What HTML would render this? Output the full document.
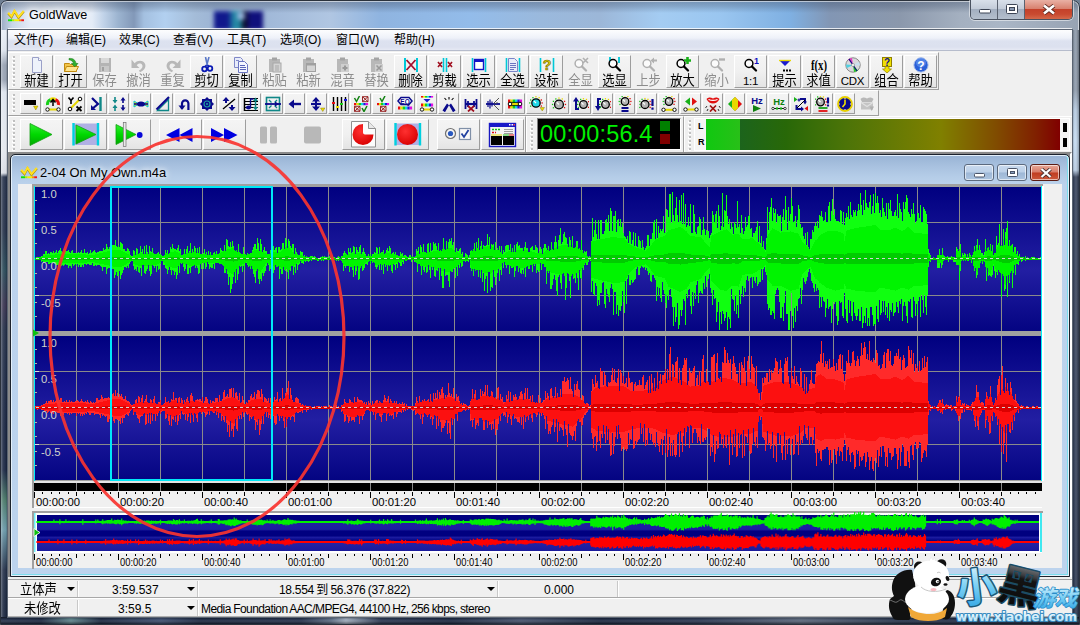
<!DOCTYPE html><html><head><meta charset="utf-8"><title>GoldWave</title><style>
*{margin:0;padding:0;box-sizing:border-box}
html,body{width:1080px;height:625px;overflow:hidden}
body{position:relative;font-family:"Liberation Sans","Noto Sans CJK SC",sans-serif;font-size:12px;color:#000;background:#6f7f92}
.abs{position:absolute}
#frame{position:absolute;left:0;top:0;width:1080px;height:625px;border-radius:7px 7px 0 0;
 background:
 linear-gradient(180deg,rgba(70,86,112,.5) 0,rgba(70,86,112,.32) 6px,rgba(70,86,112,0) 13px,rgba(255,255,255,0) 100%),
 linear-gradient(90deg,#98a8c0 0,#c8d6e8 12px,#e4ecf7 30px,#e4ecf7 92px,#c0d2e8 104px,#9cb4d0 118px,#8298b8 134px,#a4c0e0 144px,#b2d0f0 165px,#a4bcd8 195px,#9cb4d4 215px,#a0b8d8 265px,#b0c6e2 330px,#8fb4e0 380px,#93bcea 470px,#9ab9dd 540px,#9cb7d8 600px,#a4ccf2 660px,#9ac6f0 720px,#7fb0e2 790px,#8296b4 830px,#8b98ac 900px,#a4b0c0 960px,#aab6c6 1000px,#97a3b3 1080px);
 overflow:hidden}
#blob{position:absolute;left:214px;top:11px;width:49px;height:19px;filter:blur(2.200px);background:radial-gradient(ellipse 5px 5px at 27px 5px,#9cb8e0 0,#9cb8e0 60%,rgba(156,184,224,0) 100%),linear-gradient(90deg,#10188c 0,#10188c 28%,#2488a4 40%,#2488a4 52%,#0a0a20 62%,#10107c 74%,#10107c 100%)}
#tline{position:absolute;left:8px;top:28px;width:1064px;height:1px;background:rgba(255,255,255,.8)}
#frame:before{content:"";position:absolute;left:0;top:0;right:0;bottom:0;border:1px solid #2b323c;border-radius:7px 7px 0 0;box-shadow:inset 0 0 0 1px rgba(255,255,255,.55)}
#sideL{position:absolute;left:1px;top:30px;width:7px;height:594px;background:linear-gradient(90deg,rgba(255,255,255,.35) 0,rgba(255,255,255,.1) 2px,rgba(0,0,0,0) 5px,rgba(0,0,0,.45) 7px),linear-gradient(180deg,#e8eef6 0,#dde4ee 20px,#98a2b2 35px,#98a2b2 50px,#dde4ee 62px,#e4e8ee 120px,#d8dce4 143px,#28344c 147px,#26324a 200px,#2a4a58 240px,#3a3450 275px,#26324a 300px,#1c2844 400px,#1c2844 440px,#4a7868 470px,#6a98a8 500px,#26324a 540px,#1c2840 594px)}
#sideR{position:absolute;left:1072px;top:30px;width:7px;height:594px;background:linear-gradient(90deg,rgba(0,0,0,.45) 0,rgba(0,0,0,0) 2px,rgba(255,255,255,.12) 4px,rgba(0,0,0,.25) 7px),linear-gradient(180deg,#8c98a8 0,#8e9aaa 60px,#b4c8de 80px,#c4daf0 110px,#b8cce2 140px,#38445c 147px,#3a465e 300px,#344058 450px,#2c3850 594px)}
#sideB{position:absolute;left:1px;top:617px;width:1078px;height:7px;background:linear-gradient(180deg,rgba(0,0,0,.5) 0,rgba(0,0,0,0) 2px,rgba(255,255,255,.1) 4px,rgba(0,0,0,.4) 7px),linear-gradient(90deg,#26324a 0,#1c2840 40px,#5c8088 70px,#1c2840 100px,#3c4c6c 160px,#1c2840 200px,#24304a 300px,#5a6a80 330px,#9aa6b6 345px,#2a3650 380px,#1c2840 450px,#44506a 520px,#1c2840 600px,#2c3852 700px,#586478 800px,#26324a 900px,#1c2840 1078px)}
#client{position:absolute;left:8px;top:30px;width:1064px;height:587px;background:#f0f0f0;overflow:hidden;box-shadow:0 0 0 1px #5a6472}

#title{position:absolute;left:29px;top:7px;font-size:12.6px;line-height:16px;color:#000;text-shadow:0 0 6px #fff,0 0 10px #fff,0 0 14px rgba(255,255,255,.9)}
#capbtns{position:absolute;left:970px;top:0;width:103px;height:20px;border:1px solid #4a5260;border-top:none;border-radius:0 0 5px 5px;overflow:hidden;box-shadow:0 0 0 1px rgba(255,255,255,.5)}
#capbtns div{position:absolute;top:0;height:19px}
.cb{background:linear-gradient(180deg,#d9e0ea 0,#c3ccd9 45%,#a3afc0 50%,#b4bfcd 100%)}
#cbmin{left:0;width:27px;border-right:1px solid #5a6270}
#cbmax{left:27px;width:27px;border-right:1px solid #5a6270}
#cbclose{left:54px;width:48px;background:linear-gradient(180deg,#e9b0a4 0,#d8816f 45%,#c4412a 50%,#c94a30 75%,#d4694a 100%)}
#menubar{position:absolute;left:0;top:0;width:1064px;height:21px;background:linear-gradient(180deg,#fdfdfe 0,#eef1f9 40%,#dde2f0 55%,#dce1ef 85%,#e6e9f4 100%);border-bottom:1px solid #b6bccc}
#menubar span{position:absolute;top:2px;margin-left:-1px;font-size:12px;line-height:17px;white-space:nowrap}
.tb{position:absolute;background:#f0f0f0;border-top:1px solid #fff;border-left:1px solid #fff;border-right:1px solid #a0a0a0;border-bottom:1px solid #a0a0a0}
.grip{position:absolute;left:3px;width:3px;background:
 repeating-linear-gradient(180deg,#fff 0,#fff 2px,transparent 2px,transparent 4px);}
.grip:after{content:"";position:absolute;left:1px;top:-1px;width:1.500px;height:100%;background:repeating-linear-gradient(180deg,#c0c0c0 0,#c0c0c0 2px,transparent 2px,transparent 4px)}
.b{position:absolute;border:1px solid;border-color:#fff #9d9d9d #9d9d9d #fff;background:linear-gradient(180deg,#f4f4f4 0,#f0f0f0 50%,#e4e4e4 100%)}
.b.d{border-color:transparent;background:none}
.b1{top:2px;width:33px;height:33px}
.b1 i{position:absolute;left:-2px;width:35px;top:16.500px;text-align:center;font-style:normal;font-size:12.300px;line-height:16px;white-space:nowrap;transform:scaleY(1.12);transform-origin:50% 80%}
.b1 i.lt{font-size:11.500px;transform:none;top:17px;letter-spacing:-.3px}
.b1.d i{color:#8c8c8c}
.b1 svg{position:absolute;left:8px;top:1px;width:16px;height:16px}
.b2{top:2px;width:21px;height:21px}
.b2 svg{position:absolute;left:2px;top:2px;width:16px;height:16px}
.b3{top:2px;width:43px;height:31px}
.b3 svg{position:absolute;left:0;top:0;width:41px;height:29px}

#mdi{position:absolute;left:0;top:122px;width:1064px;height:427px;background:#8a8a8a;border:2px solid;border-color:#8a8a8a #fff #fff #8a8a8a}
#child{position:absolute;left:10px;top:154px;width:1060px;height:423px;border-radius:5px 5px 0 0;background:linear-gradient(180deg,#98b3d4 0,#a9c2e0 12px,#b5cde8 22px,#bbd2ec 30px,#bcd3ed 100%);border:1px solid #1c222c;box-shadow:inset 0 0 0 1px #e4f0fa,inset 0 -2px 0 0 #7cdcec,inset -2px 0 0 0 #7cdcec}
#ctitle{position:absolute;left:29px;top:10px;font-size:12.900px;line-height:16px;white-space:nowrap;text-shadow:0 0 5px #fff,0 0 8px #fff}
.cc{position:absolute;top:9px;height:17px;width:30px;border:1px solid #5c6a7e;border-radius:3px;box-shadow:inset 0 0 0 1px rgba(255,255,255,.6);background:linear-gradient(180deg,#c9daee 0,#bcd0e8 48%,#9db7d6 52%,#adc5e0 100%)}
#ccx{background:linear-gradient(180deg,#e8a898 0,#d87c68 48%,#c03c20 52%,#cc5a3c 100%);border-color:#5a1c14}
#status{position:absolute;left:0;top:547px;width:1064px;height:40px;background:#f0f0f0}
#status:before{content:"";position:absolute;left:0;top:2px;width:100%;height:1px;background:#a0a0a0}
#status:after{content:"";position:absolute;left:0;top:39px;width:100%;height:1px;background:#b0b0b0}
#status span{position:absolute;font-size:12px;line-height:16px;white-space:nowrap}
#status span.cj{font-size:12.300px;transform:scaleY(1.1);transform-origin:50% 70%}
.sp{position:absolute;width:1px;background:#c8c8c8;box-shadow:1px 0 0 #fff}
.dd{position:absolute;width:0;height:0;border-left:4px solid transparent;border-right:4px solid transparent;border-top:4px solid #000}
</style></head><body><div id="frame"><div id="sideL"></div><div id="sideR"></div><div id="sideB"></div><div id="blob"></div><div id="tline"></div><svg class="abs" style="left:7px;top:9px" width="18" height="13" viewBox="0 0 18 13"><path d="M1.200 3.800l3.300 3.600L7.500 1.800l4 6.300L16.800 1.800" stroke="#a88c00" stroke-width="2.200" fill="none" transform="translate(0 .7)"/><path d="M1.200 3.800l3.300 3.600L7.500 1.800l4 6.300L16.800 1.800" stroke="#ffe020" stroke-width="2" fill="none"/><rect x="1" y="10.300" width="4" height="1.900" fill="#10e010"/><rect x="5" y="10.300" width="2.500" height="1.900" fill="#b0f000"/><rect x="7.500" y="10.300" width="4.500" height="1.900" fill="#f8f000"/><rect x="12" y="10.300" width="2.200" height="1.900" fill="#ff9000"/><rect x="14.200" y="10.300" width="2.800" height="1.900" fill="#f01010"/></svg><span id="title">GoldWave</span><div id="capbtns"><div class="cb" id="cbmin"><svg class="abs" style="left:8px;top:9px" width="12" height="5"><rect x=".5" y=".5" width="11" height="3.500" rx="1" fill="#fff" stroke="#3c4454"/></svg></div><div class="cb" id="cbmax"><svg class="abs" style="left:8px;top:4px" width="12" height="10"><rect x=".5" y=".5" width="11" height="9" rx="1" fill="#fff" stroke="#3c4454"/><rect x="3.500" y="3.500" width="5" height="3" fill="#8a98b0" stroke="#3c4454"/></svg></div><div id="cbclose"><svg class="abs" style="left:17px;top:4px" width="14" height="11" viewBox="0 0 14 11"><path d="M2 1.500l10 8M12 1.500l-10 8" stroke="#5a2820" stroke-width="4.200"/><path d="M2 1.500l10 8M12 1.500l-10 8" stroke="#fff" stroke-width="2.600"/></svg></div></div><div id="client"><div id="menubar"><span style="left:7px">文件(F)</span><span style="left:59px">编辑(E)</span><span style="left:112px">效果(C)</span><span style="left:166px">查看(V)</span><span style="left:220px">工具(T)</span><span style="left:273px">选项(O)</span><span style="left:329px">窗口(W)</span><span style="left:387px">帮助(H)</span></div><div class="tb" style="left:0;top:22px;width:931px;height:38px"><div class="grip" style="top:4px;height:30px"></div><div class="b b1" style="left:11px"><svg viewBox="0 0 16 16"><path d="M3.5 .5h6l3 3v12h-9z" fill="#eef2fb" stroke="#9aa0c8"/><path d="M9.5 .5v3h3" fill="#fff" stroke="#9aa0c8"/></svg><i>新建</i></div><div class="b b1" style="left:45px"><svg viewBox="0 0 16 16"><path d="M1.5 6.5h5l1 1h6v7h-12z" fill="#f3c54a" stroke="#c28a10"/><path d="M1.5 14.5l2-5h12l-2.5 5z" fill="#ffe590" stroke="#c28a10"/><path d="M6 1.5c4-.5 6.5 1.5 7 5h2l-3.2 3.3L8.500 6.500h2c-.5-2-2-3.500-4.500-3.700z" fill="#2fb02f" stroke="#1a7a1a" stroke-width=".6"/></svg><i>打开</i></div><div class="b b1 d" style="left:79px"><svg viewBox="0 0 16 16"><path d="M2 1h12v14h-12z" fill="#b4b4b4"/><rect x="4" y="1" width="8" height="5" fill="#d8d8d8"/><rect x="4" y="9" width="8" height="6" fill="#c8c8c8"/><rect x="5" y="10" width="2" height="4" fill="#a0a0a0"/></svg><i>保存</i></div><div class="b b1 d" style="left:113px"><svg viewBox="0 0 16 16"><path d="M.5 2.500v8.500h8l-2.800-2.800c1.500-2 4.500-2.200 5.500-.2 1 2.200-.8 4.300-3.200 5.500l1 1.800c4-1.500 6.500-5 5-8.500-1.600-3.800-7.200-4-10.300-.6z" fill="#b8b8b8"/></svg><i>撤消</i></div><div class="b b1 d" style="left:147px"><svg viewBox="0 0 16 16"><path d="M15.500 2.500v8.500h-8l2.800-2.800c-1.500-2-4.500-2.200-5.500-.2-1 2.200.8 4.300 3.200 5.500l-1 1.800c-4-1.500-6.500-5-5-8.500 1.600-3.800 7.200-4 10.300-.6z" fill="#b8b8b8"/></svg><i>重复</i></div><div class="b b1" style="left:181px"><svg viewBox="0 0 16 16"><path d="M6.500 0l2 9M10 0l-2.500 9" stroke="#5a78c8" stroke-width="1.600" fill="none"/><circle cx="5.500" cy="12" r="2.300" fill="none" stroke="#0a1ab4" stroke-width="1.800"/><circle cx="11" cy="11.500" r="2.300" fill="none" stroke="#0a1ab4" stroke-width="1.800"/><path d="M7.200 8l-1 2.200M8.600 8l1.400 1.800" stroke="#0a1ab4" stroke-width="1.500"/></svg><i>剪切</i></div><div class="b b1" style="left:215px"><svg viewBox="0 0 16 16"><path d="M1.500 .5h6l2 2v8h-8z" fill="#e8ecfa" stroke="#8088c8"/><path d="M5.500 4.500h6l3 3v8h-9z" fill="#f4f6ff" stroke="#6a74c0"/><path d="M7 8.500h5M7 10.500h6M7 12.500h6" stroke="#5a64b8"/><path d="M3 3.500h3" stroke="#8088c8"/></svg><i>复制</i></div><div class="b b1 d" style="left:249px"><svg viewBox="0 0 16 16"><rect x="2" y="2" width="11" height="13" fill="#b8b8b8"/><rect x="5" y=".5" width="5" height="3" fill="#a4a4a4"/><rect x="6" y="6" width="8" height="9" fill="#d4d4d4" stroke="#a8a8a8"/><path d="M8 9h4M8 11h4M8 13h4" stroke="#a8a8a8"/></svg><i>粘贴</i></div><div class="b b1 d" style="left:283px"><svg viewBox="0 0 16 16"><rect x="2" y="2" width="11" height="13" fill="#b8b8b8"/><rect x="5" y=".5" width="5" height="3" fill="#a4a4a4"/><rect x="5.500" y="6.500" width="9" height="8" fill="#d4d4d4" stroke="#a0a0a0"/><rect x="5.500" y="6.500" width="9" height="2" fill="#a0a0a0"/></svg><i>粘新</i></div><div class="b b1 d" style="left:317px"><svg viewBox="0 0 16 16"><rect x="2" y="2" width="11" height="13" fill="#b8b8b8"/><rect x="5" y=".5" width="5" height="3" fill="#a4a4a4"/><rect x="6" y="7" width="8" height="8" fill="#cfcfcf"/><path d="M10 8.500v5M7.500 11h5" stroke="#999" stroke-width="2"/></svg><i>混音</i></div><div class="b b1 d" style="left:351px"><svg viewBox="0 0 16 16"><rect x="2" y="2" width="11" height="13" fill="#b8b8b8"/><rect x="5" y=".5" width="5" height="3" fill="#a4a4a4"/><rect x="6" y="7" width="8" height="8" fill="#cfcfcf"/><path d="M7.500 8.500l5 5M12.500 8.500l-5 5" stroke="#999" stroke-width="1.500"/></svg><i>替换</i></div><div class="b b1" style="left:385px"><svg viewBox="0 0 16 16"><path d="M2 1v14M14 1v14" stroke="#00c8d8" stroke-width="2"/><path d="M3.500 3l9 10M12.500 3l-9 10" stroke="#a01030" stroke-width="1.800"/></svg><i>删除</i></div><div class="b b1" style="left:419px"><svg viewBox="0 0 16 16"><path d="M6.500 1v14M9.500 1v14" stroke="#00c8d8" stroke-width="1.600"/><path d="M1 5l4 5M5 5l-4 5M11 5l4 5M15 5l-4 5" stroke="#a01020" stroke-width="1.600"/></svg><i>剪裁</i></div><div class="b b1" style="left:453px"><svg viewBox="0 0 16 16"><path d="M1.500 1v14M14.500 1v14" stroke="#00c8d8" stroke-width="1.600"/><rect x="3.500" y="2.500" width="9" height="10" fill="#fff" stroke="#1414c8" stroke-width="1.400"/><rect x="3" y="2" width="10" height="3" fill="#1414c8"/></svg><i>选示</i></div><div class="b b1" style="left:487px"><svg viewBox="0 0 16 16"><path d="M1.500 1v14M14.500 1v14" stroke="#00c8d8" stroke-width="1.600"/><path d="M3.500 1.500h6l3 3v10h-9z" fill="#e8ecfa" stroke="#7a84c8"/><path d="M5 6.500h6M5 8.500h6M5 10.500h6M5 12.500h4" stroke="#6a74c0"/></svg><i>全选</i></div><div class="b b1" style="left:521px"><svg viewBox="0 0 16 16"><path d="M1.500 1v14M14.500 1v14" stroke="#00c8d8" stroke-width="1.600"/><text x="8" y="13" font-size="14" font-weight="bold" font-family="Liberation Sans,sans-serif" text-anchor="middle" fill="#e8d800" stroke="#6a6000" stroke-width=".6">?</text></svg><i>设标</i></div><div class="b b1 d" style="left:555px"><svg viewBox="0 0 16 16"><circle cx="6" cy="6.500" r="3.900" fill="#fff" fill-opacity=".7" stroke="#b0b0b0" stroke-width="1.500"/><path d="M9 9.500l4 4" stroke="#b0b0b0" stroke-width="2.300" stroke-linecap="round"/><path d="M10 1l5 5M15 1l-5 5" stroke="#b0b0b0" stroke-width="1.600"/></svg><i>全显</i></div><div class="b b1" style="left:589px"><svg viewBox="0 0 16 16"><path d="M3 0v6M12 0v6" stroke="#00c8d8" stroke-width="1.800"/><circle cx="6" cy="6.500" r="3.900" fill="#fff" fill-opacity=".7" stroke="#000" stroke-width="1.500"/><path d="M9 9.500l4 4" stroke="#000" stroke-width="2.300" stroke-linecap="round"/></svg><i>选显</i></div><div class="b b1 d" style="left:623px"><svg viewBox="0 0 16 16"><circle cx="6" cy="6.500" r="3.900" fill="#fff" fill-opacity=".7" stroke="#b0b0b0" stroke-width="1.500"/><path d="M9 9.500l4 4" stroke="#b0b0b0" stroke-width="2.300" stroke-linecap="round"/><path d="M9.500 3.500l3.500-3v2h3v2h-3v2z" fill="#b0b0b0"/></svg><i>上步</i></div><div class="b b1" style="left:657px"><svg viewBox="0 0 16 16"><circle cx="6" cy="6.500" r="3.900" fill="#fff" fill-opacity=".7" stroke="#000" stroke-width="1.500"/><path d="M9 9.500l4 4" stroke="#000" stroke-width="2.300" stroke-linecap="round"/><path d="M12.500 0v7M9 3.500h7" stroke="#18b018" stroke-width="2.600"/></svg><i>放大</i></div><div class="b b1 d" style="left:691px"><svg viewBox="0 0 16 16"><circle cx="6" cy="6.500" r="3.900" fill="#fff" fill-opacity=".7" stroke="#b0b0b0" stroke-width="1.500"/><path d="M9 9.500l4 4" stroke="#b0b0b0" stroke-width="2.300" stroke-linecap="round"/><path d="M10 2.500h6" stroke="#b0b0b0" stroke-width="2.400"/></svg><i>缩小</i></div><div class="b b1" style="left:725px"><svg viewBox="0 0 16 16"><circle cx="6" cy="6.500" r="3.900" fill="#fff" fill-opacity=".7" stroke="#000" stroke-width="1.500"/><path d="M9 9.500l4 4" stroke="#000" stroke-width="2.300" stroke-linecap="round"/><text x="13.500" y="7" font-size="9" font-weight="bold" font-family="Liberation Sans,sans-serif" text-anchor="middle" fill="#1010c0">1</text></svg><i class="lt">1:1</i></div><div class="b b1" style="left:759px"><svg viewBox="0 0 16 16"><path d="M2 3h12l-6 6z" fill="#1a1ad0"/><path d="M2 3.500h12" stroke="#e8d800" stroke-width="1.400"/><path d="M6 13.500h2M9 13.500h2M12 13.500h2" stroke="#000" stroke-width="2"/></svg><i>提示</i></div><div class="b b1" style="left:793px"><svg viewBox="0 0 16 16"><text x="8" y="13" font-size="14" font-weight="bold" font-family="Liberation Serif,serif" text-anchor="middle" fill="#000" textLength="16" lengthAdjust="spacingAndGlyphs">f(x)</text></svg><i>求值</i></div><div class="b b1" style="left:827px"><svg viewBox="0 0 16 16"><circle cx="8" cy="8" r="7.200" fill="#d8d8dc" stroke="#888"/><path d="M8 8L3 2.500A7.200 7.200 0 0 1 7 .9z" fill="#e040c0"/><path d="M8 8l5 5.500a7.200 7.200 0 0 1-4 1.600z" fill="#28c828"/><path d="M8 8L2 11a7.200 7.200 0 0 1-1-3.500z" fill="#50d0e0"/><path d="M8 8l6-3a7.200 7.200 0 0 1 1 3.500z" fill="#c8e0f0"/><path d="M4 2l8 12" stroke="#101080" stroke-width="1.200"/><circle cx="8" cy="8" r="1.500" fill="#fff" stroke="#666" stroke-width=".5"/></svg><i class="lt">CDX</i></div><div class="b b1" style="left:861px"><svg viewBox="0 0 16 16"><rect x="3.500" y=".5" width="9" height="9" fill="#f0e000" stroke="#908000"/><text x="8" y="8.500" font-size="10" font-weight="bold" font-family="Liberation Sans,sans-serif" text-anchor="middle" fill="#101090">?</text><path d="M6 9.500h4v2.500h2.500l-4.500 4-4.500-4h2.500z" fill="#f0e000" stroke="#908000" stroke-width=".7"/></svg><i>组合</i></div><div class="b b1" style="left:895px"><svg viewBox="0 0 16 16"><circle cx="8" cy="8" r="7.200" fill="#2a60d8" stroke="#b8c8e8" stroke-width="1"/><circle cx="8" cy="5.500" r="5" fill="#6a9af0" fill-opacity=".6"/><text x="8" y="12.500" font-size="12" font-weight="bold" font-family="Liberation Sans,sans-serif" text-anchor="middle" fill="#fff">?</text></svg><i>帮助</i></div></div><div class="tb" style="left:0;top:60px;width:871px;height:26px"><div class="grip" style="top:4px;height:18px"></div><div class="b b2" style="left:11px"><svg viewBox="0 0 16 16"><rect x="1" y="4" width="12" height="5" fill="#000"/><path d="M10.500 10h4.500l-2.250 4z" fill="#e8d800" stroke="#807000" stroke-width=".4"/></svg></div><div class="b b2" style="left:33px"><svg viewBox="0 0 16 16"><path d="M2.500 9a5.500 5.500 0 0 1 3-5.500" stroke="#18d018" stroke-width="3" fill="none"/><path d="M5.500 3.300a5.500 5.500 0 0 1 5 0" stroke="#f0e000" stroke-width="3" fill="none"/><path d="M10.500 3.500a5.500 5.500 0 0 1 3 5.500" stroke="#e81010" stroke-width="3" fill="none"/><path d="M8 10V4M5.500 6.500L8 3.500l2.500 3" stroke="#000" stroke-width="1.500" fill="none"/><path d="M2.5 13.5H13.5" stroke="#e8d800" stroke-width="2"/><circle cx="2.5" cy="13.5" r="1.700" fill="#fff" stroke="#000" stroke-width=".9"/><circle cx="13.5" cy="13.5" r="1.700" fill="#fff" stroke="#000" stroke-width=".9"/></svg></div><div class="b b2" style="left:55px"><svg viewBox="0 0 16 16"><path d="M3 13L13 3" stroke="#e8d800" stroke-width="2"/><circle cx="3" cy="13" r="1.800" fill="#fff" stroke="#000"/><circle cx="13" cy="3" r="1.800" fill="#fff" stroke="#000"/><path d="M1.500 1.500L4 4.500 6.500 1.500M4 4.500V8" stroke="#000" stroke-width="1.700" fill="none"/><path d="M9.500 10.500l5 4.500M14.500 10.500l-5 4.500" stroke="#000" stroke-width="1.800"/></svg></div><div class="b b2" style="left:77px"><svg viewBox="0 0 16 16"><path d="M11.500 1v14" stroke="#108888" stroke-width="2.400"/><path d="M3 2l6 6-6 5" stroke="#0a0a8c" stroke-width="2.200" fill="none"/><path d="M2 9v5h5z" fill="#0a0a8c"/></svg></div><div class="b b2" style="left:99px"><svg viewBox="0 0 16 16"><path d="M4 1v5M4 10v5" stroke="#108888" stroke-width="1.600"/><path d="M1.500 4L4 7.500 6.500 4zM1.500 12L4 8.500 6.500 12z" fill="#108888"/><path d="M12 3v4M12 9v4" stroke="#0a0a8c" stroke-width="1.600"/><path d="M9.500 4.500L12 1l2.500 3.500zM9.500 11.500L12 15l2.500-3.500z" fill="#0a0a8c"/></svg></div><div class="b b2" style="left:121px"><svg viewBox="0 0 16 16"><path d="M1 5v6l5-3zM15 5v6l-5-3z" fill="#e8d800" stroke="#10c8d8" stroke-width="1"/><ellipse cx="8" cy="8" rx="4" ry="2.600" fill="#0a0a8c"/><path d="M1 8h14" stroke="#0a0a8c" stroke-width="1.500"/></svg></div><div class="b b2" style="left:143px"><svg viewBox="0 0 16 16"><path d="M2.500 14.500h11v-11z" fill="none" stroke="#108888" stroke-width="1.300"/><path d="M1.500 13.500L14 1" stroke="#0a0a8c" stroke-width="2.200"/></svg></div><div class="b b2" style="left:165px"><svg viewBox="0 0 16 16"><path d="M5 13V7.500a3.200 3.200 0 0 1 6.400 0V14" stroke="#0a0a8c" stroke-width="2.200" fill="none"/><path d="M1.500 9.500h7L5 14z" fill="#0a0a8c"/></svg></div><div class="b b2" style="left:187px"><svg viewBox="0 0 16 16"><path d="M8 1l2 2h3v3l2 2-2 2v3h-3l-2 2-2-2H3v-3L1 8l2-2V3h3z" fill="#0a0a8c"/><circle cx="8" cy="8" r="3" fill="none" stroke="#20a0a0" stroke-width="1.200"/><circle cx="8" cy="8" r="1" fill="#20a0a0"/></svg></div><div class="b b2" style="left:209px"><svg viewBox="0 0 16 16"><path d="M2 13L14 3" stroke="#000" stroke-width="1.300"/><path d="M5 1L1.500 5h2.500v2h2V5h2.500zM11 15l3.500-4H12V9h-2v2H7.500z" fill="#0a0a8c"/></svg></div><div class="b b2" style="left:231px"><svg viewBox="0 0 16 16"><path d="M1 2.500h14M1 5.500h14M1 8.500h14M1 11.500h14M1 14.500h14" stroke="#000" stroke-width="1.200"/><path d="M1.500 2v13" stroke="#000" stroke-width="1.500"/><ellipse cx="5.500" cy="11.500" rx="2.600" ry="2" fill="#0a0a8c"/><path d="M7.500 11.500V3h3" stroke="#0a0a8c" stroke-width="1.400" fill="none"/><path d="M12.500 3v10" stroke="#108888" stroke-width="1.500"/><path d="M10 5l2.500-3.500L15 5zM10 11l2.500 3.500L15 11z" fill="#108888"/></svg></div><div class="b b2" style="left:253px"><svg viewBox="0 0 16 16"><rect x="1.500" y="1.500" width="13" height="13" fill="none" stroke="#108888" stroke-width="1.600"/><path d="M4 4l2.500 2.500M12 4L9.500 6.500M4 12l2.500-2.500M12 12L9.500 9.500" stroke="#108888" stroke-width="1.300"/><path d="M0 8h16" stroke="#0a0a8c" stroke-width="1.800"/><path d="M10 5.500L14 8l-4 2.500z" fill="#0a0a8c"/></svg></div><div class="b b2" style="left:275px"><svg viewBox="0 0 16 16"><path d="M4 8h10" stroke="#0a0a8c" stroke-width="2.400"/><path d="M7 3.500L1.500 8 7 12.500z" fill="#0a0a8c"/></svg></div><div class="b b2" style="left:297px"><svg viewBox="0 0 16 16"><path d="M7 2v12" stroke="#0a0a8c" stroke-width="2"/><path d="M3 5.500L7 1l4 4.500zM3 10.500L7 15l4-4.500z" fill="#0a0a8c"/><path d="M2 8h10" stroke="#0a0a8c" stroke-width="2.200"/><path d="M11.500 12h4.500l-2.250 3.500z" fill="#e8d800" stroke="#807000" stroke-width=".4"/></svg></div><div class="b b2" style="left:319px"><svg viewBox="0 0 16 16"><path d="M2.500 1v14M6.500 1v14M10.500 1v14M14.500 1v14" stroke="#000" stroke-width="1.400"/><rect x="1" y="6" width="3" height="2" fill="#e81010"/><rect x="5" y="10" width="3" height="2" fill="#f0e000"/><rect x="9" y="7" width="3" height="2" fill="#18d018"/><rect x="13" y="3" width="3" height="2" fill="#1818e0"/></svg></div><div class="b b2" style="left:341px"><svg viewBox="0 0 16 16"><path d="M1.5 2l2 3.500 3-5.500" stroke="#108010" stroke-width="1.500" fill="none"/><path d="M9.5 0.7h5.500v5h-5.500zl5.500 5m0-5l-5.500 5" stroke="#901010" stroke-width=".9" fill="none"/><rect x="1.00" y="7" width="2.43" height="2.2" fill="#e81010"/><rect x="3.33" y="7" width="2.43" height="2.2" fill="#f0e000"/><rect x="5.67" y="7" width="2.43" height="2.2" fill="#18d018"/><rect x="8.00" y="7" width="2.43" height="2.2" fill="#10d8e0"/><rect x="10.33" y="7" width="2.43" height="2.2" fill="#1818e0"/><rect x="12.67" y="7" width="2.43" height="2.2" fill="#e010e0"/><path d="M1.5 10.3h5.500v5h-5.500zl5.500 5m0-5l-5.500 5" stroke="#901010" stroke-width=".9" fill="none"/><path d="M9 12l2 3.500 3-5.500" stroke="#108010" stroke-width="1.500" fill="none"/></svg></div><div class="b b2" style="left:363px"><svg viewBox="0 0 16 16"><path d="M5 2l2 3.500 3-5.500" stroke="#108010" stroke-width="1.500" fill="none"/><rect x="2.00" y="7" width="2.10" height="2.2" fill="#e81010"/><rect x="4.00" y="7" width="2.10" height="2.2" fill="#f0e000"/><rect x="6.00" y="7" width="2.10" height="2.2" fill="#18d018"/><rect x="8.00" y="7" width="2.10" height="2.2" fill="#10d8e0"/><rect x="10.00" y="7" width="2.10" height="2.2" fill="#1818e0"/><rect x="12.00" y="7" width="2.10" height="2.2" fill="#e010e0"/><path d="M5.5 10.3h5.500v5h-5.500zl5.500 5m0-5l-5.500 5" stroke="#901010" stroke-width=".9" fill="none"/></svg></div><div class="b b2" style="left:385px"><svg viewBox="0 0 16 16"><path d="M1 5l3-3.500h8l3 3.500-3 3.500H4z" fill="#fff" stroke="#0a0a8c" stroke-width="1.500"/><text x="8" y="7.800" font-size="6.500" font-weight="bold" font-family="Liberation Sans,sans-serif" text-anchor="middle" fill="#0a0a8c">EQ</text><rect x="1.00" y="10.5" width="2.43" height="3" fill="#e81010"/><rect x="3.33" y="10.5" width="2.43" height="3" fill="#f0e000"/><rect x="5.67" y="10.5" width="2.43" height="3" fill="#18d018"/><rect x="8.00" y="10.5" width="2.43" height="3" fill="#10d8e0"/><rect x="10.33" y="10.5" width="2.43" height="3" fill="#1818e0"/><rect x="12.67" y="10.5" width="2.43" height="3" fill="#e010e0"/></svg></div><div class="b b2" style="left:407px"><svg viewBox="0 0 16 16"><rect x="2.00" y="0" width="2.10" height="1.6" fill="#e81010"/><rect x="4.00" y="0" width="2.10" height="1.6" fill="#f0e000"/><rect x="6.00" y="0" width="2.10" height="1.6" fill="#18d018"/><rect x="8.00" y="0" width="2.10" height="1.6" fill="#10d8e0"/><rect x="10.00" y="0" width="2.10" height="1.6" fill="#1818e0"/><rect x="12.00" y="0" width="2.10" height="1.6" fill="#e010e0"/><path d="M4.500 3h7L8 6.500z" fill="#1818d0"/><rect x="2.00" y="7.5" width="2.10" height="3" fill="#e81010"/><rect x="4.00" y="7.5" width="2.10" height="3" fill="#f0e000"/><rect x="6.00" y="7.5" width="2.10" height="3" fill="#18d018"/><rect x="8.00" y="7.5" width="2.10" height="3" fill="#10d8e0"/><rect x="10.00" y="7.5" width="2.10" height="3" fill="#1818e0"/><rect x="12.00" y="7.5" width="2.10" height="3" fill="#e010e0"/><path d="M3 13.5H13" stroke="#e8d800" stroke-width="2"/><circle cx="3" cy="13.5" r="1.700" fill="#fff" stroke="#000" stroke-width=".9"/><circle cx="13" cy="13.5" r="1.700" fill="#fff" stroke="#000" stroke-width=".9"/></svg></div><div class="b b2" style="left:429px"><svg viewBox="0 0 16 16"><path d="M1.500 14.500L6 7.500l2 1.700-4 7zM14.500 14.500L10 7.500 8 9.200l4 7z" fill="#0a0a8c"/><path d="M8 1v2.500M3.500 2l1.800 2M12.500 2l-1.800 2" stroke="#000" stroke-width="1.100"/></svg></div><div class="b b2" style="left:451px"><svg viewBox="0 0 16 16"><path d="M2 8h12" stroke="#0a0a8c" stroke-width="2.200"/><path d="M2.500 3v10M13.500 3v10M5 5v6M11 5v6" stroke="#0a0a8c" stroke-width="1.800"/><path d="M5 10l6 5.500M11 10l-6 5.500" stroke="#a01020" stroke-width="1.700"/></svg></div><div class="b b2" style="left:473px"><svg viewBox="0 0 16 16"><path d="M1 8h14" stroke="#0a0a8c" stroke-width="1.800"/><path d="M3 5v6M5 3.500v9M7 5.500v5" stroke="#0a0a8c" stroke-width="1.200"/><path d="M9 7l5-5M9 9l5 5M9.500 8l3-1.500" stroke="#444" stroke-width=".9"/></svg></div><div class="b b2" style="left:495px"><svg viewBox="0 0 16 16"><rect x="1.00" y="3.5" width="2.43" height="9" fill="#e81010"/><rect x="3.33" y="3.5" width="2.43" height="9" fill="#f0e000"/><rect x="5.67" y="3.5" width="2.43" height="9" fill="#18d018"/><rect x="8.00" y="3.5" width="2.43" height="9" fill="#10d8e0"/><rect x="10.33" y="3.5" width="2.43" height="9" fill="#1818e0"/><rect x="12.67" y="3.5" width="2.43" height="9" fill="#e010e0"/><path d="M3 8h10" stroke="#e8d800" stroke-width="2.400"/><path d="M3 8h10" stroke="#000" stroke-width="3.600" stroke-opacity="0"/><rect x="2.500" y="6.300" width="11" height="3.400" fill="none" stroke="#000" stroke-width=".8"/><circle cx="3" cy="8" r="1.800" fill="#fff" stroke="#000" stroke-width=".9"/><circle cx="13" cy="8" r="1.800" fill="#fff" stroke="#000" stroke-width=".9"/></svg></div><div class="b b2" style="left:517px"><svg viewBox="0 0 16 16"><rect x="1.0" y="9.5" width="1.300" height="1.300" fill="#18c018"/><rect x="0.1" y="6.3" width="1.300" height="1.300" fill="#18c018"/><rect x="1.0" y="3.3" width="1.300" height="1.300" fill="#18c018"/><rect x="3.3" y="1.0" width="1.300" height="1.300" fill="#18c018"/><rect x="6.3" y="0.1" width="1.300" height="1.300" fill="#e8d800"/><rect x="9.5" y="1.0" width="1.300" height="1.300" fill="#e8d800"/><rect x="11.7" y="3.3" width="1.300" height="1.300" fill="#e01010"/><rect x="12.5" y="6.3" width="1.300" height="1.300" fill="#e01010"/><rect x="11.7" y="9.4" width="1.300" height="1.300" fill="#e01010"/><circle cx="7" cy="7" r="4.2" fill="#20d8e8" stroke="#000" stroke-width="1.300"/><path d="M7 7l-2.200-2.200" stroke="#fff" stroke-width="1.200"/><path d="M11 11.500h4.500l-2.250 3.500z" fill="#e8d800" stroke="#807000" stroke-width=".4"/></svg></div><div class="b b2" style="left:539px"><svg viewBox="0 0 16 16"><rect x="1.8" y="11.1" width="1.300" height="1.300" fill="#18c018"/><rect x="0.9" y="7.8" width="1.300" height="1.300" fill="#18c018"/><rect x="1.8" y="4.7" width="1.300" height="1.300" fill="#18c018"/><rect x="4.2" y="2.3" width="1.300" height="1.300" fill="#18c018"/><rect x="7.3" y="1.4" width="1.300" height="1.300" fill="#e8d800"/><rect x="10.6" y="2.3" width="1.300" height="1.300" fill="#e8d800"/><rect x="12.9" y="4.7" width="1.300" height="1.300" fill="#e01010"/><rect x="13.8" y="7.8" width="1.300" height="1.300" fill="#e01010"/><rect x="12.9" y="11.0" width="1.300" height="1.300" fill="#e01010"/><circle cx="8" cy="8.5" r="4.4" fill="#b4b4b4" stroke="#000" stroke-width="1.300"/><path d="M8 8.5l-2.200-2.200" stroke="#fff" stroke-width="1.200"/></svg></div><div class="b b2" style="left:561px"><svg viewBox="0 0 16 16"><path d="M3 3v10h3" stroke="#0a0a8c" stroke-width="2" fill="none"/><path d="M0 5.500L3 1l3 4.500z" fill="#0a0a8c"/><rect x="4.8" y="10.8" width="1.300" height="1.300" fill="#18c018"/><rect x="4.0" y="7.8" width="1.300" height="1.300" fill="#18c018"/><rect x="4.8" y="5.0" width="1.300" height="1.300" fill="#18c018"/><rect x="7.0" y="2.8" width="1.300" height="1.300" fill="#18c018"/><rect x="9.8" y="2.1" width="1.300" height="1.300" fill="#e8d800"/><rect x="12.8" y="2.8" width="1.300" height="1.300" fill="#e8d800"/><rect x="14.9" y="5.0" width="1.300" height="1.300" fill="#e01010"/><rect x="15.7" y="7.8" width="1.300" height="1.300" fill="#e01010"/><rect x="14.9" y="10.7" width="1.300" height="1.300" fill="#e01010"/><circle cx="10.5" cy="8.5" r="3.8" fill="#b4b4b4" stroke="#000" stroke-width="1.300"/><path d="M10.5 8.5l-2.200-2.200" stroke="#fff" stroke-width="1.200"/></svg></div><div class="b b2" style="left:583px"><svg viewBox="0 0 16 16"><path d="M3 11V3h3" stroke="#0a0a8c" stroke-width="2" fill="none"/><path d="M0 10L3 15l3-5z" fill="#0a0a8c"/><rect x="4.8" y="10.8" width="1.300" height="1.300" fill="#18c018"/><rect x="4.0" y="7.8" width="1.300" height="1.300" fill="#18c018"/><rect x="4.8" y="5.0" width="1.300" height="1.300" fill="#18c018"/><rect x="7.0" y="2.8" width="1.300" height="1.300" fill="#18c018"/><rect x="9.8" y="2.1" width="1.300" height="1.300" fill="#e8d800"/><rect x="12.8" y="2.8" width="1.300" height="1.300" fill="#e8d800"/><rect x="14.9" y="5.0" width="1.300" height="1.300" fill="#e01010"/><rect x="15.7" y="7.8" width="1.300" height="1.300" fill="#e01010"/><rect x="14.9" y="10.7" width="1.300" height="1.300" fill="#e01010"/><circle cx="10.5" cy="8.5" r="3.8" fill="#b4b4b4" stroke="#000" stroke-width="1.300"/><path d="M10.5 8.5l-2.200-2.200" stroke="#fff" stroke-width="1.200"/></svg></div><div class="b b2" style="left:605px"><svg viewBox="0 0 16 16"><rect x="2.3" y="7.8" width="1.300" height="1.300" fill="#18c018"/><rect x="1.6" y="4.8" width="1.300" height="1.300" fill="#18c018"/><rect x="2.3" y="2.0" width="1.300" height="1.300" fill="#18c018"/><rect x="4.5" y="-0.2" width="1.300" height="1.300" fill="#18c018"/><rect x="7.3" y="-0.9" width="1.300" height="1.300" fill="#e8d800"/><rect x="10.2" y="-0.2" width="1.300" height="1.300" fill="#e8d800"/><rect x="12.4" y="2.0" width="1.300" height="1.300" fill="#e01010"/><rect x="13.2" y="4.8" width="1.300" height="1.300" fill="#e01010"/><rect x="12.4" y="7.7" width="1.300" height="1.300" fill="#e01010"/><circle cx="8" cy="5.5" r="3.8" fill="#b4b4b4" stroke="#000" stroke-width="1.300"/><path d="M8 5.5l-2.200-2.200" stroke="#fff" stroke-width="1.200"/><path d="M4.500 12h7M4.500 15h7" stroke="#0a0a8c" stroke-width="1.800"/></svg></div><div class="b b2" style="left:627px"><svg viewBox="0 0 16 16"><rect x="0.2" y="10.8" width="1.300" height="1.300" fill="#18c018"/><rect x="-0.7" y="7.8" width="1.300" height="1.300" fill="#18c018"/><rect x="0.2" y="4.8" width="1.300" height="1.300" fill="#18c018"/><rect x="2.4" y="2.7" width="1.300" height="1.300" fill="#18c018"/><rect x="5.3" y="1.9" width="1.300" height="1.300" fill="#e8d800"/><rect x="8.3" y="2.7" width="1.300" height="1.300" fill="#e8d800"/><rect x="10.5" y="4.8" width="1.300" height="1.300" fill="#e01010"/><rect x="11.3" y="7.8" width="1.300" height="1.300" fill="#e01010"/><rect x="10.5" y="10.8" width="1.300" height="1.300" fill="#e01010"/><circle cx="6" cy="8.5" r="4" fill="#b4b4b4" stroke="#000" stroke-width="1.300"/><path d="M6 8.5l-2.200-2.200" stroke="#fff" stroke-width="1.200"/><path d="M13.500 3v7" stroke="#0a0a8c" stroke-width="2.200"/><rect x="12.400" y="11.500" width="2.200" height="2.200" fill="#0a0a8c"/></svg></div><div class="b b2" style="left:649px"><svg viewBox="0 0 16 16"><rect x="2.3" y="7.8" width="1.300" height="1.300" fill="#18c018"/><rect x="1.6" y="4.8" width="1.300" height="1.300" fill="#18c018"/><rect x="2.3" y="2.0" width="1.300" height="1.300" fill="#18c018"/><rect x="4.5" y="-0.2" width="1.300" height="1.300" fill="#18c018"/><rect x="7.3" y="-0.9" width="1.300" height="1.300" fill="#e8d800"/><rect x="10.2" y="-0.2" width="1.300" height="1.300" fill="#e8d800"/><rect x="12.4" y="2.0" width="1.300" height="1.300" fill="#e01010"/><rect x="13.2" y="4.8" width="1.300" height="1.300" fill="#e01010"/><rect x="12.4" y="7.7" width="1.300" height="1.300" fill="#e01010"/><circle cx="8" cy="5.5" r="3.8" fill="#b4b4b4" stroke="#000" stroke-width="1.300"/><path d="M8 5.5l-2.200-2.200" stroke="#fff" stroke-width="1.200"/><path d="M2.5 13.8H13.5" stroke="#e8d800" stroke-width="2"/><circle cx="2.5" cy="13.8" r="1.700" fill="#fff" stroke="#000" stroke-width=".9"/><circle cx="13.5" cy="13.8" r="1.700" fill="#fff" stroke="#000" stroke-width=".9"/></svg></div><div class="b b2" style="left:671px"><svg viewBox="0 0 16 16"><path d="M7 1.500v8L2 5.500z" fill="#18b018"/><path d="M9 1.500v8l5-4z" fill="#e01010"/><path d="M2.5 13.5H13.5" stroke="#e8d800" stroke-width="2"/><circle cx="2.5" cy="13.5" r="1.700" fill="#fff" stroke="#000" stroke-width=".9"/><circle cx="13.5" cy="13.5" r="1.700" fill="#fff" stroke="#000" stroke-width=".9"/></svg></div><div class="b b2" style="left:693px"><svg viewBox="0 0 16 16"><path d="M1.500 3c2-2 4-2 6.500-.5 2.500-1.500 4.500-1.500 6.500.5-1.500 3-4 4.500-6.500 4.500S3 6 1.500 3z" fill="#e01010"/><path d="M3.500 3.500c3 1.200 6 1.200 9 0" stroke="#fff" stroke-width="1.200" fill="none"/><path d="M5 9.500l6 6M11 9.500l-6 6" stroke="#a01010" stroke-width="1.700"/><path d="M2 10l-1.500 2M14 10l1.500 2M3 13l-1 2M13 13l1 2" stroke="#000" stroke-width=".8"/></svg></div><div class="b b2" style="left:715px"><svg viewBox="0 0 16 16"><path d="M8 1L1 8l7 7z" fill="#18b018"/><path d="M8 1l7 7-7 7z" fill="#e01010"/><path d="M5 4l3-3 3 3v8l-3 3-3-3z" fill="#e8d800"/></svg></div><div class="b b2" style="left:737px"><svg viewBox="0 0 16 16"><text x="8" y="7.500" font-size="9.500" font-weight="bold" font-family="Liberation Sans,sans-serif" text-anchor="middle" fill="#0a0a8c">Hz</text><path d="M4 9v7l8-3.500z" fill="#108010"/></svg></div><div class="b b2" style="left:759px"><svg viewBox="0 0 16 16"><text x="8" y="8.500" font-size="9.500" font-weight="bold" font-family="Liberation Sans,sans-serif" text-anchor="middle" fill="#108010">Hz</text><path d="M1 12.500h14" stroke="#000" stroke-width="1"/><circle cx="2" cy="12.500" r="1.200" fill="#fff" stroke="#000" stroke-width=".7"/><circle cx="14" cy="12.500" r="1.200" fill="#fff" stroke="#000" stroke-width=".7"/><circle cx="6" cy="12.500" r="1.200" fill="#18b018"/><circle cx="10" cy="12.500" r="1.200" fill="#18b018"/></svg></div><div class="b b2" style="left:781px"><svg viewBox="0 0 16 16"><path d="M1 1v5l3.500-2.500z" fill="#18b018"/><path d="M15 10v5l-3.500-2.500z" fill="#e01010"/><path d="M7 3h5v3.500M3.500 9v4h6" stroke="#0a0a8c" stroke-width="2" fill="none"/><path d="M4 12l8-8" stroke="#000" stroke-width="1"/><path d="M6 2.500v3M4.500 4h3" stroke="#0a0a8c" stroke-width="1.200"/><path d="M10 5.500l2 3 2-3zM8 10.500l3 2.500-3 2.500z" fill="#0a0a8c"/></svg></div><div class="b b2" style="left:803px"><svg viewBox="0 0 16 16"><rect x="-0.2" y="8.2" width="1.300" height="1.300" fill="#18c018"/><rect x="-0.9" y="5.3" width="1.300" height="1.300" fill="#18c018"/><rect x="-0.2" y="2.5" width="1.300" height="1.300" fill="#18c018"/><rect x="2.0" y="0.3" width="1.300" height="1.300" fill="#18c018"/><rect x="4.8" y="-0.4" width="1.300" height="1.300" fill="#e8d800"/><rect x="7.8" y="0.3" width="1.300" height="1.300" fill="#e8d800"/><rect x="9.9" y="2.5" width="1.300" height="1.300" fill="#e01010"/><rect x="10.7" y="5.3" width="1.300" height="1.300" fill="#e01010"/><rect x="9.9" y="8.2" width="1.300" height="1.300" fill="#e01010"/><circle cx="5.5" cy="6" r="3.8" fill="#b4b4b4" stroke="#000" stroke-width="1.300"/><path d="M5.5 6l-2.200-2.200" stroke="#fff" stroke-width="1.200"/><path d="M13 1.500v6" stroke="#0a0a8c" stroke-width="2.200"/><rect x="11.900" y="8.500" width="2.200" height="2" fill="#0a0a8c"/><path d="M3.500 12h9" stroke="#18a018" stroke-width="1.800"/><path d="M3.500 15h9" stroke="#e01010" stroke-width="1.800"/></svg></div><div class="b b2" style="left:825px"><svg viewBox="0 0 16 16"><circle cx="8" cy="8" r="7" fill="#0a0a8c" stroke="#e8d000" stroke-width="1.800"/><path d="M8 3.500V8L5.500 11" stroke="#f0e000" stroke-width="1.600" fill="none"/><path d="M8 2v1M8 13v1M2 8h1M13 8h1" stroke="#fff" stroke-width="1"/></svg></div><div class="b b2 d" style="left:847px"><svg viewBox="0 0 16 16"><path d="M1.500 3c2-2 4-2 6.500-.5 2.500-1.500 4.500-1.500 6.500.5L13 6H3z" fill="#b8b8b8"/><path d="M2 6.500h12v7H2z" fill="#c4c4c4"/><path d="M2 6.500l6 4 6-4" stroke="#e0e0e0" stroke-width="1.200" fill="none"/><path d="M10.500 10.500h4.500L12.700 15z" fill="#b0b0b0"/></svg></div></div><div class="tb" style="left:0;top:86px;width:518px;height:37px"><div class="grip" style="top:4px;height:30px"></div><div class="b b3" style="left:11px"><svg viewBox="0 0 41 29"><defs><linearGradient id="gg" x1="0" y1="0" x2="0" y2="1"><stop offset="0" stop-color="#30f030"/><stop offset=".5" stop-color="#00d800"/><stop offset="1" stop-color="#00a800"/></linearGradient><radialGradient id="rg" cx=".4" cy=".35" r=".7"><stop offset="0" stop-color="#ff3030"/><stop offset="1" stop-color="#d80000"/></radialGradient></defs><path d="M9 3.500v22l22-11z" fill="url(#gg)" stroke="#10a010" stroke-width=".8"/></svg></div><div class="b b3" style="left:55px"><svg viewBox="0 0 41 29"><rect x="8" y="3.500" width="25" height="21.500" fill="#b0b0e4"/><path d="M8.500 3v22.500M33 3v22.500" stroke="#00d0e0" stroke-width="2.400"/><path d="M11 5v19l20-9.500z" fill="url(#gg)" stroke="#10a010" stroke-width=".8"/></svg></div><div class="b b3" style="left:99px"><svg viewBox="0 0 41 29"><path d="M7 4.500v20l20-10z" fill="url(#gg)" stroke="#10a010" stroke-width=".8"/><rect x="14.300" y="2.500" width="2.700" height="24" fill="#e8e8e8" stroke="#707070" stroke-width=".7"/><circle cx="30.700" cy="15" r="2.900" fill="#0808d8"/></svg></div><div class="b b3" style="left:150px"><svg viewBox="0 0 41 29"><path d="M19.500 8v14L6 15zM32.500 8v14L19.500 15z" fill="#0000e0"/></svg></div><div class="b b3" style="left:194px"><svg viewBox="0 0 41 29"><path d="M7 8v14l13-7zM20 8v14l13.500-7z" fill="#0000e0"/></svg></div><div class="b b3 d" style="left:238px"><svg viewBox="0 0 41 29"><rect x="12" y="6.500" width="7" height="17" rx="1.500" fill="#b8b8b8"/><rect x="22" y="6.500" width="7" height="17" rx="1.500" fill="#b8b8b8"/></svg></div><div class="b b3 d" style="left:282px"><svg viewBox="0 0 41 29"><rect x="12" y="6.500" width="17" height="17" rx="2" fill="#b8b8b8"/></svg></div><div class="b b3" style="left:333px"><svg viewBox="0 0 41 29"><path d="M8.500 1.500h17l7 7v18.500h-24z" fill="#fcfcfc" stroke="#909090"/><path d="M25.500 1.500v7h7" fill="#e8e8e8" stroke="#909090"/><path d="M20 4a10.500 10.500 0 1 0 10.500 10.500H22a2 2 0 0 1-2-2z" fill="url(#rg)"/></svg></div><div class="b b3" style="left:377px"><svg viewBox="0 0 41 29"><rect x="8" y="3.500" width="25" height="21.500" fill="#b0b0e4"/><path d="M8.500 3v22.500M33 3v22.500" stroke="#00d0e0" stroke-width="2.400"/><circle cx="20.500" cy="14.500" r="10.500" fill="url(#rg)"/></svg></div><div class="b b3" style="left:428px"><svg viewBox="0 0 41 29"><circle cx="12.500" cy="13.500" r="5" fill="#f4f4f4" stroke="#707070" stroke-width="1.200"/><circle cx="12.500" cy="13.500" r="2.600" fill="#2858c0"/><rect x="21.500" y="8.500" width="11" height="11" fill="#f8f8f8" stroke="#8090a8" stroke-width="1.200"/><path d="M23.500 13.500l2.500 3.500 4.500-7" stroke="#2040a0" stroke-width="1.800" fill="none"/></svg></div><div class="b b3" style="left:472px"><svg viewBox="0 0 41 29"><rect x="7.500" y="3.500" width="26" height="23" fill="#f4f4f4" stroke="#1818c0" stroke-width="1.400"/><rect x="7" y="3" width="27" height="4" fill="#1818c8"/><rect x="27" y="4" width="1.500" height="1.500" fill="#fff"/><rect x="29.500" y="4" width="1.500" height="1.500" fill="#fff"/><rect x="31.500" y="4" width="1.500" height="1.500" fill="#f44"/><rect x="9" y="16" width="11" height="9" fill="#000"/><rect x="21" y="16" width="11" height="9" fill="#000"/><path d="M10 9.500h2M13 9.500h2M16 9.500h2" stroke="#18c018" stroke-width="1.600"/><path d="M10 12.500h2M13 12.500h1" stroke="#e01010" stroke-width="1.300"/><path d="M22 9.500h9M22 11.500h9M22 13.500h9" stroke="#888" stroke-width=".8"/><path d="M9 15h11" stroke="#e8d800"/><path d="M21 15h6" stroke="#18c018"/><path d="M27 15h5" stroke="#e01010"/></svg></div></div><div class="tb" style="left:518px;top:86px;width:158px;height:37px"><div class="grip" style="top:4px;height:30px"></div><div class="abs" style="left:10px;top:1px;width:144px;height:32px;border:1px solid;border-color:#808080 #fff #fff #808080;background:#000"><span class="abs" id="clock" style="left:2px;top:1px;font-size:23.500px;line-height:28px;color:#00f000;white-space:nowrap;letter-spacing:.15px">00:00:56.4</span><div class="abs" style="left:122px;top:2px;width:10px;height:10px;background:#008000"></div><div class="abs" style="left:122px;top:15px;width:10px;height:10px;background:#800000"></div></div></div><div class="tb" style="left:676px;top:86px;width:388px;height:37px;border-right:none"><div class="grip" style="top:4px;height:30px"></div><div class="abs" style="left:9px;top:1px;width:376px;height:33px;background:#f4f4f4;border:1px solid #fff"><span class="abs" style="left:3px;top:2px;font-size:9px;font-weight:bold;line-height:10px">L</span><span class="abs" style="left:3px;top:18px;font-size:9px;font-weight:bold;line-height:10px">R</span><div class="abs" style="left:11px;top:0;width:354px;height:31px;background:linear-gradient(90deg,#0c580c 0,#1c641c 34px,#286808 80px,#4c7408 140px,#808000 235px,#804c00 290px,#802000 330px,#800000 354px)"></div><div class="abs" style="left:11px;top:0;width:34px;height:31px;background:linear-gradient(90deg,#10c810 0,#28c018 100%)"></div><div class="abs" style="left:368px;top:4px;width:4px;height:9px;background:#000"></div><div class="abs" style="left:368px;top:19px;width:4px;height:9px;background:#000"></div></div></div><div id="mdi"></div><div id="status"><div class="sp" style="left:69px;top:4px;height:16px"></div><div class="sp" style="left:189px;top:4px;height:16px"></div><div class="sp" style="left:489px;top:4px;height:16px"></div><div class="sp" style="left:609px;top:4px;height:16px"></div><div class="sp" style="left:69px;top:23px;height:16px"></div><div class="sp" style="left:189px;top:23px;height:16px"></div><div class="abs" style="left:0;top:20px;width:1064px;height:1px;background:#a8a8a8"></div><div class="abs" style="left:0;top:21px;width:1064px;height:1px;background:#fff"></div><span class="cj" style="left:12px;top:5px">立体声</span><div class="dd" style="left:59px;top:10px"></div><span style="left:104px;top:5px">3:59.537</span><div class="dd" style="left:179px;top:10px"></div><span style="left:271px;top:5px;word-spacing:-.6px;letter-spacing:-.3px">18.554 到 56.376 (37.822)</span><div class="dd" style="left:479px;top:10px"></div><span style="left:536px;top:5px">0.000</span><span class="cj" style="left:16px;top:24px">未修改</span><span style="left:110px;top:24px">3:59.5</span><div class="dd" style="left:179px;top:29px"></div><span style="left:193px;top:24px;letter-spacing:-.58px;word-spacing:-.3px">Media Foundation AAC/MPEG4, 44100 Hz, 256 kbps, stereo</span></div></div><div id="child"><svg class="abs" style="left:9px;top:11px" width="18" height="13" viewBox="0 0 18 13"><path d="M1.200 3.800l3.300 3.600L7.500 1.800l4 6.300L16.800 1.800" stroke="#a88c00" stroke-width="2.200" fill="none" transform="translate(0 .7)"/><path d="M1.200 3.800l3.300 3.600L7.500 1.800l4 6.300L16.800 1.800" stroke="#ffe020" stroke-width="2" fill="none"/><rect x="1" y="10.300" width="4" height="1.900" fill="#10e010"/><rect x="5" y="10.300" width="2.500" height="1.900" fill="#b0f000"/><rect x="7.500" y="10.300" width="4.500" height="1.900" fill="#f8f000"/><rect x="12" y="10.300" width="2.200" height="1.900" fill="#ff9000"/><rect x="14.200" y="10.300" width="2.800" height="1.900" fill="#f01010"/></svg><span id="ctitle">2-04 On My Own.m4a</span><div class="cc" style="left:953px"><svg class="abs" style="left:9px;top:8px" width="11" height="5"><rect x=".5" y=".5" width="10" height="3.500" rx="1" fill="#fff" stroke="#4a5468"/></svg></div><div class="cc" style="left:986px"><svg class="abs" style="left:9px;top:3px" width="11" height="10"><rect x=".5" y=".5" width="10" height="8" rx="1" fill="#fff" stroke="#4a5468"/><rect x="3.500" y="3.500" width="4" height="2" fill="#8aa0c0" stroke="#4a5468"/></svg></div><div class="cc" id="ccx" style="left:1019px"><svg class="abs" style="left:9px;top:3px" width="12" height="10" viewBox="0 0 12 10"><path d="M1.500 1l9 8M10.500 1l-9 8" stroke="#4a3030" stroke-width="3.800"/><path d="M1.500 1l9 8M10.500 1l-9 8" stroke="#fff" stroke-width="2.200"/></svg></div></div></div><svg id="wv" class="abs" style="left:0;top:0" width="1080" height="625" viewBox="0 0 1080 625"><defs><linearGradient id="bg" x1="0" y1="0" x2="0" y2="1"><stop offset="0" stop-color="#000080"/><stop offset=".58" stop-color="#221ea2"/><stop offset="1" stop-color="#040482"/></linearGradient><linearGradient id="ovg" x1="0" y1="0" x2="0" y2="1"><stop offset="0" stop-color="#000080"/><stop offset=".17" stop-color="#000080"/><stop offset=".2" stop-color="#2020a4"/><stop offset=".4" stop-color="#1c1ca0"/><stop offset=".45" stop-color="#000080"/><stop offset=".58" stop-color="#000080"/><stop offset=".62" stop-color="#1c1ca0"/><stop offset=".72" stop-color="#000080"/><stop offset=".78" stop-color="#2222a6"/><stop offset="1" stop-color="#1a1a9c"/></linearGradient></defs><rect x="18" y="184" width="1044" height="384" fill="#f0f0f0"/><rect x="32" y="184" width="1011" height="3" fill="#a0a0a0"/><rect x="32" y="184" width="2" height="324" fill="#a0a0a0"/><rect x="34" y="187" width="1008" height="294" fill="#a0a0a0"/><rect x="35" y="187" width="1006" height="144" fill="url(#bg)"/><rect x="35" y="336" width="1006" height="144" fill="url(#bg)"/><path d="M76.500 187V331M76.500 336V480M118.500 187V331M118.500 336V480M160.500 187V331M160.500 336V480M202.500 187V331M202.500 336V480M244.500 187V331M244.500 336V480M286.500 187V331M286.500 336V480M328.500 187V331M328.500 336V480M370.500 187V331M370.500 336V480M412.500 187V331M412.500 336V480M454.500 187V331M454.500 336V480M496.500 187V331M496.500 336V480M539.500 187V331M539.500 336V480M581.500 187V331M581.500 336V480M623.500 187V331M623.500 336V480M665.500 187V331M665.500 336V480M707.500 187V331M707.500 336V480M749.500 187V331M749.500 336V480M791.500 187V331M791.500 336V480M833.500 187V331M833.500 336V480M875.500 187V331M875.500 336V480M917.500 187V331M917.500 336V480M959.500 187V331M959.500 336V480M1001.500 187V331M1001.500 336V480M35 222.500H1041M35 258.500H1041M35 295.500H1041M35 371.500H1041M35 407.500H1041M35 444.500H1041" stroke="#8a8a8a" stroke-width="1" fill="none" shape-rendering="crispEdges"/><path d="M35 200.5h2M35 214.5h2M35 229.5h2M35 243.5h2M35 258.5h2M35 273.5h2M35 287.5h2M35 302.5h2M35 316.5h2M35 349.5h2M35 363.5h2M35 378.5h2M35 392.5h2M35 407.5h2M35 422.5h2M35 436.5h2M35 451.5h2M35 465.5h2" stroke="#b8b8a0" stroke-width="1" fill="none" shape-rendering="crispEdges"/><path d="M35 222.500h4M35 295.500h4M35 371.500h4M35 444.500h4" stroke="#e0e0e0" stroke-width="1" fill="none" shape-rendering="crispEdges"/><path d="M35.5 257.5V259.5M36.5 257.1V259.6M37.5 257V259.9M38.5 257.1V260.2M39.5 256.9V260.4M40.5 256.7V260.3M41.5 255.8V261.8M42.5 255.6V261.1M43.5 254V263.4M44.5 253.5V262.1M45.5 250.7V262.1M46.5 251.3V262.4M47.5 253.8V262.3M48.5 253.4V264.4M49.5 253.5V263.5M50.5 252V263M51.5 252.3V262.6M52.5 253.4V262.9M53.5 251.4V263.4M54.5 252.8V264.1M55.5 252.2V263.3M56.5 250.2V265M57.5 252.5V264.6M58.5 251.3V266.5M59.5 249.8V264.1M60.5 247.5V263.9M61.5 251.4V266.3M62.5 252.3V264.9M63.5 252.5V265.8M64.5 249.8V265.3M65.5 249.2V264.3M66.5 250.5V265.4M67.5 251.3V264.8M68.5 249.9V267.6M69.5 252V265.8M70.5 253.1V266M71.5 251.3V268M72.5 250.3V264.2M73.5 252.5V265.8M74.5 253.2V264.8M75.5 253V263.9M76.5 253.1V266.4M77.5 253.1V264.1M78.5 252.4V267.1M79.5 253.1V264.8M80.5 251.8V267.2M81.5 250.3V267M82.5 252.8V264.6M83.5 252.6V267.2M84.5 249.3V264M85.5 253V264.1M86.5 253V264.8M87.5 251.9V263.9M88.5 253.5V264.2M89.5 253.1V264.6M90.5 250.4V265M91.5 252.9V264.5M92.5 252.4V263M93.5 250.6V265.6M94.5 250.2V266.3M95.5 252.3V264.7M96.5 252.6V266.2M97.5 252.3V264.7M98.5 251.8V265.1M99.5 251V265.3M100.5 251.4V265.8M101.5 251V266.7M102.5 250.7V270.7M103.5 247.8V266.5M104.5 249.5V267.4M105.5 248.7V266.9M106.5 244.1V273.5M107.5 247.3V268.9M108.5 248.6V267.5M109.5 247.4V268.4M110.5 242.5V268.4M111.5 247.9V275.8M112.5 245.1V269.2M113.5 244.7V269.3M114.5 244.5V278.2M115.5 240V274.7M116.5 246.4V271.5M117.5 247V275.7M118.5 244.8V275.8M119.5 246.6V270.6M120.5 242.1V279M121.5 242.5V275M122.5 243.9V273.1M123.5 249.2V270M124.5 249.3V267.1M125.5 250.8V266.9M126.5 250.9V268.4M127.5 247.7V265.8M128.5 249.4V268M129.5 250.8V263.5M130.5 254.8V262.2M131.5 255.7V261.3M132.5 256.1V261.4M133.5 249.5V265.6M134.5 251V269.7M135.5 254.5V268.5M136.5 247.7V270.6M137.5 249.2V267.2M138.5 253.7V271.9M139.5 252.7V272.7M140.5 245.5V267.5M141.5 251.9V275.9M142.5 248.7V265.4M143.5 253.7V265.3M144.5 246.4V273.4M145.5 253.6V273.7M146.5 245.3V271M147.5 252.3V269.4M148.5 253.7V264.7M149.5 245.5V270.8M150.5 250.8V275.7M151.5 251.8V274M152.5 248V265.2M153.5 253.4V265.5M154.5 253.6V268.3M155.5 253.7V266.1M156.5 254.4V271.7M157.5 253.4V265.8M158.5 251.9V270.4M159.5 253.8V268.8M160.5 254V263.8M161.5 254.7V260.9M162.5 255.7V260.5M163.5 256V265.4M164.5 255V264.9M165.5 250.1V267.5M166.5 252.5V269M167.5 250.3V273.5M168.5 253.5V270.2M169.5 252.5V267M170.5 246.7V270.1M171.5 249.1V274.8M172.5 243.8V269.8M173.5 247.9V271.1M174.5 248.9V274.8M175.5 249.4V272.2M176.5 249.7V278.7M177.5 247.7V275.4M178.5 245.2V265.5M179.5 250.7V272.6M180.5 248.6V263.1M181.5 254.7V263.9M182.5 254.6V263.2M183.5 254.4V267.2M184.5 248.8V270.8M185.5 253.8V269.2M186.5 249.4V264.3M187.5 246.3V274.1M188.5 252.9V274.1M189.5 251.3V267.6M190.5 243.4V272.6M191.5 252.7V267.3M192.5 249.4V266.4M193.5 252.2V266.4M194.5 246.1V264.6M195.5 248.1V268M196.5 252.9V266.3M197.5 248.2V267.8M198.5 253.3V273.9M199.5 247.1V272.8M200.5 253.7V264.2M201.5 254.2V268.5M202.5 253.5V262.8M203.5 252.5V269.1M204.5 248.9V263.2M205.5 254.3V268.9M206.5 251.6V266.5M207.5 254.6V262.3M208.5 250.7V264M209.5 254.8V268.5M210.5 251.5V267M211.5 254.7V267.7M212.5 254.6V268M213.5 252.5V263.6M214.5 251.5V269.2M215.5 253.5V262.8M216.5 251.4V263.4M217.5 254V263.1M218.5 254.1V263.4M219.5 252.7V264.1M220.5 248.3V264.1M221.5 250.3V264.4M222.5 251.1V264.7M223.5 251.4V265.6M224.5 244.6V272.5M225.5 250.8V272.6M226.5 238.5V268.7M227.5 240.4V274M228.5 246V285.2M229.5 247.3V277.2M230.5 241.8V292.9M231.5 247.4V288.9M232.5 240.6V283.5M233.5 246V276.6M234.5 250.4V271.5M235.5 250.9V283M236.5 250.2V269.4M237.5 252.1V280.3M238.5 243.8V274M239.5 252.1V266.2M240.5 252.8V266.8M241.5 253.8V266.1M242.5 253.5V271.6M243.5 247.4V265.9M244.5 254.2V269.5M245.5 254.1V263.3M246.5 255.4V262.9M247.5 252.6V265.2M248.5 253.7V266.8M249.5 253.8V265.9M250.5 253.1V268.6M251.5 252.7V266.4M252.5 250.4V269M253.5 246.7V274M254.5 243.8V277.2M255.5 244.1V283.4M256.5 248.8V271.4M257.5 238.3V269.3M258.5 243.3V278.6M259.5 251.3V284.3M260.5 239.4V279.1M261.5 243.9V281.3M262.5 252V272.5M263.5 249.5V276.1M264.5 247V273M265.5 250.8V271M266.5 251V265.9M267.5 253.9V262.5M268.5 254V264.6M269.5 253.8V270.6M270.5 250V268.8M271.5 248.6V270.4M272.5 249.7V264.7M273.5 245.6V272.7M274.5 249.5V269.6M275.5 247.6V265.2M276.5 246.5V266.6M277.5 253V266.8M278.5 246.6V266.4M279.5 246.5V278.8M280.5 249.6V268.6M281.5 248.6V274.3M282.5 242.5V274M283.5 243.2V267.3M284.5 249.3V269.6M285.5 237.8V270.9M286.5 240.4V268.6M287.5 247.5V271.6M288.5 238.6V278.9M289.5 240.7V269.7M290.5 245.7V271.1M291.5 248.2V266M292.5 244.1V265.6M293.5 243.7V274.5M294.5 253.8V266.8M295.5 247.8V272.5M296.5 252.2V264M297.5 254.2V269.7M298.5 254.6V265M299.5 255.2V263.8M300.5 250.8V261.3M301.5 252.3V262.7M302.5 252.3V263.4M303.5 255.9V264.3M304.5 255.2V260.5M305.5 256.7V261.5M306.5 255.9V260.6M307.5 256.9V260.5M308.5 256.7V261.8M309.5 257.3V261.2M310.5 255.7V259.7M311.5 255.7V260.6M312.5 256.3V259.5M313.5 257.4V259.7M314.5 256.1V260M315.5 257.4V259.7M316.5 257.5V259.5M317.5 257.5V260.5M318.5 257.5V260.7M319.5 257.5V259.5M320.5 257.2V259.5M321.5 257.4V260.8M322.5 256.4V260.4M323.5 256.9V260.7M324.5 256.2V259.9M325.5 256.8V259.5M326.5 256.7V259.7M327.5 256.7V260.1M328.5 257.5V259.5M329.5 256.3V259.5M330.5 257.2V259.6M331.5 257.5V260.3M332.5 256.2V259.5M333.5 256.9V259.5M334.5 257.1V259.7M335.5 257.5V259.5M336.5 257.5V260.7M337.5 257.2V259.5M338.5 256.3V260.9M339.5 257.3V259.5M340.5 257.5V259.5M341.5 256.3V260.7M342.5 255.6V262.8M343.5 252.7V271.2M344.5 251V266.1M345.5 253.4V267.9M346.5 253.5V266.4M347.5 254.8V266.3M348.5 247.6V265.5M349.5 252V271.9M350.5 248.2V266.9M351.5 253.4V267.3M352.5 252.4V269.9M353.5 246.4V277.4M354.5 247.2V266.1M355.5 254.1V274.9M356.5 246.5V270.8M357.5 250V266.3M358.5 251.8V280.2M359.5 246.8V278.8M360.5 244.5V268.2M361.5 253.8V266.3M362.5 251.7V271.3M363.5 248.4V269.9M364.5 252.1V268.3M365.5 254.1V264.4M366.5 256.1V264.1M367.5 255.6V265.1M368.5 253.7V261.6M369.5 255.9V261.4M370.5 253.8V263.6M371.5 256V261M372.5 254.4V262.9M373.5 254.3V262.4M374.5 252V262.8M375.5 253.3V266.7M376.5 246.9V268.9M377.5 247.8V266.9M378.5 253.6V264.9M379.5 246.7V269.9M380.5 253.1V263.9M381.5 251.6V269.6M382.5 252.2V265.1M383.5 249.9V273.5M384.5 253.5V264M385.5 252.7V266.7M386.5 249.5V264.8M387.5 248.2V270.8M388.5 251.2V264.9M389.5 245.8V265.8M390.5 247.7V265.2M391.5 253.6V270.5M392.5 253.4V272.5M393.5 252.4V263.7M394.5 254.4V264.8M395.5 251.8V269.5M396.5 255.2V263.6M397.5 255.2V267.8M398.5 255.6V261.6M399.5 255.9V262.6M400.5 252.2V265.5M401.5 253.6V265.9M402.5 252.7V261.6M403.5 256.3V264.4M404.5 254.5V260.4M405.5 255.2V261M406.5 256.4V260.6M407.5 257V259.9M408.5 257V260.2M409.5 255.1V259.8M410.5 255V259.9M411.5 256.8V261.5M412.5 255.5V260.3M413.5 257.3V260.4M414.5 256.8V261.8M415.5 255.8V262.2M416.5 248.8V262.7M417.5 251.4V272.1M418.5 247.3V264.3M419.5 253.6V264.4M420.5 244.9V265.7M421.5 247.2V274.6M422.5 251.7V266.1M423.5 243.9V270.4M424.5 252.1V272.2M425.5 251.6V266.5M426.5 253.2V273.3M427.5 243.9V271.5M428.5 243.3V265.3M429.5 252V269.5M430.5 242.8V278.4M431.5 250.5V267.1M432.5 250V270.4M433.5 242.4V267M434.5 244.1V275.9M435.5 243.2V277.3M436.5 246.3V269.7M437.5 249.8V270.6M438.5 242.5V267.8M439.5 250.5V279.6M440.5 249.8V268.3M441.5 251.1V275.8M442.5 248.5V287.6M443.5 238.2V288.3M444.5 248.8V269.1M445.5 250.1V275.7M446.5 240.9V274.9M447.5 248.5V274.5M448.5 242.1V281M449.5 239V286.5M450.5 240.5V270.5M451.5 237.7V271.8M452.5 244.5V272.1M453.5 242.4V268.6M454.5 250.4V268.2M455.5 251.8V277.5M456.5 248.2V267M457.5 251.1V275.7M458.5 250.8V264.6M459.5 248.7V267.6M460.5 248V262.6M461.5 253.6V266.5M462.5 252.2V265.7M463.5 256.5V261.1M464.5 256.5V260.6M465.5 253.4V261.7M466.5 254V260.8M467.5 254.7V260.8M468.5 256.9V261.6M469.5 255.1V259.8M470.5 250.6V268.2M471.5 250V270.9M472.5 250.5V268.9M473.5 249.2V275.9M474.5 243V269.4M475.5 250.6V271.4M476.5 241.7V269.7M477.5 247.7V270.2M478.5 238.3V276.8M479.5 249.7V269.6M480.5 245.7V277.6M481.5 240.9V269.9M482.5 248.5V281.9M483.5 244.9V272.6M484.5 246.4V290.7M485.5 246.2V279.1M486.5 245.3V275.7M487.5 233.6V293.3M488.5 244.9V272M489.5 236.7V272.2M490.5 248.5V290.8M491.5 243.9V286.9M492.5 244.7V287.8M493.5 244.2V270.3M494.5 249.7V276.6M495.5 241.8V285.1M496.5 250V276.6M497.5 247.5V273.3M498.5 250.3V269.2M499.5 246.2V280.6M500.5 251.9V269.7M501.5 246V274.7M502.5 253.7V263.2M503.5 249.5V267.9M504.5 252.3V262.4M505.5 246.3V264.8M506.5 245V268.2M507.5 244.7V264.7M508.5 245V265.3M509.5 250V273.7M510.5 243.9V265.5M511.5 251.5V267.9M512.5 248.1V267.9M513.5 251.9V266.8M514.5 244.7V277.3M515.5 252V271.4M516.5 243.7V265.9M517.5 242V266.3M518.5 246V271.7M519.5 245.4V268.3M520.5 248.3V272.5M521.5 248.1V274.1M522.5 247.7V270.4M523.5 251.4V273.6M524.5 246.8V268M525.5 241.9V277.3M526.5 247.5V267.2M527.5 247.7V266.3M528.5 251.5V269.2M529.5 252V268.9M530.5 248.4V265M531.5 247.1V264.8M532.5 246.3V272M533.5 249.6V264M534.5 250.1V265.8M535.5 244.8V263.7M536.5 246.5V272.5M537.5 248.4V269.7M538.5 253.4V271.6M539.5 251.4V270.9M540.5 246.9V263.2M541.5 248.8V269.9M542.5 254.4V264M543.5 247.9V264.3M544.5 244.4V266.7M545.5 244V267M546.5 247.6V283.6M547.5 250.1V271.4M548.5 246.1V272.5M549.5 250.8V270.7M550.5 249.9V289.3M551.5 241.9V288.5M552.5 249.3V285.4M553.5 249.6V278.5M554.5 241.6V274.9M555.5 235.5V279.9M556.5 241.8V290.8M557.5 248.6V295.6M558.5 239.6V276.9M559.5 234.7V274.5M560.5 228.1V282.6M561.5 243.9V289.3M562.5 241.8V273.8M563.5 234.2V272.5M564.5 231.8V275.5M565.5 236.9V300M566.5 238.2V287.5M567.5 244.1V272.9M568.5 247.4V274.4M569.5 237.2V280.9M570.5 239.7V298.3M571.5 246.5V276.4M572.5 236V273.8M573.5 247.7V278.6M574.5 247.5V277.8M575.5 246.7V282.9M576.5 240.7V273.1M577.5 240.6V277.7M578.5 249V290.2M579.5 248.3V270.2M580.5 250.1V278.2M581.5 240.2V278.8M582.5 249.6V267.5M583.5 253.4V270.3M584.5 251V264.8M585.5 252.1V263.4M586.5 250.7V264.7M587.5 255.6V265M588.5 256.5V262M589.5 256.1V260.4M590.5 257.3V261.3M591.5 240.8V291.6M592.5 218.3V281.4M593.5 237.1V294.2M594.5 229.5V295.7M595.5 220.4V282.9M596.5 233.7V286.4M597.5 238.7V305.5M598.5 219.8V299.9M599.5 238.7V304.9M600.5 219.9V292.6M601.5 219.6V292.5M602.5 233.9V283.3M603.5 233.5V282.2M604.5 230.6V303.9M605.5 219.6V307.9M606.5 218.7V288.5M607.5 223.4V294.1M608.5 215.4V297.4M609.5 231.2V302.1M610.5 208.3V288.2M611.5 211V283.7M612.5 230.6V289.4M613.5 215.6V315.4M614.5 215.7V292.1M615.5 211.2V292M616.5 231.6V313.5M617.5 220.1V304.8M618.5 219.2V316.3M619.5 225.5V310.4M620.5 218.5V311.1M621.5 226.8V305.7M622.5 222.9V291M623.5 233.1V301.7M624.5 236.2V312.8M625.5 236.5V281.3M626.5 238.8V303.5M627.5 235.8V278.6M628.5 243V274.6M629.5 231.2V284.5M630.5 232V285M631.5 244.1V280.3M632.5 240.2V282.8M633.5 232.3V282.1M634.5 245.7V279.7M635.5 232.6V278.7M636.5 246.2V268.8M637.5 246.5V267.1M638.5 236.1V275.1M639.5 240.3V274.7M640.5 240.9V268.2M641.5 248.1V266.3M642.5 240.4V266.8M643.5 246.7V268.3M644.5 249.8V266.5M645.5 248V270.2M646.5 245.8V268M647.5 235.4V271.4M648.5 235.3V274.5M649.5 246.3V273.3M650.5 239.4V280.7M651.5 239V282M652.5 233V275.2M653.5 222.2V274.8M654.5 220.4V277.6M655.5 238.5V279.7M656.5 218.6V300.6M657.5 237.7V287.2M658.5 225.6V296.2M659.5 233.4V288.1M660.5 228.7V298.3M661.5 230.6V302.4M662.5 229.4V282.1M663.5 215.5V289.7M664.5 233V294.2M665.5 232.1V303.4M666.5 209.4V307.9M667.5 209.6V295.4M668.5 216.5V300M669.5 194.3V290M670.5 193.7V289M671.5 222.6V296.9M672.5 191.8V307.2M673.5 215.3V326.4M674.5 220.5V306.9M675.5 207.9V321.7M676.5 196.8V317.1M677.5 214.9V303M678.5 221.9V329.2M679.5 199.7V324.7M680.5 220.8V310.1M681.5 195V316.1M682.5 224V309.5M683.5 192.6V299M684.5 223.6V300.9M685.5 204.4V325.4M686.5 226.6V294.1M687.5 225.1V298.2M688.5 217.2V290.4M689.5 225.6V289.3M690.5 204.3V305.6M691.5 233.3V314.1M692.5 233.4V292.3M693.5 204.8V306.1M694.5 214.4V293M695.5 231.6V299.2M696.5 233.8V285.4M697.5 226.5V281.3M698.5 226.3V302.6M699.5 216.9V292.5M700.5 219.2V290.8M701.5 234.9V292.6M702.5 229.8V294M703.5 217.3V283.4M704.5 229V288.5M705.5 234.5V275.5M706.5 229.5V286.5M707.5 230.6V281M708.5 231.3V278.8M709.5 237.7V273.7M710.5 235.3V288M711.5 233.3V292.8M712.5 210.7V304.8M713.5 215.4V290.2M714.5 221.9V298.5M715.5 213.9V298.2M716.5 210.9V322.2M717.5 227.6V311.5M718.5 204.6V301.7M719.5 215.5V329.5M720.5 229.7V311.5M721.5 226V323.7M722.5 193.4V311M723.5 226.9V313.9M724.5 210.1V321.4M725.5 210.7V317.8M726.5 195.4V312.3M727.5 215.8V329.5M728.5 224.4V317M729.5 219.3V319M730.5 229.3V328M731.5 223.4V288.6M732.5 227.2V298.6M733.5 233.5V299.6M734.5 222V311.4M735.5 224V294.5M736.5 227.7V314M737.5 200.9V305.1M738.5 227.4V317.5M739.5 223.9V289.7M740.5 233.2V304.1M741.5 214.9V293.6M742.5 228.1V286.4M743.5 234.2V296.8M744.5 230.9V287.9M745.5 216.9V292.3M746.5 227.4V279.7M747.5 224.9V276.4M748.5 215.6V280.6M749.5 214.8V278.7M750.5 229.3V278.3M751.5 227.7V276.9M752.5 237.3V288.3M753.5 232.6V277.2M754.5 233.3V280.9M755.5 231.4V283.3M756.5 226.8V277.1M757.5 221.2V285.7M758.5 242V284M759.5 225.7V282M760.5 242.8V281.7M761.5 236.2V268.9M762.5 247.2V279.9M763.5 240.8V269.1M764.5 249.4V267M765.5 249.9V271.8M766.5 237.8V275M767.5 207.1V303.5M768.5 229.7V309.6M769.5 212.3V307.6M770.5 206.9V314.6M771.5 198.3V314.6M772.5 221.2V310.5M773.5 208.4V312.6M774.5 213.3V318.9M775.5 209.2V293.7M776.5 222.7V289.8M777.5 213.7V287.7M778.5 215.6V289.9M779.5 215.6V302.4M780.5 214.6V318M781.5 231.3V318.2M782.5 217V306.9M783.5 209V320.5M784.5 220.1V302.6M785.5 195.5V291M786.5 209.5V314M787.5 230.2V313.7M788.5 207.2V329.5M789.5 220.9V329.5M790.5 213.9V310.5M791.5 197.8V292.6M792.5 206.3V316.4M793.5 221.7V328.1M794.5 221.1V308.3M795.5 215.7V322.2M796.5 227V305.7M797.5 220.4V310.6M798.5 205.2V299.1M799.5 209.4V297.9M800.5 224.3V288.3M801.5 227.5V303.8M802.5 226.9V290M803.5 236.4V278.1M804.5 238.5V282M805.5 233.3V284.4M806.5 245V281.4M807.5 232.4V276.7M808.5 247.1V271.8M809.5 248.6V269.4M810.5 239V273M811.5 238.7V281M812.5 229.5V282.8M813.5 231.7V288M814.5 225.8V292M815.5 222.7V283.7M816.5 225.8V290.8M817.5 221V288.2M818.5 228.1V289.5M819.5 214.7V307.9M820.5 216.4V296.5M821.5 211.3V307.3M822.5 216.6V296.8M823.5 220.8V300.9M824.5 219.6V302.2M825.5 211.7V317.4M826.5 221.5V307.9M827.5 221.5V299.4M828.5 205.6V309.2M829.5 202.1V306.5M830.5 221.1V305.6M831.5 211V322.5M832.5 199.4V308.8M833.5 214.8V301.9M834.5 209V304M835.5 219.1V302.1M836.5 220.9V316M837.5 220.5V325.3M838.5 221.4V321.3M839.5 221.5V300.7M840.5 210.2V303.3M841.5 210.5V302M842.5 223.8V316.1M843.5 212.4V318.3M844.5 225V293M845.5 218V309M846.5 213.4V320.9M847.5 217.1V322.5M848.5 205.8V299.9M849.5 219.2V313.1M850.5 201.7V301.1M851.5 214.5V316.3M852.5 216.5V321.1M853.5 209.7V301.8M854.5 212V312.8M855.5 209.9V316.3M856.5 215.5V320.4M857.5 211.2V315.6M858.5 204V309.4M859.5 210.2V320.6M860.5 193V320.8M861.5 205.1V307M862.5 215.2V328.1M863.5 200.4V322.9M864.5 210.3V315.7M865.5 190.2V323.4M866.5 202.8V307.9M867.5 207.3V325.5M868.5 208.4V318.3M869.5 202V325.8M870.5 194.9V307.4M871.5 213.8V306.9M872.5 206.3V315.2M873.5 193.8V325.5M874.5 212.9V323.5M875.5 193.3V324.7M876.5 202.9V306M877.5 195.5V319.4M878.5 202.7V321.5M879.5 212.9V299.6M880.5 209.5V314.5M881.5 217V313.4M882.5 198.2V301.1M883.5 208.1V312M884.5 211.7V301.3M885.5 216.1V314.9M886.5 202.7V307.1M887.5 218.5V317.5M888.5 203.3V302.9M889.5 208.8V321.3M890.5 199.7V310M891.5 210.8V312.2M892.5 216V303.3M893.5 215.6V316.3M894.5 211.5V312.5M895.5 210V311.5M896.5 215.6V301.7M897.5 193.8V306.6M898.5 217.6V312.6M899.5 202.9V301.2M900.5 209.2V303.9M901.5 212V298.6M902.5 221V320.8M903.5 201.9V306.4M904.5 209.1V302M905.5 201.7V306M906.5 194.6V316.1M907.5 197.5V323.4M908.5 211.7V300.8M909.5 214.1V301.6M910.5 217.1V299.1M911.5 209.4V316.8M912.5 213.5V317.9M913.5 203V296.5M914.5 213.5V300.6M915.5 222.5V315.5M916.5 220.8V304.4M917.5 213.1V315.4M918.5 212.6V300.5M919.5 217.9V296.6M920.5 205V316.6M921.5 222.2V295.4M922.5 221.9V299.7M923.5 207.3V313.4M924.5 209.2V294.9M925.5 210.6V307M926.5 214.1V314.6M927.5 224.2V295M928.5 249.1V266.9M929.5 252.9V261.1M930.5 255.1V262.4M931.5 257.5V259.8M932.5 257.5V259.5M933.5 257.3V259.5M934.5 257.5V259.5M935.5 257.5V259.5M936.5 257.5V259.5M937.5 255.4V268.2M938.5 254.9V268.3M939.5 248.8V267.7M940.5 254.9V263.1M941.5 254.8V268.2M942.5 248V264.6M943.5 254.9V261.1M944.5 255.7V260.1M945.5 256.5V259.6M946.5 257.4V259.5M947.5 256.2V260.3M948.5 257.4V261.5M949.5 257.3V260M950.5 257.4V259.7M951.5 255.7V259.8M952.5 257.4V260.1M953.5 257.2V261.6M954.5 257.4V262M955.5 257.5V261.6M956.5 246.9V264.6M957.5 249.2V265.3M958.5 251.1V265M959.5 249.4V279.8M960.5 243.5V270.9M961.5 256.8V260.6M962.5 253.3V260.2M963.5 254.5V260.6M964.5 252.7V260.2M965.5 254V260.7M966.5 256.7V260.2M967.5 253.8V261.4M968.5 256.7V261M969.5 253.2V260.4M970.5 255.4V260.3M971.5 256.7V262.8M972.5 254.6V260.4M973.5 252.3V266.1M974.5 246.1V271.2M975.5 250.6V267.5M976.5 245V277.8M977.5 239.3V274.9M978.5 250.2V267.8M979.5 245.1V268.2M980.5 249.6V263M981.5 253.1V261.1M982.5 252.8V264.4M983.5 255.2V260.5M984.5 252.2V261.7M985.5 238.6V267.3M986.5 250.5V280.6M987.5 247.9V267.6M988.5 247.1V275.8M989.5 249.5V274.8M990.5 244.2V275.6M991.5 251V276.7M992.5 245.1V274.9M993.5 255.1V266.2M994.5 252.9V270.9M995.5 253V278.4M996.5 236V272.3M997.5 245.2V275.2M998.5 242.6V269.6M999.5 223.6V272.4M1000.5 246V272.5M1001.5 244.5V297.4M1002.5 245.8V274.2M1003.5 229V276.3M1004.5 244.8V291.2M1005.5 232.2V289M1006.5 227.9V276.2M1007.5 220.9V296.5M1008.5 246.2V274.9M1009.5 239.8V283.1M1010.5 245.5V273.3M1011.5 245.3V271.3M1012.5 243.8V287.8M1013.5 251.9V273.4M1014.5 247V265M1015.5 247.4V274.9M1016.5 253.8V264.4M1017.5 250.9V263.7M1018.5 255.7V265.1M1019.5 254.2V260.7M1020.5 256.9V260.2M1021.5 257V262M1022.5 256.7V260.6M1023.5 256.7V260.4M1024.5 257.5V259.6M1025.5 256.4V260.5M1026.5 257.5V259.5M1027.5 257.3V259.5M1028.5 257.5V259.5M1029.5 257.5V259.5M1030.5 257.5V259.5M1031.5 256.7V259.8M1032.5 256.9V259.5M1033.5 257.2V259.9M1034.5 257.1V259.5M1035.5 257.5V259.5M1036.5 257.5V259.5M1037.5 257.5V259.8M1038.5 257.5V259.5M1039.5 257.5V259.5M1040.5 257.3V259.5" stroke="#10ff10" stroke-width="1" fill="none" shape-rendering="crispEdges"/><path d="M35.5 257.5V259.5M36.5 257.5V259.5M37.5 257.5V259.5M38.5 257.4V259.6M39.5 257.3V259.7M40.5 257.1V259.9M41.5 256.7V260.1M42.5 256.3V260.4M43.5 255.9V260.7M44.5 255.5V260.9M45.5 255.1V261.2M46.5 255.1V261.3M47.5 255V261.3M48.5 254.9V261.4M49.5 254.9V261.5M50.5 254.8V261.5M51.5 254.7V261.6M52.5 254.7V261.7M53.5 254.6V261.7M54.5 254.5V261.8M55.5 254.4V261.9M56.5 254.3V262M57.5 254.2V262.1M58.5 254V262.3M59.5 253.9V262.4M60.5 253.8V262.6M61.5 253.8V262.6M62.5 253.9V262.6M63.5 254V262.6M64.5 254V262.6M65.5 254.1V262.6M66.5 254.2V262.6M67.5 254.2V262.6M68.5 254.3V262.6M69.5 254.4V262.6M70.5 254.4V262.6M71.5 254.4V262.6M72.5 254.4V262.6M73.5 254.4V262.6M74.5 254.4V262.6M75.5 254.4V262.6M76.5 254.4V262.6M77.5 254.4V262.6M78.5 254.4V262.6M79.5 254.4V262.6M80.5 254.4V262.6M81.5 254.4V262.6M82.5 254.4V262.6M83.5 254.4V262.6M84.5 254.4V262.6M85.5 254.4V262.6M86.5 254.5V262.5M87.5 254.6V262.4M88.5 254.7V262.3M89.5 254.8V262.2M90.5 254.9V262.1M91.5 255V262M92.5 255.1V261.9M93.5 254.9V262.1M94.5 254.6V262.4M95.5 254.4V262.6M96.5 254.1V262.9M97.5 253.9V263.1M98.5 253.6V263.4M99.5 253.4V263.6M100.5 253.1V263.9M101.5 252.8V264.1M102.5 252.6V264.2M103.5 252.3V264.4M104.5 252.1V264.6M105.5 251.8V264.7M106.5 251.6V264.9M107.5 251.3V265.1M108.5 251.1V265.2M109.5 250.9V265.5M110.5 250.7V265.8M111.5 250.5V266.1M112.5 250.3V266.4M113.5 250.1V266.7M114.5 249.9V267M115.5 249.7V267.3M116.5 249.9V267.3M117.5 250V267.3M118.5 250.1V267.3M119.5 250.3V267.3M120.5 250.4V267.3M121.5 250.8V266.7M122.5 251.3V266.1M123.5 251.8V265.6M124.5 252.2V265M125.5 252.7V264.5M126.5 253.1V263.9M127.5 253.8V263.2M128.5 254.4V262.6M129.5 255.1V261.9M130.5 255.8V261.2M131.5 256.5V260.5M132.5 257.1V259.9M133.5 254V264M134.5 253.9V264.3M135.5 254.5V264.6M136.5 253.5V264.9M137.5 253.4V265.3M138.5 253.7V265.6M139.5 253.1V265.9M140.5 252.9V266.2M141.5 252.9V266.2M142.5 252.9V265.4M143.5 253.7V265.3M144.5 252.9V266.2M145.5 253.6V266.2M146.5 252.9V266.2M147.5 252.9V266.2M148.5 253.7V264.7M149.5 252.9V266.2M150.5 252.9V266.2M151.5 253V265.9M152.5 253.2V265.2M153.5 253.4V265.4M154.5 253.6V265.1M155.5 253.7V264.8M156.5 254.4V264.6M157.5 253.9V264.3M158.5 254V264M159.5 254.6V263.2M160.5 255.1V262.4M161.5 255.7V260.9M162.5 256.3V260.5M163.5 256V262.1M164.5 255V263.4M165.5 253.7V264.8M166.5 252.9V266.2M167.5 252.7V266.4M168.5 253.5V266.7M169.5 252.5V266.9M170.5 252.2V267.2M171.5 252V267.4M172.5 251.8V267.7M173.5 251.6V267.9M174.5 251.4V268.2M175.5 251.2V268.4M176.5 251.7V267.5M177.5 252.2V266.6M178.5 252.6V265.5M179.5 253.1V264.7M180.5 253.6V263.1M181.5 254.7V262.9M182.5 254.6V263.2M183.5 254.4V263.8M184.5 253.3V264.2M185.5 253.8V264.7M186.5 252.9V264.3M187.5 252.7V265.2M188.5 252.9V265.3M189.5 252.3V265.5M190.5 252.2V265.6M191.5 252.7V265.7M192.5 251.8V265.8M193.5 252.2V266M194.5 251.4V264.6M195.5 251.2V266.2M196.5 252.9V265.8M197.5 251.9V265.4M198.5 253.3V265M199.5 252.5V264.6M200.5 253.7V264.2M201.5 254.2V263.8M202.5 253.5V262.8M203.5 253.5V263.4M204.5 253.6V263.2M205.5 254.3V263.2M206.5 253.7V263.2M207.5 254.6V262.3M208.5 253.9V263M209.5 254.8V263M210.5 254V262.9M211.5 254.7V263M212.5 254.6V263.1M213.5 253.7V263.2M214.5 253.6V263.3M215.5 253.5V262.8M216.5 253.3V263.4M217.5 254V263.1M218.5 254.1V263.4M219.5 253V263.9M220.5 252.9V264M221.5 252.3V264.4M222.5 251.8V264.7M223.5 251.4V265.6M224.5 250.7V268.4M225.5 250.8V269.5M226.5 249.5V268.7M227.5 249.3V271.2M228.5 249.1V271.9M229.5 248.8V272.5M230.5 248.6V273.1M231.5 248.3V273.7M232.5 248.1V274.4M233.5 247.9V275M234.5 250.4V271.5M235.5 250.9V272.2M236.5 250.2V269.4M237.5 252.1V269.3M238.5 251.5V267.9M239.5 252.2V266.2M240.5 252.9V265.1M241.5 253.8V264.6M242.5 253.5V264.2M243.5 253.7V263.7M244.5 254.2V263.3M245.5 254.3V262.8M246.5 255.4V262.4M247.5 253.9V263.5M248.5 253.7V264.7M249.5 253.8V265.9M250.5 253.1V267.1M251.5 252.7V266.4M252.5 250.7V269M253.5 250.5V269.8M254.5 250.4V270.1M255.5 250.2V270.3M256.5 250.1V270.6M257.5 250V269.3M258.5 249.8V271.1M259.5 251.3V271.4M260.5 249.5V271.7M261.5 250.3V270.2M262.5 252V268.8M263.5 251.8V267.3M264.5 252.5V265.8M265.5 253.3V264.4M266.5 254V262.9M267.5 253.9V262.5M268.5 254V264M269.5 253.8V264.6M270.5 252.5V265.1M271.5 252.2V265.6M272.5 251.8V264.7M273.5 251.8V266.3M274.5 251.8V266.5M275.5 251.8V265.2M276.5 251.8V266.6M277.5 253V266.8M278.5 251.8V266.4M279.5 251.8V267.2M280.5 251.8V267.3M281.5 250.8V267.9M282.5 249.9V268.6M283.5 248.9V267.3M284.5 249.3V269.6M285.5 247V270.4M286.5 246V268.6M287.5 247.5V271.6M288.5 246.4V270.6M289.5 247.7V269.5M290.5 249.1V268.4M291.5 250.4V266M292.5 251.8V265.6M293.5 252.2V265.6M294.5 253.8V265.1M295.5 253V264.6M296.5 253.5V264M297.5 254.2V263.4M298.5 254.6V262.9M299.5 255.2V262.4M300.5 255.1V261.3M301.5 255.3V261.6M302.5 255.6V261.4M303.5 255.9V261.2M304.5 256V260.5M305.5 256.7V260.8M306.5 256.4V260.6M307.5 256.9V260.4M308.5 256.8V260.1M309.5 257.3V260M310.5 257.1V259.7M311.5 257.2V259.7M312.5 257.5V259.5M313.5 257.5V259.5M314.5 257.5V259.5M315.5 257.5V259.5M316.5 257.5V259.5M317.5 257.5V259.5M318.5 257.5V259.5M319.5 257.5V259.5M320.5 257.5V259.5M321.5 257.5V259.5M322.5 257.5V259.5M323.5 257.5V259.5M324.5 257.5V259.5M325.5 257.5V259.5M326.5 257.5V259.5M327.5 257.5V259.5M328.5 257.5V259.5M329.5 257.5V259.5M330.5 257.5V259.5M331.5 257.5V259.5M332.5 257.5V259.5M333.5 257.5V259.5M334.5 257.5V259.5M335.5 257.5V259.5M336.5 257.5V259.5M337.5 257.5V259.5M338.5 257.5V259.5M339.5 257.5V259.5M340.5 257.5V259.5M341.5 256.5V260.7M342.5 255.6V262.8M343.5 254.5V264.5M344.5 254.4V264.9M345.5 254.2V265.4M346.5 254.1V265.8M347.5 254.8V266.2M348.5 253.8V265.5M349.5 253.6V267.1M350.5 253.5V266.9M351.5 253.4V267.3M352.5 253.3V267.7M353.5 253.2V267.8M354.5 253.1V266.1M355.5 254.1V268M356.5 252.9V268.1M357.5 252.8V266.3M358.5 252.7V268.3M359.5 252.6V268.4M360.5 252.5V268.2M361.5 253.8V266.3M362.5 253.5V266.2M363.5 254V265M364.5 254.5V263.8M365.5 255V262.7M366.5 256.1V261.5M367.5 255.6V261.5M368.5 255.5V261.5M369.5 255.9V261.4M370.5 255.5V261.5M371.5 256V261M372.5 255.5V261.5M373.5 254.8V262.4M374.5 254.2V262.8M375.5 253.5V265M376.5 253.5V265M377.5 253.4V265.1M378.5 253.6V264.9M379.5 253.4V265.1M380.5 253.3V263.9M381.5 253.3V265.2M382.5 253.3V265.1M383.5 253.2V265.3M384.5 253.5V264M385.5 253.2V265.3M386.5 253.1V264.8M387.5 253.1V265.4M388.5 253.1V264.9M389.5 253V265.5M390.5 253V265.2M391.5 253.6V265.1M392.5 253.6V264.6M393.5 253.9V263.7M394.5 254.4V263.8M395.5 254.4V263.4M396.5 255.2V262.9M397.5 255.2V262.5M398.5 255.6V261.6M399.5 255.9V262M400.5 255.5V261.8M401.5 255.7V261.6M402.5 255.9V261.4M403.5 256.3V261.1M404.5 256.3V260.4M405.5 256.5V260.7M406.5 256.6V260.5M407.5 257V259.9M408.5 257V260M409.5 257V259.8M410.5 257V259.9M411.5 257V260M412.5 257V260M413.5 257.3V260M414.5 257V260M415.5 255.8V261.8M416.5 254V262.7M417.5 252.5V265.5M418.5 252.4V264.3M419.5 253.6V264.4M420.5 252.3V265.7M421.5 252.2V266M422.5 252.2V266.1M423.5 252.1V266.2M424.5 252.1V266.4M425.5 252V266.5M426.5 253.2V266.6M427.5 251.9V266.8M428.5 251.8V265.3M429.5 252V267.1M430.5 251.6V267.2M431.5 251.6V267.1M432.5 251.5V267.5M433.5 251.2V267M434.5 251V268.2M435.5 250.8V268.6M436.5 250.5V269M437.5 250.2V269.4M438.5 250V267.8M439.5 250.5V270.1M440.5 249.8V268.3M441.5 251.1V270.7M442.5 249.1V270.9M443.5 248.9V271.1M444.5 248.8V269.1M445.5 250.1V271.5M446.5 248.3V271.7M447.5 248.5V271.9M448.5 247.9V272.1M449.5 247.7V272.3M450.5 247.5V270.5M451.5 248.2V271.5M452.5 248.8V270.5M453.5 249.5V268.6M454.5 250.4V268.2M455.5 251.8V267.5M456.5 251.5V266.5M457.5 252.1V265.7M458.5 252.8V264.6M459.5 253.4V264.1M460.5 254.1V262.6M461.5 254.7V262.6M462.5 255.4V261.8M463.5 256.5V261M464.5 256.5V260.6M465.5 256.3V260.7M466.5 256.5V260.5M467.5 256.7V260.3M468.5 256.9V260.2M469.5 257V259.8M470.5 253.2V264.8M471.5 250V269.5M472.5 250.5V268.9M473.5 249.2V270.1M474.5 248.8V269.4M475.5 250.6V270.6M476.5 248.4V269.7M477.5 248.2V270.2M478.5 247.9V271.4M479.5 249.7V269.6M480.5 247.5V272M481.5 247.3V269.9M482.5 248.5V272.3M483.5 247.1V272.4M484.5 246.9V272.6M485.5 246.8V272.8M486.5 246.6V272.9M487.5 246.4V273.1M488.5 246.3V272M489.5 246.2V272.2M490.5 248.5V273.5M491.5 246.4V272.9M492.5 246.8V272.4M493.5 247.2V270.3M494.5 249.7V271.3M495.5 247.9V270.7M496.5 250V270.2M497.5 248.7V269.6M498.5 250.3V269.1M499.5 249.5V268.5M500.5 251.9V267M501.5 252V265.5M502.5 253.7V263.2M503.5 254.5V262.5M504.5 253.8V262.4M505.5 253V264M506.5 252.2V264.8M507.5 251.5V264.7M508.5 251.4V265.3M509.5 251.2V266M510.5 251.1V265.5M511.5 251.5V266.5M512.5 250.9V266.8M513.5 251.9V266.8M514.5 250.6V267.2M515.5 252V267.5M516.5 250.4V265.9M517.5 250.3V266.3M518.5 250.2V267.8M519.5 250.1V267.9M520.5 250V268M521.5 249.9V268.1M522.5 249.8V268.2M523.5 251.4V268.3M524.5 249.6V268M525.5 249.5V268.5M526.5 249.8V267.2M527.5 250.1V266.3M528.5 251.5V267.3M529.5 252V266.9M530.5 251V265M531.5 251.3V264.8M532.5 251.6V265.7M533.5 251.9V264M534.5 252.2V264.9M535.5 252.5V263.7M536.5 252.6V264.4M537.5 252.8V264.2M538.5 253.4V264.1M539.5 253.1V263.9M540.5 253.2V263.2M541.5 253.4V263.6M542.5 254.4V263.5M543.5 252.7V264.3M544.5 251.9V266.7M545.5 251.1V267M546.5 250.3V269.9M547.5 250.1V271.4M548.5 249.2V271.8M549.5 250.8V270.7M550.5 249.9V272.2M551.5 248.5V272.5M552.5 249.3V272.8M553.5 249.6V273M554.5 247.8V273.2M555.5 247.5V273.5M556.5 247.1V273.8M557.5 248.6V274.1M558.5 246.4V274.4M559.5 246.1V274.5M560.5 245.7V274.9M561.5 245.4V275.2M562.5 245V273.8M563.5 244.9V272.5M564.5 244.9V275.5M565.5 244.8V276.1M566.5 244.8V276.3M567.5 244.8V272.9M568.5 247.4V274.4M569.5 244.7V276.9M570.5 244.6V277.1M571.5 246.5V276.4M572.5 244.5V273.8M573.5 247.7V276.7M574.5 247.5V275.9M575.5 246.7V275.1M576.5 246.5V273.1M577.5 247V273.4M578.5 249V272.6M579.5 248.3V270.2M580.5 250.1V271M581.5 249.7V269.3M582.5 250.9V267.5M583.5 253.4V265.9M584.5 253.3V264.2M585.5 254.5V262.5M586.5 255V262M587.5 255.6V261.5M588.5 256.5V261M589.5 256.5V260.4M590.5 257.3V260M591.5 241.6V277.9M592.5 241.3V278.2M593.5 241V278.4M594.5 240.8V278.7M595.5 240.5V278.9M596.5 240.3V279.1M597.5 240V279.4M598.5 239.8V279.6M599.5 239.5V279.9M600.5 239.3V280.1M601.5 239.1V280.3M602.5 238.9V280.6M603.5 238.7V280.8M604.5 238.5V281M605.5 238.3V281.2M606.5 238.2V281.4M607.5 238V281.7M608.5 237.8V281.9M609.5 237.6V282.1M610.5 237.4V282.4M611.5 237.2V282.6M612.5 237V282.8M613.5 237.1V282.8M614.5 237.2V282.7M615.5 237.3V282.7M616.5 237.4V282.6M617.5 237.5V282.6M618.5 237.6V282.5M619.5 237.7V282.5M620.5 237.8V282.4M621.5 237.9V282.4M622.5 238V282.4M623.5 238.1V282.3M624.5 238.2V282.3M625.5 239.6V280.1M626.5 241V277.9M627.5 242.4V275.8M628.5 243.8V273.6M629.5 244.3V272.7M630.5 244.8V271.8M631.5 245.3V270.8M632.5 245.7V269.9M633.5 246.2V269M634.5 246.7V268.1M635.5 247.2V267.1M636.5 247.5V266.9M637.5 247.9V266.6M638.5 248.2V266.3M639.5 248.6V266.1M640.5 248.9V265.8M641.5 249.2V265.5M642.5 249.6V265.2M643.5 249.9V265M644.5 250.3V264.7M645.5 250.6V264.4M646.5 249.7V265.4M647.5 248.8V266.4M648.5 247.9V267.4M649.5 247V268.3M650.5 246.1V269.3M651.5 244.7V270.6M652.5 243.4V271.9M653.5 242V273.2M654.5 240.6V274.5M655.5 239.3V275.8M656.5 238.9V276M657.5 238.5V276.3M658.5 238.2V276.5M659.5 237.8V276.7M660.5 237.4V277M661.5 237V277.2M662.5 236.7V277.5M663.5 236.3V277.7M664.5 235.9V277.9M665.5 234.5V280.1M666.5 233.1V282.3M667.5 231.7V284.4M668.5 230.2V286.6M669.5 230V287M670.5 229.7V287.5M671.5 229.4V287.9M672.5 229.1V288.4M673.5 228.8V288.8M674.5 228.6V289.3M675.5 228.3V289.7M676.5 228V290.2M677.5 227.7V290.6M678.5 227.4V291.1M679.5 227.1V291.5M680.5 226.9V292M681.5 227.6V291.4M682.5 228.4V290.9M683.5 229.1V290.4M684.5 229.9V289.8M685.5 230.6V289.3M686.5 231.4V288.7M687.5 232.5V287.1M688.5 233.6V285.5M689.5 234.8V283.9M690.5 235.9V282.3M691.5 236V281.9M692.5 236.1V281.6M693.5 236.2V281.3M694.5 236.4V281M695.5 236.5V280.6M696.5 236.6V280.3M697.5 236.7V280M698.5 236.8V279.7M699.5 236.9V279.3M700.5 237V279M701.5 238.2V277.6M702.5 239.3V276.2M703.5 240.4V274.8M704.5 241.6V273.4M705.5 242.7V272M706.5 243.8V271.1M707.5 244.9V270.1M708.5 246.1V269.2M709.5 247.2V268.2M710.5 241.6V274.7M711.5 235.9V281.2M712.5 235.4V282.1M713.5 234.9V283.1M714.5 234.4V284.1M715.5 233.9V285M716.5 233.4V286M717.5 232.9V286.9M718.5 232.4V287.9M719.5 231.9V288.9M720.5 231.4V289.8M721.5 231V290M722.5 230.6V290.2M723.5 230.2V290.4M724.5 229.9V290.5M725.5 229.5V290.7M726.5 229.1V290.9M727.5 230.1V290M728.5 231V289.1M729.5 231.9V288.2M730.5 232.9V287.3M731.5 233.8V286.4M732.5 234.8V285.5M733.5 234.6V285.7M734.5 234.4V285.9M735.5 234.2V286M736.5 234V286.2M737.5 233.8V286.4M738.5 233.6V286.6M739.5 235.1V283.6M740.5 236.5V280.6M741.5 237.9V277.7M742.5 239.3V274.7M743.5 239.2V274.6M744.5 239.1V274.5M745.5 239V274.4M746.5 238.8V274.3M747.5 238.7V274.2M748.5 238.6V274.1M749.5 238.5V273.9M750.5 238.4V273.8M751.5 238.3V273.7M752.5 238.2V273.6M753.5 239V273.1M754.5 239.9V272.5M755.5 240.7V272M756.5 241.6V271.5M757.5 242.4V270.9M758.5 243.2V270.4M759.5 244.1V269.8M760.5 244.9V269.3M761.5 246.3V268.4M762.5 247.7V267.6M763.5 249V266.7M764.5 250.4V265.8M765.5 251.7V265M766.5 243.8V272.5M767.5 235.9V280.1M768.5 234.3V281.2M769.5 232.7V282.3M770.5 231.2V283.3M771.5 229.6V284.4M772.5 228V285.5M773.5 228.6V285.5M774.5 229.1V285.5M775.5 229.7V285.5M776.5 230.2V285.5M777.5 230.8V285.5M778.5 231.4V285.5M779.5 231.9V285.5M780.5 232.5V285.5M781.5 232.4V286M782.5 232.3V286.6M783.5 232.2V287.1M784.5 232.1V287.7M785.5 231.9V288.2M786.5 231.8V288.7M787.5 231.7V289.3M788.5 231.6V289.8M789.5 231.5V290.4M790.5 231.4V290.9M791.5 231.7V290.6M792.5 231.9V290.4M793.5 232.2V290.1M794.5 232.5V289.8M795.5 232.8V289.6M796.5 233.1V289.3M797.5 233.4V289M798.5 233.6V288.7M799.5 235.6V285M800.5 237.6V281.2M801.5 239.6V277.4M802.5 241.6V273.6M803.5 242.6V272.7M804.5 243.7V271.9M805.5 244.7V271M806.5 245.8V270.1M807.5 246.8V269.2M808.5 247.9V268.4M809.5 249V267.5M810.5 250V266.6M811.5 247.9V269.3M812.5 245.8V272M813.5 243.7V274.7M814.5 241.6V277.4M815.5 239.7V278.8M816.5 240.3V278.6M817.5 238.7V279.9M818.5 237.1V281.2M819.5 235.5V282.5M820.5 234.9V283.2M821.5 234.4V283.9M822.5 233.8V284.6M823.5 233.2V285.4M824.5 232.6V286.1M825.5 232.1V286.8M826.5 231.5V287.5M827.5 231.4V287.8M828.5 231.3V288.2M829.5 231.2V288.5M830.5 231.1V288.8M831.5 230.9V289.2M832.5 230.8V289.5M833.5 230.7V289.8M834.5 230.6V290.2M835.5 230.5V290.5M836.5 230.9V290.2M837.5 231.2V290M838.5 231.6V289.8M839.5 232V289.5M840.5 232.4V289.2M841.5 232.8V289M842.5 233.1V288.8M843.5 233.5V288.5M844.5 240.5V283.5M845.5 235.5V286M846.5 230.5V288.5M847.5 230.2V288.7M848.5 229.9V288.9M849.5 229.7V289.2M850.5 229.4V289.4M851.5 229.1V289.6M852.5 228.8V289.8M853.5 228.6V290.1M854.5 228.3V290.3M855.5 228V290.5M856.5 227.8V290.6M857.5 227.7V290.7M858.5 227.6V290.8M859.5 227.4V290.9M860.5 227.2V291M861.5 227.1V291.1M862.5 226.9V291.2M863.5 226.8V291.3M864.5 226.7V291.4M865.5 226.5V291.5M866.5 226.3V291.5M867.5 226.2V291.5M868.5 226.1V291.5M869.5 225.9V291.5M870.5 225.8V291.5M871.5 225.6V291.5M872.5 225.4V291.5M873.5 225.3V291.5M874.5 225.2V291.5M875.5 225V291.5M876.5 225.9V290.7M877.5 226.8V289.9M878.5 227.7V289.1M879.5 228.6V288.3M880.5 229.5V287.5M881.5 229.5V287.7M882.5 229.5V287.9M883.5 229.5V288.1M884.5 229.5V288.3M885.5 229.5V288.5M886.5 229.5V288.7M887.5 229.5V288.9M888.5 229.5V289.1M889.5 229.5V289.3M890.5 229.5V289.5M891.5 229.1V289.7M892.5 228.7V289.9M893.5 228.3V290.1M894.5 227.9V290.3M895.5 227.5V290.5M896.5 228V290.1M897.5 228.5V289.6M898.5 229V289.2M899.5 229.5V288.8M900.5 230V288.4M901.5 230.5V287.9M902.5 231V287.5M903.5 230.2V287.8M904.5 229.5V288.2M905.5 228.8V288.5M906.5 228V288.8M907.5 227.2V289.2M908.5 226.5V289.5M909.5 227.5V288.8M910.5 228.5V288.2M911.5 229.5V287.5M912.5 230.5V286.8M913.5 231.5V286.2M914.5 232.5V285.5M915.5 232.6V285.5M916.5 232.8V285.5M917.5 232.9V285.5M918.5 233V285.5M919.5 233.1V285.5M920.5 233.2V285.5M921.5 233.4V285.5M922.5 233.5V285.5M923.5 233.5V285.3M924.5 233.5V285.1M925.5 233.5V284.9M926.5 233.5V284.7M927.5 233.5V284.5M928.5 253.5V262.5M929.5 254.7V261.1M930.5 255.8V260.8M931.5 257.5V259.8M932.5 257.5V259.5M933.5 257.4V259.5M934.5 257.5V259.5M935.5 257.5V259.5M936.5 257.5V259.5M937.5 255.4V263M938.5 254.9V263M939.5 253.6V263M940.5 254.9V263M941.5 254.8V263M942.5 253V263M943.5 255V261.1M944.5 257V260M945.5 257V259.6M946.5 257.4V259.5M947.5 257V260M948.5 257.4V260M949.5 257.3V260M950.5 257.4V259.7M951.5 257V259.8M952.5 257.4V260M953.5 257.2V260M954.5 257.4V260M955.5 257.5V260M956.5 250.5V264.6M957.5 249.8V265.3M958.5 251.1V265M959.5 249.4V267.5M960.5 252.2V264.2M961.5 256.8V260.6M962.5 256V260.2M963.5 256V260.6M964.5 256V260.2M965.5 256V260.7M966.5 256.7V260.2M967.5 256V261M968.5 256.7V261M969.5 256V260.4M970.5 256V260.3M971.5 256.7V261M972.5 256V260.4M973.5 252.3V266.1M974.5 249.1V270M975.5 250.6V267.5M976.5 248.3V271M977.5 247.9V271.5M978.5 250.2V267.8M979.5 250.2V268.2M980.5 252.8V263M981.5 255.5V261.1M982.5 255.5V261.5M983.5 255.5V260.5M984.5 255.5V261.5M985.5 248.5V267.3M986.5 250.5V270.3M987.5 247.9V267.6M988.5 247.1V271.9M989.5 249.5V272.7M990.5 244.5V273.5M991.5 251V270.2M992.5 251.2V266.8M993.5 255.1V263.5M994.5 252.9V266M995.5 253V268.5M996.5 248.5V271M997.5 246.8V272.9M998.5 245V269.6M999.5 243.2V272.4M1000.5 246V272.5M1001.5 244.5V279.8M1002.5 245.8V274.2M1003.5 239.1V276.3M1004.5 244.8V283.7M1005.5 237.5V285M1006.5 238.5V276.2M1007.5 239.5V282.8M1008.5 246.2V274.9M1009.5 241.5V280.6M1010.5 245.5V273.3M1011.5 245.3V271.3M1012.5 247V273.5M1013.5 251.9V270.5M1014.5 251.5V265M1015.5 252.5V266M1016.5 253.8V264.4M1017.5 254.5V263M1018.5 255.7V261.5M1019.5 256V260.7M1020.5 256.9V260.2M1021.5 257V260M1022.5 257.5V259.5M1023.5 257.5V259.5M1024.5 257.5V259.5M1025.5 257.5V259.5M1026.5 257.5V259.5M1027.5 257.5V259.5M1028.5 257.5V259.5M1029.5 257.5V259.5M1030.5 257.5V259.5M1031.5 257.5V259.5M1032.5 257.5V259.5M1033.5 257.5V259.5M1034.5 257.5V259.5M1035.5 257.5V259.5M1036.5 257.5V259.5M1037.5 257.5V259.5M1038.5 257.5V259.5M1039.5 257.5V259.5M1040.5 257.5V259.5" stroke="#00f400" stroke-width="1" fill="none" shape-rendering="crispEdges"/><path d="M35.5 257.5V259.5M36.5 257.5V259.5M37.5 257.5V259.5M38.5 257.5V259.5M39.5 257.5V259.5M40.5 257.5V259.5M41.5 257.5V259.5M42.5 257.5V259.5M43.5 257.5V259.5M44.5 257.5V259.5M45.5 257.5V259.5M46.5 257.5V259.5M47.5 257.5V259.5M48.5 257.5V259.5M49.5 257.5V259.5M50.5 257.5V259.5M51.5 257.5V259.5M52.5 257.5V259.5M53.5 257.5V259.5M54.5 257.5V259.5M55.5 257.5V259.5M56.5 257.5V259.5M57.5 257.5V259.5M58.5 257.5V259.5M59.5 257.5V259.5M60.5 257.5V259.5M61.5 257.5V259.5M62.5 257.5V259.5M63.5 257.5V259.5M64.5 257.5V259.5M65.5 257.5V259.5M66.5 257.5V259.5M67.5 257.5V259.5M68.5 257.5V259.5M69.5 257.5V259.5M70.5 257.5V259.5M71.5 257.5V259.5M72.5 257.5V259.5M73.5 257.5V259.5M74.5 257.5V259.5M75.5 257.5V259.5M76.5 257.5V259.5M77.5 257.5V259.5M78.5 257.5V259.5M79.5 257.5V259.5M80.5 257.5V259.5M81.5 257.5V259.5M82.5 257.5V259.5M83.5 257.5V259.5M84.5 257.5V259.5M85.5 257.5V259.5M86.5 257.5V259.5M87.5 257.5V259.5M88.5 257.5V259.5M89.5 257.5V259.5M90.5 257.5V259.5M91.5 257.5V259.5M92.5 257.5V259.5M93.5 257.5V259.5M94.5 257.5V259.5M95.5 257.5V259.5M96.5 257.5V259.5M97.5 257.5V259.5M98.5 257.5V259.5M99.5 257.5V259.5M100.5 257.5V259.5M101.5 257.5V259.5M102.5 257.4V259.5M103.5 257.4V259.6M104.5 257.3V259.6M105.5 257.3V259.6M106.5 257.3V259.7M107.5 257.2V259.7M108.5 257.2V259.7M109.5 257.1V259.8M110.5 257.1V259.8M111.5 257.1V259.9M112.5 257V259.9M113.5 257V260M114.5 257V260M115.5 256.9V260.1M116.5 256.9V260.1M117.5 257V260.1M118.5 257V260.1M119.5 257V260.1M120.5 257V260.1M121.5 257.1V260M122.5 257.2V259.9M123.5 257.3V259.8M124.5 257.4V259.7M125.5 257.4V259.6M126.5 257.5V259.5M127.5 257.5V259.5M128.5 257.5V259.5M129.5 257.5V259.5M130.5 257.5V259.5M131.5 257.5V259.5M132.5 257.5V259.5M133.5 257.5V259.5M134.5 257.5V259.5M135.5 257.5V259.6M136.5 257.5V259.7M137.5 257.5V259.7M138.5 257.5V259.8M139.5 257.5V259.8M140.5 257.5V259.9M141.5 257.5V259.9M142.5 257.5V259.9M143.5 257.5V259.9M144.5 257.5V259.9M145.5 257.5V259.9M146.5 257.5V259.9M147.5 257.5V259.9M148.5 257.5V259.9M149.5 257.5V259.9M150.5 257.5V259.9M151.5 257.5V259.8M152.5 257.5V259.8M153.5 257.5V259.7M154.5 257.5V259.7M155.5 257.5V259.6M156.5 257.5V259.6M157.5 257.5V259.5M158.5 257.5V259.5M159.5 257.5V259.5M160.5 257.5V259.5M161.5 257.5V259.5M162.5 257.5V259.5M163.5 257.5V259.5M164.5 257.5V259.5M165.5 257.5V259.6M166.5 257.5V259.9M167.5 257.5V259.9M168.5 257.4V260M169.5 257.4V260M170.5 257.4V260.1M171.5 257.3V260.1M172.5 257.3V260.1M173.5 257.3V260.2M174.5 257.2V260.2M175.5 257.2V260.3M176.5 257.3V260.1M177.5 257.4V260M178.5 257.4V259.8M179.5 257.5V259.6M180.5 257.5V259.5M181.5 257.5V259.5M182.5 257.5V259.5M183.5 257.5V259.5M184.5 257.5V259.5M185.5 257.5V259.6M186.5 257.5V259.7M187.5 257.5V259.7M188.5 257.4V259.7M189.5 257.4V259.8M190.5 257.4V259.8M191.5 257.3V259.8M192.5 257.3V259.8M193.5 257.3V259.8M194.5 257.2V259.9M195.5 257.2V259.9M196.5 257.2V259.8M197.5 257.3V259.7M198.5 257.4V259.7M199.5 257.4V259.6M200.5 257.5V259.5M201.5 257.5V259.5M202.5 257.5V259.5M203.5 257.5V259.5M204.5 257.5V259.5M205.5 257.5V259.5M206.5 257.5V259.5M207.5 257.5V259.5M208.5 257.5V259.5M209.5 257.5V259.5M210.5 257.5V259.5M211.5 257.5V259.5M212.5 257.5V259.5M213.5 257.5V259.5M214.5 257.5V259.5M215.5 257.5V259.5M216.5 257.5V259.5M217.5 257.5V259.5M218.5 257.5V259.5M219.5 257.5V259.5M220.5 257.5V259.5M221.5 257.4V259.7M222.5 257.3V259.9M223.5 257.2V260.1M224.5 257.1V260.3M225.5 257V260.5M226.5 256.9V260.7M227.5 256.8V260.8M228.5 256.8V260.9M229.5 256.8V261M230.5 256.7V261.1M231.5 256.7V261.2M232.5 256.6V261.4M233.5 256.6V261.5M234.5 256.7V261.2M235.5 256.8V261M236.5 257V260.7M237.5 257.1V260.5M238.5 257.2V260.2M239.5 257.4V259.9M240.5 257.5V259.7M241.5 257.5V259.6M242.5 257.5V259.5M243.5 257.5V259.5M244.5 257.5V259.5M245.5 257.5V259.5M246.5 257.5V259.5M247.5 257.5V259.5M248.5 257.5V259.6M249.5 257.4V259.8M250.5 257.3V260.1M251.5 257.2V260.3M252.5 257.1V260.5M253.5 257.1V260.5M254.5 257V260.6M255.5 257V260.6M256.5 257V260.7M257.5 257V260.7M258.5 256.9V260.8M259.5 256.9V260.8M260.5 256.9V260.9M261.5 257V260.6M262.5 257.2V260.3M263.5 257.3V260.1M264.5 257.4V259.8M265.5 257.5V259.6M266.5 257.5V259.5M267.5 257.5V259.5M268.5 257.5V259.5M269.5 257.5V259.6M270.5 257.4V259.7M271.5 257.4V259.8M272.5 257.3V259.9M273.5 257.3V259.9M274.5 257.3V259.9M275.5 257.3V260M276.5 257.3V260M277.5 257.3V260M278.5 257.3V260M279.5 257.3V260.1M280.5 257.3V260.1M281.5 257.1V260.2M282.5 256.9V260.3M283.5 256.8V260.4M284.5 256.6V260.5M285.5 256.4V260.6M286.5 256.3V260.8M287.5 256.1V260.9M288.5 256.3V260.7M289.5 256.6V260.5M290.5 256.8V260.3M291.5 257V260.1M292.5 257.3V259.9M293.5 257.4V259.8M294.5 257.4V259.7M295.5 257.5V259.6M296.5 257.5V259.5M297.5 257.5V259.5M298.5 257.5V259.5M299.5 257.5V259.5M300.5 257.5V259.5M301.5 257.5V259.5M302.5 257.5V259.5M303.5 257.5V259.5M304.5 257.5V259.5M305.5 257.5V259.5M306.5 257.5V259.5M307.5 257.5V259.5M308.5 257.5V259.5M309.5 257.5V259.5M310.5 257.5V259.5M311.5 257.5V259.5M312.5 257.5V259.5M313.5 257.5V259.5M314.5 257.5V259.5M315.5 257.5V259.5M316.5 257.5V259.5M317.5 257.5V259.5M318.5 257.5V259.5M319.5 257.5V259.5M320.5 257.5V259.5M321.5 257.5V259.5M322.5 257.5V259.5M323.5 257.5V259.5M324.5 257.5V259.5M325.5 257.5V259.5M326.5 257.5V259.5M327.5 257.5V259.5M328.5 257.5V259.5M329.5 257.5V259.5M330.5 257.5V259.5M331.5 257.5V259.5M332.5 257.5V259.5M333.5 257.5V259.5M334.5 257.5V259.5M335.5 257.5V259.5M336.5 257.5V259.5M337.5 257.5V259.5M338.5 257.5V259.5M339.5 257.5V259.5M340.5 257.5V259.5M341.5 257.5V259.5M342.5 257.5V259.5M343.5 257.5V259.6M344.5 257.5V259.7M345.5 257.5V259.7M346.5 257.5V259.8M347.5 257.5V259.9M348.5 257.5V260M349.5 257.5V260M350.5 257.5V260.1M351.5 257.5V260.1M352.5 257.5V260.2M353.5 257.5V260.2M354.5 257.5V260.2M355.5 257.5V260.2M356.5 257.5V260.2M357.5 257.5V260.2M358.5 257.5V260.3M359.5 257.4V260.3M360.5 257.4V260.3M361.5 257.5V260.1M362.5 257.5V259.9M363.5 257.5V259.7M364.5 257.5V259.5M365.5 257.5V259.5M366.5 257.5V259.5M367.5 257.5V259.5M368.5 257.5V259.5M369.5 257.5V259.5M370.5 257.5V259.5M371.5 257.5V259.5M372.5 257.5V259.5M373.5 257.5V259.5M374.5 257.5V259.5M375.5 257.5V259.7M376.5 257.5V259.7M377.5 257.5V259.7M378.5 257.5V259.7M379.5 257.5V259.7M380.5 257.5V259.7M381.5 257.5V259.7M382.5 257.5V259.7M383.5 257.5V259.7M384.5 257.5V259.7M385.5 257.5V259.7M386.5 257.5V259.7M387.5 257.5V259.7M388.5 257.5V259.7M389.5 257.5V259.8M390.5 257.5V259.8M391.5 257.5V259.7M392.5 257.5V259.6M393.5 257.5V259.5M394.5 257.5V259.5M395.5 257.5V259.5M396.5 257.5V259.5M397.5 257.5V259.5M398.5 257.5V259.5M399.5 257.5V259.5M400.5 257.5V259.5M401.5 257.5V259.5M402.5 257.5V259.5M403.5 257.5V259.5M404.5 257.5V259.5M405.5 257.5V259.5M406.5 257.5V259.5M407.5 257.5V259.5M408.5 257.5V259.5M409.5 257.5V259.5M410.5 257.5V259.5M411.5 257.5V259.5M412.5 257.5V259.5M413.5 257.5V259.5M414.5 257.5V259.5M415.5 257.5V259.5M416.5 257.5V259.5M417.5 257.4V259.8M418.5 257.4V259.8M419.5 257.4V259.8M420.5 257.4V259.8M421.5 257.4V259.9M422.5 257.4V259.9M423.5 257.4V259.9M424.5 257.3V259.9M425.5 257.3V259.9M426.5 257.3V260M427.5 257.3V260M428.5 257.3V260M429.5 257.3V260M430.5 257.3V260.1M431.5 257.3V260.1M432.5 257.2V260.1M433.5 257.2V260.2M434.5 257.1V260.3M435.5 257.1V260.3M436.5 257.1V260.4M437.5 257V260.5M438.5 257V260.5M439.5 256.9V260.6M440.5 256.9V260.7M441.5 256.8V260.7M442.5 256.8V260.7M443.5 256.8V260.8M444.5 256.7V260.8M445.5 256.7V260.8M446.5 256.7V260.9M447.5 256.6V260.9M448.5 256.6V260.9M449.5 256.6V261M450.5 256.5V261M451.5 256.6V260.8M452.5 256.8V260.7M453.5 256.9V260.5M454.5 257V260.3M455.5 257.1V260.1M456.5 257.2V259.9M457.5 257.4V259.8M458.5 257.5V259.7M459.5 257.5V259.5M460.5 257.5V259.5M461.5 257.5V259.5M462.5 257.5V259.5M463.5 257.5V259.5M464.5 257.5V259.5M465.5 257.5V259.5M466.5 257.5V259.5M467.5 257.5V259.5M468.5 257.5V259.5M469.5 257.5V259.5M470.5 257.5V259.6M471.5 256.9V260.5M472.5 256.8V260.5M473.5 256.8V260.6M474.5 256.8V260.6M475.5 256.7V260.7M476.5 256.7V260.7M477.5 256.6V260.8M478.5 256.6V260.8M479.5 256.6V260.9M480.5 256.5V260.9M481.5 256.5V261M482.5 256.5V261M483.5 256.4V261M484.5 256.4V261M485.5 256.4V261.1M486.5 256.4V261.1M487.5 256.3V261.1M488.5 256.3V261.1M489.5 256.3V261.2M490.5 256.2V261.2M491.5 256.3V261.1M492.5 256.4V261M493.5 256.5V260.9M494.5 256.5V260.8M495.5 256.6V260.7M496.5 256.7V260.6M497.5 256.7V260.5M498.5 256.8V260.4M499.5 256.9V260.3M500.5 257.1V260M501.5 257.3V259.8M502.5 257.5V259.5M503.5 257.5V259.5M504.5 257.5V259.5M505.5 257.5V259.5M506.5 257.4V259.6M507.5 257.2V259.8M508.5 257.2V259.8M509.5 257.2V259.9M510.5 257.2V259.9M511.5 257.1V259.9M512.5 257.1V260M513.5 257.1V260M514.5 257.1V260.1M515.5 257.1V260.1M516.5 257V260.1M517.5 257V260.2M518.5 257V260.2M519.5 257V260.2M520.5 257V260.2M521.5 257V260.2M522.5 256.9V260.2M523.5 256.9V260.3M524.5 256.9V260.3M525.5 256.9V260.3M526.5 256.9V260.2M527.5 257V260.2M528.5 257V260.1M529.5 257.1V260M530.5 257.1V259.9M531.5 257.2V259.9M532.5 257.3V259.8M533.5 257.3V259.7M534.5 257.4V259.7M535.5 257.4V259.6M536.5 257.4V259.6M537.5 257.5V259.5M538.5 257.5V259.5M539.5 257.5V259.5M540.5 257.5V259.5M541.5 257.5V259.5M542.5 257.5V259.5M543.5 257.5V259.7M544.5 257.3V260M545.5 257.2V260.3M546.5 257V260.6M547.5 256.9V260.8M548.5 256.8V260.9M549.5 256.8V260.9M550.5 256.7V261M551.5 256.7V261M552.5 256.7V261.1M553.5 256.6V261.1M554.5 256.6V261.2M555.5 256.5V261.2M556.5 256.5V261.3M557.5 256.4V261.3M558.5 256.3V261.4M559.5 256.3V261.4M560.5 256.2V261.5M561.5 256.1V261.5M562.5 256.1V261.6M563.5 256.1V261.6M564.5 256.1V261.6M565.5 256V261.7M566.5 256V261.7M567.5 256V261.7M568.5 256V261.8M569.5 256V261.8M570.5 256V261.8M571.5 256V261.9M572.5 256V261.9M573.5 256.1V261.8M574.5 256.2V261.6M575.5 256.2V261.5M576.5 256.3V261.3M577.5 256.4V261.2M578.5 256.5V261M579.5 256.6V260.9M580.5 256.7V260.8M581.5 256.9V260.4M582.5 257.1V260.1M583.5 257.3V259.8M584.5 257.5V259.5M585.5 257.5V259.5M586.5 257.5V259.5M587.5 257.5V259.5M588.5 257.5V259.5M589.5 257.5V259.5M590.5 257.5V259.5M591.5 255.4V262M592.5 255.4V262M593.5 255.4V262.1M594.5 255.3V262.1M595.5 255.3V262.2M596.5 255.2V262.2M597.5 255.2V262.3M598.5 255.1V262.3M599.5 255.1V262.3M600.5 255V262.4M601.5 255V262.4M602.5 255V262.5M603.5 254.9V262.5M604.5 254.9V262.6M605.5 254.9V262.6M606.5 254.8V262.6M607.5 254.8V262.7M608.5 254.8V262.7M609.5 254.7V262.8M610.5 254.7V262.8M611.5 254.7V262.8M612.5 254.6V262.9M613.5 254.7V262.9M614.5 254.7V262.9M615.5 254.7V262.8M616.5 254.7V262.8M617.5 254.7V262.8M618.5 254.7V262.8M619.5 254.8V262.8M620.5 254.8V262.8M621.5 254.8V262.8M622.5 254.8V262.8M623.5 254.8V262.8M624.5 254.8V262.8M625.5 255.1V262.4M626.5 255.3V262M627.5 255.6V261.6M628.5 255.9V261.2M629.5 255.9V261.1M630.5 256V260.9M631.5 256.1V260.7M632.5 256.2V260.6M633.5 256.3V260.4M634.5 256.4V260.2M635.5 256.5V260.1M636.5 256.5V260M637.5 256.6V260M638.5 256.6V259.9M639.5 256.7V259.9M640.5 256.8V259.8M641.5 256.8V259.8M642.5 256.9V259.7M643.5 257V259.7M644.5 257V259.6M645.5 257.1V259.6M646.5 256.9V259.7M647.5 256.8V259.9M648.5 256.6V260.1M649.5 256.4V260.3M650.5 256.3V260.4M651.5 256V260.7M652.5 255.8V260.9M653.5 255.5V261.1M654.5 255.3V261.4M655.5 255V261.6M656.5 255V261.7M657.5 254.9V261.7M658.5 254.8V261.7M659.5 254.8V261.8M660.5 254.7V261.8M661.5 254.6V261.9M662.5 254.6V261.9M663.5 254.5V262M664.5 254.4V262M665.5 254.2V262.4M666.5 253.9V262.8M667.5 253.7V263.2M668.5 253.4V263.6M669.5 253.4V263.6M670.5 253.3V263.7M671.5 253.3V263.8M672.5 253.2V263.9M673.5 253.2V264M674.5 253.1V264M675.5 253.1V264.1M676.5 253V264.2M677.5 253V264.3M678.5 252.9V264.4M679.5 252.9V264.4M680.5 252.8V264.5M681.5 252.9V264.4M682.5 253.1V264.3M683.5 253.2V264.2M684.5 253.3V264.1M685.5 253.5V264M686.5 253.6V263.9M687.5 253.8V263.7M688.5 254V263.4M689.5 254.2V263.1M690.5 254.4V262.8M691.5 254.5V262.7M692.5 254.5V262.7M693.5 254.5V262.6M694.5 254.5V262.5M695.5 254.5V262.5M696.5 254.6V262.4M697.5 254.6V262.4M698.5 254.6V262.3M699.5 254.6V262.3M700.5 254.6V262.2M701.5 254.8V261.9M702.5 255V261.7M703.5 255.2V261.4M704.5 255.4V261.2M705.5 255.7V260.9M706.5 255.9V260.8M707.5 256.1V260.6M708.5 256.3V260.4M709.5 256.5V260.2M710.5 255.4V261.4M711.5 254.4V262.6M712.5 254.3V262.8M713.5 254.3V262.9M714.5 254.2V263.1M715.5 254.1V263.3M716.5 254V263.4M717.5 253.9V263.6M718.5 253.8V263.8M719.5 253.7V264M720.5 253.6V264.1M721.5 253.6V264.2M722.5 253.5V264.2M723.5 253.4V264.2M724.5 253.3V264.3M725.5 253.3V264.3M726.5 253.2V264.3M727.5 253.4V264.2M728.5 253.6V264M729.5 253.7V263.8M730.5 253.9V263.7M731.5 254.1V263.5M732.5 254.2V263.4M733.5 254.2V263.4M734.5 254.2V263.4M735.5 254.1V263.5M736.5 254.1V263.5M737.5 254.1V263.5M738.5 254V263.6M739.5 254.3V263M740.5 254.5V262.5M741.5 254.8V262M742.5 255V261.4M743.5 255V261.4M744.5 255V261.4M745.5 255V261.4M746.5 255V261.3M747.5 254.9V261.3M748.5 254.9V261.3M749.5 254.9V261.3M750.5 254.9V261.3M751.5 254.9V261.2M752.5 254.8V261.2M753.5 255V261.1M754.5 255.1V261M755.5 255.3V260.9M756.5 255.4V260.8M757.5 255.6V260.7M758.5 255.8V260.6M759.5 255.9V260.5M760.5 256.1V260.4M761.5 256.3V260.3M762.5 256.5V260.1M763.5 256.8V260M764.5 257V259.8M765.5 257.3V259.7M766.5 255.9V261M767.5 254.4V262.4M768.5 254.1V262.6M769.5 253.9V262.8M770.5 253.6V263M771.5 253.3V263.2M772.5 253V263.4M773.5 253.1V263.4M774.5 253.2V263.4M775.5 253.3V263.4M776.5 253.4V263.4M777.5 253.5V263.4M778.5 253.6V263.4M779.5 253.7V263.4M780.5 253.8V263.4M781.5 253.8V263.5M782.5 253.8V263.6M783.5 253.8V263.7M784.5 253.7V263.7M785.5 253.7V263.8M786.5 253.7V263.9M787.5 253.7V264M788.5 253.7V264.1M789.5 253.6V264.2M790.5 253.6V264.3M791.5 253.7V264.3M792.5 253.7V264.2M793.5 253.8V264.2M794.5 253.8V264.1M795.5 253.9V264.1M796.5 253.9V264M797.5 254V264M798.5 254V263.9M799.5 254.4V263.3M800.5 254.7V262.6M801.5 255.1V261.9M802.5 255.4V261.2M803.5 255.6V261.1M804.5 255.8V260.9M805.5 256V260.7M806.5 256.2V260.6M807.5 256.4V260.4M808.5 256.6V260.3M809.5 256.8V260.1M810.5 257V260M811.5 256.6V260.4M812.5 256.2V260.9M813.5 255.8V261.4M814.5 255.4V261.9M815.5 255.1V262.2M816.5 255.2V262.1M817.5 254.9V262.4M818.5 254.6V262.6M819.5 254.4V262.8M820.5 254.3V262.9M821.5 254.2V263.1M822.5 254.1V263.2M823.5 253.9V263.3M824.5 253.8V263.5M825.5 253.7V263.6M826.5 253.6V263.7M827.5 253.6V263.8M828.5 253.6V263.8M829.5 253.6V263.9M830.5 253.6V264M831.5 253.5V264M832.5 253.5V264.1M833.5 253.5V264.1M834.5 253.5V264.2M835.5 253.5V264.3M836.5 253.5V264.2M837.5 253.6V264.2M838.5 253.7V264.1M839.5 253.7V264.1M840.5 253.8V264M841.5 253.9V264M842.5 253.9V263.9M843.5 254V263.9M844.5 255.3V263M845.5 254.4V263.4M846.5 253.5V263.9M847.5 253.4V263.9M848.5 253.4V264M849.5 253.3V264M850.5 253.3V264.1M851.5 253.2V264.1M852.5 253.2V264.1M853.5 253.1V264.2M854.5 253.1V264.2M855.5 253V264.3M856.5 253V264.3M857.5 253V264.3M858.5 252.9V264.3M859.5 252.9V264.3M860.5 252.9V264.4M861.5 252.8V264.4M862.5 252.8V264.4M863.5 252.8V264.4M864.5 252.8V264.4M865.5 252.7V264.4M866.5 252.7V264.4M867.5 252.7V264.4M868.5 252.7V264.4M869.5 252.6V264.4M870.5 252.6V264.4M871.5 252.6V264.4M872.5 252.6V264.4M873.5 252.5V264.4M874.5 252.5V264.4M875.5 252.5V264.4M876.5 252.6V264.3M877.5 252.8V264.2M878.5 253V264M879.5 253.1V263.9M880.5 253.3V263.7M881.5 253.3V263.8M882.5 253.3V263.8M883.5 253.3V263.8M884.5 253.3V263.9M885.5 253.3V263.9M886.5 253.3V263.9M887.5 253.3V264M888.5 253.3V264M889.5 253.3V264M890.5 253.3V264.1M891.5 253.2V264.1M892.5 253.1V264.2M893.5 253.1V264.2M894.5 253V264.2M895.5 252.9V264.3M896.5 253V264.2M897.5 253.1V264.1M898.5 253.2V264M899.5 253.3V264M900.5 253.4V263.9M901.5 253.5V263.8M902.5 253.6V263.7M903.5 253.4V263.8M904.5 253.3V263.8M905.5 253.1V263.9M906.5 253V264M907.5 252.9V264M908.5 252.7V264.1M909.5 252.9V264M910.5 253.1V263.8M911.5 253.3V263.7M912.5 253.5V263.6M913.5 253.6V263.5M914.5 253.8V263.4M915.5 253.8V263.4M916.5 253.9V263.4M917.5 253.9V263.4M918.5 253.9V263.4M919.5 253.9V263.4M920.5 254V263.4M921.5 254V263.4M922.5 254V263.4M923.5 254V263.3M924.5 254V263.3M925.5 254V263.3M926.5 254V263.2M927.5 254V263.2M928.5 257.5V259.5M929.5 257.5V259.5M930.5 257.5V259.5M931.5 257.5V259.5M932.5 257.5V259.5M933.5 257.5V259.5M934.5 257.5V259.5M935.5 257.5V259.5M936.5 257.5V259.5M937.5 257.5V259.5M938.5 257.5V259.5M939.5 257.5V259.5M940.5 257.5V259.5M941.5 257.5V259.5M942.5 257.5V259.5M943.5 257.5V259.5M944.5 257.5V259.5M945.5 257.5V259.5M946.5 257.5V259.5M947.5 257.5V259.5M948.5 257.5V259.5M949.5 257.5V259.5M950.5 257.5V259.5M951.5 257.5V259.5M952.5 257.5V259.5M953.5 257.5V259.5M954.5 257.5V259.5M955.5 257.5V259.5M956.5 257.1V259.9M957.5 256.9V260M958.5 256.8V260.1M959.5 256.7V260.1M960.5 257.4V259.5M961.5 257.5V259.5M962.5 257.5V259.5M963.5 257.5V259.5M964.5 257.5V259.5M965.5 257.5V259.5M966.5 257.5V259.5M967.5 257.5V259.5M968.5 257.5V259.5M969.5 257.5V259.5M970.5 257.5V259.5M971.5 257.5V259.5M972.5 257.5V259.5M973.5 256.9V260.5M974.5 256.8V260.6M975.5 256.7V260.7M976.5 256.7V260.8M977.5 256.6V260.8M978.5 256.5V260.9M979.5 257V260.3M980.5 257.5V259.7M981.5 257.5V259.5M982.5 257.5V259.5M983.5 257.5V259.5M984.5 257.5V259.5M985.5 256.7V260.5M986.5 256.6V260.6M987.5 256.4V260.8M988.5 256.3V260.9M989.5 256.1V261.1M990.5 256V261.2M991.5 256.6V260.6M992.5 257.2V260M993.5 257.5V259.5M994.5 257.4V259.9M995.5 257.1V260.3M996.5 256.7V260.8M997.5 256.4V261.1M998.5 256.1V261.4M999.5 255.8V261.8M1000.5 255.4V262.1M1001.5 255.3V262.3M1002.5 255.2V262.6M1003.5 255V262.8M1004.5 254.9V263M1005.5 254.7V263.3M1006.5 254.9V263.1M1007.5 255.1V262.9M1008.5 255.3V262.7M1009.5 255.4V262.5M1010.5 255.6V262.3M1011.5 256V261.7M1012.5 256.4V261.2M1013.5 256.8V260.7M1014.5 257.2V260.1M1015.5 257.4V259.9M1016.5 257.5V259.6M1017.5 257.5V259.5M1018.5 257.5V259.5M1019.5 257.5V259.5M1020.5 257.5V259.5M1021.5 257.5V259.5M1022.5 257.5V259.5M1023.5 257.5V259.5M1024.5 257.5V259.5M1025.5 257.5V259.5M1026.5 257.5V259.5M1027.5 257.5V259.5M1028.5 257.5V259.5M1029.5 257.5V259.5M1030.5 257.5V259.5M1031.5 257.5V259.5M1032.5 257.5V259.5M1033.5 257.5V259.5M1034.5 257.5V259.5M1035.5 257.5V259.5M1036.5 257.5V259.5M1037.5 257.5V259.5M1038.5 257.5V259.5M1039.5 257.5V259.5M1040.5 257.5V259.5" stroke="#00cc00" stroke-width="1" fill="none" shape-rendering="crispEdges"/><path d="M35.5 406.3V408.7M36.5 406.2V408.7M37.5 406.1V409.6M38.5 406V408.9M39.5 405.8V409.1M40.5 405.6V409.3M41.5 405.2V409.7M42.5 404.5V410.4M43.5 404.1V410.2M44.5 403.6V411.2M45.5 402.6V412.3M46.5 400.8V411.4M47.5 403V412.5M48.5 400.8V411.5M49.5 401.2V411.4M50.5 399.6V413.3M51.5 400.2V414.1M52.5 402.3V412.4M53.5 400.3V413.5M54.5 401.7V411.6M55.5 400.6V411.7M56.5 400V411.8M57.5 401V412.8M58.5 401.7V413M59.5 400.4V412.9M60.5 397.6V415.5M61.5 397.8V412.7M62.5 401.6V413.1M63.5 401.6V414.5M64.5 401.4V412.6M65.5 401.5V413.2M66.5 399.5V413.4M67.5 401.6V414.3M68.5 402.1V412.7M69.5 400.2V414.8M70.5 402.3V412.5M71.5 401.2V414.2M72.5 402.3V413.3M73.5 402V412.5M74.5 402.2V412.8M75.5 401.4V412.5M76.5 400.7V415.5M77.5 400.3V412.5M78.5 400.5V414.1M79.5 402.3V413.1M80.5 400.5V416M81.5 398.8V413.8M82.5 400.8V416.1M83.5 402.1V413.6M84.5 402.3V414.9M85.5 400.5V412.7M86.5 402.3V413.5M87.5 400.3V412.3M88.5 402.2V413.1M89.5 402.5V414.8M90.5 401V415M91.5 401.6V413.4M92.5 402.9V412.5M93.5 402.1V412.8M94.5 402.5V415M95.5 402.1V413.5M96.5 398V414.1M97.5 398V413.5M98.5 400.1V414.3M99.5 400.3V414.6M100.5 399.4V417.9M101.5 394.9V414.4M102.5 397.2V416.2M103.5 398.5V414.8M104.5 398.4V415.6M105.5 398V417.4M106.5 397.6V416M107.5 397.7V421.7M108.5 396.7V422M109.5 397.5V419.3M110.5 394.9V420.2M111.5 394.9V422.6M112.5 394V417.2M113.5 392.6V420.7M114.5 395.9V422.5M115.5 389.9V419M116.5 396.2V419.1M117.5 393.4V420.1M118.5 396.7V420.2M119.5 394.3V421.3M120.5 396V423.7M121.5 394V418.2M122.5 397.3V423.3M123.5 398.5V417.7M124.5 398.8V417.8M125.5 396.2V414.9M126.5 400.4V414.2M127.5 401.4V414.6M128.5 401.3V416M129.5 402.4V412.6M130.5 404V411M131.5 404.7V410.1M132.5 404.9V409.4M133.5 403.7V414.6M134.5 403.5V412.4M135.5 400.4V412.2M136.5 398.7V414.9M137.5 403.4V417.9M138.5 395.7V419.2M139.5 396.9V422.9M140.5 402.1V416.8M141.5 397.8V415.8M142.5 394.9V416.1M143.5 403.1V413.5M144.5 400.9V413.2M145.5 399.2V424.6M146.5 395.4V424.4M147.5 402.2V414M148.5 403V423.4M149.5 403.1V413.4M150.5 398.6V423.7M151.5 400.2V413.2M152.5 403.3V420.6M153.5 399.1V414.2M154.5 396V413.7M155.5 403.3V421.1M156.5 403.7V413.8M157.5 403.5V416M158.5 401.8V412.5M159.5 401.6V411.2M160.5 399.8V414.2M161.5 405V411.7M162.5 405.3V410.5M163.5 404.4V410.6M164.5 402.5V411.3M165.5 396.5V418.6M166.5 402.3V418.3M167.5 402.4V414.1M168.5 400.9V420.7M169.5 402.6V425.1M170.5 401.5V414.7M171.5 399.2V425.5M172.5 399.7V419.4M173.5 391.6V419.5M174.5 400V415.7M175.5 397.9V421.9M176.5 397.6V415.1M177.5 402.6V424.8M178.5 397.9V420.9M179.5 396.9V414.5M180.5 403.1V418.9M181.5 398.2V410.9M182.5 400.4V413.5M183.5 403.7V414.6M184.5 399.5V414.1M185.5 402.4V419.6M186.5 398.6V413.7M187.5 397V421.1M188.5 400.8V416.8M189.5 402.5V413.1M190.5 395V422.6M191.5 393.4V413.4M192.5 396.4V415.4M193.5 401.2V422.3M194.5 401.7V413.3M195.5 399.7V413.8M196.5 399.6V418.1M197.5 398.8V421.7M198.5 399.5V412.8M199.5 399.3V412.1M200.5 398.6V412.2M201.5 400.7V413.6M202.5 396.6V411.5M203.5 402.6V412.4M204.5 401V412.6M205.5 396.5V417.3M206.5 397.1V414.6M207.5 398.8V413.6M208.5 403.4V411.3M209.5 403.5V415.2M210.5 400.4V410.8M211.5 402.9V411M212.5 401.3V412.2M213.5 401.4V412.5M214.5 401.9V413.1M215.5 398.3V411.3M216.5 398.4V414.5M217.5 397.8V411.7M218.5 402.2V418.2M219.5 395.3V412.5M220.5 401.3V413M221.5 401.1V421.4M222.5 398.8V416.1M223.5 392.2V420.4M224.5 390.4V422.3M225.5 397.4V416M226.5 396V422.9M227.5 393.8V431.5M228.5 397.2V425.1M229.5 389V437.1M230.5 388.5V420.9M231.5 388V430.9M232.5 396.9V428.5M233.5 387.8V437.2M234.5 398.2V425.9M235.5 393V418.9M236.5 392.4V429.1M237.5 396.4V430.6M238.5 400.3V416.3M239.5 393.2V419M240.5 403.2V415M241.5 402.1V418.8M242.5 396.1V412.1M243.5 399.8V417.4M244.5 403.8V413M245.5 404.2V411.9M246.5 401.9V413.7M247.5 403.1V415.1M248.5 400.3V414M249.5 399.9V420.8M250.5 395.5V417.1M251.5 394.2V418.7M252.5 397.7V417.2M253.5 397.2V416.1M254.5 391.6V419.6M255.5 398.6V430M256.5 393.9V421.6M257.5 390.4V424.8M258.5 390.2V419.1M259.5 391.4V434.8M260.5 397.3V430M261.5 388.9V423.8M262.5 394.3V415.6M263.5 402V423.7M264.5 396.8V413.5M265.5 397.8V412.3M266.5 398.6V416.6M267.5 401V412.2M268.5 398.2V418.1M269.5 402.7V414.7M270.5 398.2V418.8M271.5 402.6V420.3M272.5 397.4V421.6M273.5 401.9V416.2M274.5 397.4V423.4M275.5 399.7V424.5M276.5 398.5V424.3M277.5 392.2V414M278.5 401.5V415.8M279.5 398.5V421.4M280.5 397.8V416.4M281.5 400.8V418.2M282.5 387.6V416.1M283.5 399.1V421.4M284.5 398.3V427.6M285.5 393.1V416.7M286.5 392V427.4M287.5 388.3V419.1M288.5 381.1V417M289.5 399.1V417.4M290.5 388.2V420.1M291.5 394.8V416.7M292.5 400.3V416.3M293.5 401.9V417.4M294.5 401.5V421.5M295.5 397.6V412.6M296.5 396.6V411.9M297.5 397.6V413.2M298.5 399.4V413.1M299.5 403.1V411.5M300.5 402.8V411.7M301.5 404.9V411.2M302.5 403.8V412.9M303.5 405.1V409.8M304.5 405.5V410.2M305.5 404.8V409.8M306.5 405.8V411.7M307.5 406V410.4M308.5 406V409.5M309.5 405.8V409.4M310.5 406.4V408.7M311.5 406.5V409.5M312.5 406.5V409M313.5 406.5V408.5M314.5 405.6V409.2M315.5 406.5V408.5M316.5 405.7V408.5M317.5 405.8V408.8M318.5 406.1V408.5M319.5 406.2V409.4M320.5 406.5V408.7M321.5 406.2V408.5M322.5 406.5V408.5M323.5 405.9V409.1M324.5 406V408.6M325.5 405.6V409.3M326.5 405.9V408.5M327.5 406.5V409.3M328.5 406.5V408.9M329.5 405.4V408.5M330.5 406.3V408.6M331.5 406.1V408.5M332.5 406.5V409.6M333.5 406.4V409.6M334.5 406.3V408.5M335.5 406.5V408.6M336.5 405.2V408.6M337.5 406.5V408.5M338.5 406.3V408.9M339.5 406.5V408.5M340.5 406.5V408.5M341.5 404.9V412.2M342.5 405V411M343.5 404.2V414M344.5 398.8V421.7M345.5 402.2V421.3M346.5 403V415.1M347.5 403.3V417.2M348.5 403.2V422.9M349.5 398.7V421.2M350.5 399.8V416.5M351.5 402.2V420.9M352.5 401.8V420.2M353.5 402.8V420.3M354.5 396.8V421.5M355.5 402V416.6M356.5 401.8V417.1M357.5 396.6V415M358.5 399V416M359.5 399.5V423.5M360.5 400.4V416.1M361.5 399.5V416.2M362.5 400.5V420.1M363.5 402.9V415.9M364.5 401.8V414.2M365.5 404V411.1M366.5 401.6V410M367.5 405V409.7M368.5 401V410.2M369.5 402.5V410.5M370.5 402.9V411.6M371.5 404.5V410.7M372.5 401.2V412.1M373.5 404.4V415.3M374.5 402.5V411.5M375.5 400.7V419.6M376.5 400.2V413.6M377.5 400.4V412.6M378.5 403.4V412.5M379.5 400.5V416.1M380.5 401.6V417.1M381.5 402.8V422.4M382.5 402.9V414.9M383.5 399.5V412.8M384.5 395.3V412.7M385.5 398.4V412.7M386.5 400.7V421.2M387.5 399.4V413.5M388.5 395.8V413.3M389.5 402.7V416.2M390.5 399V414.9M391.5 400.5V416M392.5 403V414.5M393.5 403.3V419M394.5 400.7V411.8M395.5 402.6V412M396.5 401.3V417.4M397.5 404.1V413.6M398.5 404.2V411.8M399.5 403.4V411.8M400.5 403.6V411.8M401.5 403.7V413.2M402.5 402.1V410M403.5 404.3V412.3M404.5 402.7V410.1M405.5 405.6V411M406.5 403.5V409.1M407.5 405.8V410.2M408.5 406.2V408.9M409.5 405.9V408.9M410.5 405.5V409.2M411.5 406.2V409.9M412.5 405.5V410.1M413.5 406.3V410.6M414.5 405.7V409.9M415.5 403.4V414.6M416.5 397.4V414.1M417.5 400.7V412.7M418.5 402.6V413.5M419.5 396.3V414.5M420.5 402.3V418.9M421.5 402.4V413.6M422.5 400.2V423.6M423.5 400.9V417.4M424.5 398.8V413.4M425.5 401.1V414M426.5 401.3V415.3M427.5 399.9V417.1M428.5 399.3V414.5M429.5 401.7V413.9M430.5 394.1V418.7M431.5 401.2V417.4M432.5 402.1V424.8M433.5 393.1V418.5M434.5 399.2V415M435.5 392.5V415.8M436.5 397.8V428.5M437.5 390.2V415.8M438.5 399V425.9M439.5 392.3V419.2M440.5 394.7V421.5M441.5 388.6V431.8M442.5 387.4V427.5M443.5 392.5V427.7M444.5 399.1V426.3M445.5 394.8V422.5M446.5 397.4V420.3M447.5 395.2V433.8M448.5 382.9V423.3M449.5 392.8V432.5M450.5 396.2V438.7M451.5 393.7V417.8M452.5 397.3V424.8M453.5 387.5V418.6M454.5 398.1V419.2M455.5 401.1V414.2M456.5 394.3V413.7M457.5 396.5V420.9M458.5 396.2V412.3M459.5 400.9V411.7M460.5 403.8V412M461.5 402.8V411.8M462.5 404.9V411.3M463.5 403.4V410M464.5 403.7V409.8M465.5 403.5V410.9M466.5 405V409.5M467.5 405.7V409.1M468.5 406.2V409.6M469.5 404.9V409.2M470.5 400.8V420.6M471.5 398.6V419.8M472.5 388.7V426.8M473.5 399.4V420.1M474.5 394V418.4M475.5 389.5V429.4M476.5 399.6V424.7M477.5 399.5V423.1M478.5 399.3V426.4M479.5 398.8V417.5M480.5 389.2V417.8M481.5 395.6V417.8M482.5 391.4V419.8M483.5 394.3V429.9M484.5 391.6V430.4M485.5 385.1V419.5M486.5 395.9V419.6M487.5 385.1V428M488.5 396.4V420.5M489.5 397.4V425M490.5 395.7V424M491.5 391.3V430.4M492.5 391.8V424M493.5 396.5V428.9M494.5 398V418.7M495.5 396.8V434.7M496.5 398.7V428.9M497.5 387.5V430.4M498.5 386.9V424.4M499.5 399.9V416.1M500.5 393.6V421.3M501.5 398.8V414.1M502.5 396.9V413.1M503.5 402V415.6M504.5 401.8V414.7M505.5 401.5V416.9M506.5 394.9V412.2M507.5 399.2V422.7M508.5 391V416.7M509.5 401.5V413.6M510.5 391.7V419M511.5 401.2V424.6M512.5 401.4V415.7M513.5 394.5V413.8M514.5 396.6V418.7M515.5 393.9V417.5M516.5 396.7V418.5M517.5 400.1V422.1M518.5 398.6V421.7M519.5 395.6V423.4M520.5 392.1V416.5M521.5 390.9V424.5M522.5 394.1V416.8M523.5 400.4V428.8M524.5 393V415.3M525.5 388.2V422M526.5 399.4V416.8M527.5 388.1V415.9M528.5 399.4V420M529.5 398.6V414.5M530.5 395.9V413.9M531.5 401.9V417.9M532.5 395.4V421.7M533.5 402.2V412.9M534.5 401.8V412.6M535.5 402.7V413.7M536.5 401.8V417.1M537.5 402.7V415.1M538.5 394.6V411.9M539.5 403V414.2M540.5 397.6V412.7M541.5 402.7V416.2M542.5 402.2V412.9M543.5 399.8V414.8M544.5 399.8V418.5M545.5 391.2V429.1M546.5 398.3V416.2M547.5 393.4V423.5M548.5 396V434.3M549.5 399.7V431.2M550.5 389.3V433.8M551.5 388.4V426.7M552.5 395.9V425M553.5 398V418.6M554.5 396.1V432.3M555.5 387V426.6M556.5 397.7V419M557.5 393.1V442M558.5 397.2V421.5M559.5 397.4V431.3M560.5 389.3V427.3M561.5 397.2V427.5M562.5 380.7V429.8M563.5 380.8V435.7M564.5 377V420.5M565.5 382V429.2M566.5 381V434.8M567.5 377.6V447.4M568.5 380.1V423.5M569.5 389.4V432.5M570.5 376.5V434.6M571.5 388.9V435.7M572.5 391.2V439.9M573.5 397V435.9M574.5 383.9V431.2M575.5 390.2V441.4M576.5 383.5V425.7M577.5 380.7V420.9M578.5 389.1V419.3M579.5 389.7V422.3M580.5 398.2V421.7M581.5 400.4V426M582.5 395.2V425.2M583.5 395.8V417.7M584.5 403.1V415M585.5 403.7V415M586.5 402.8V413M587.5 402.8V412.3M588.5 403.8V409.8M589.5 405.7V409.4M590.5 405.2V409.4M591.5 391V432.5M592.5 379.2V439.4M593.5 384.2V448.1M594.5 386.7V436.8M595.5 374.9V435.8M596.5 382.9V451.4M597.5 381V442.2M598.5 387.8V425.6M599.5 388.7V441.1M600.5 367.5V448.3M601.5 370.5V434.4M602.5 370.9V437.7M603.5 384.5V425.2M604.5 371.5V434.3M605.5 374.6V442.5M606.5 385.9V425.8M607.5 387V440.1M608.5 382.2V429M609.5 382.5V443.6M610.5 381.5V455.5M611.5 374.5V455M612.5 367.7V432.5M613.5 380V453.8M614.5 369.3V446.2M615.5 382.4V436.8M616.5 383.3V426.3M617.5 378V438.5M618.5 369.3V425.3M619.5 391.1V433.6M620.5 370.4V438M621.5 373V451.2M622.5 382.5V449.1M623.5 376.3V447.2M624.5 384V449.5M625.5 383.3V448.9M626.5 377.9V450.5M627.5 386.5V449.4M628.5 372.2V432.8M629.5 377.7V445M630.5 382.7V438.6M631.5 381.7V439.5M632.5 381.9V425.9M633.5 391.1V448.8M634.5 383.6V447.5M635.5 382.1V441.3M636.5 385.6V444.8M637.5 384.6V441.6M638.5 384.7V440.1M639.5 380V438.7M640.5 384.9V423.1M641.5 385.3V433.7M642.5 376.7V428.1M643.5 375.2V441.8M644.5 388.7V423.8M645.5 385.3V445.7M646.5 381.8V439.6M647.5 380.1V445.2M648.5 393.4V427.5M649.5 375.8V432.8M650.5 392.7V439.5M651.5 374V433.6M652.5 383.4V441.7M653.5 391.4V445.2M654.5 377.7V443.4M655.5 390.9V446.8M656.5 388.4V432.2M657.5 371.5V443.1M658.5 388.7V446.3M659.5 380.6V452.3M660.5 373.6V444.7M661.5 384.3V439M662.5 374.9V455.1M663.5 375.1V439.5M664.5 372.7V436.2M665.5 369.3V453.3M666.5 382.8V429.1M667.5 369.3V457.1M668.5 380.4V450.1M669.5 353.8V436.7M670.5 346.6V455.5M671.5 381V443.2M672.5 363.8V455.9M673.5 364.9V440.4M674.5 377.1V454.7M675.5 362.2V456.5M676.5 360.6V454.7M677.5 357.3V433.9M678.5 382.8V431.7M679.5 368.4V457.1M680.5 380.4V431.2M681.5 385.1V441.9M682.5 368.2V451.5M683.5 365.1V435.7M684.5 357.8V428.1M685.5 360.2V445.5M686.5 358.4V431.9M687.5 385.4V425.9M688.5 381.2V427.2M689.5 368.1V448.1M690.5 371.9V424.8M691.5 372.8V426M692.5 370.8V443.3M693.5 368.3V433.3M694.5 366.1V428.5M695.5 385.8V429.2M696.5 377.6V433.4M697.5 375.4V442.8M698.5 385.1V436.5M699.5 371V440.7M700.5 386V444.4M701.5 370.5V423.8M702.5 358.6V442.1M703.5 354.5V442.3M704.5 381.9V438.4M705.5 382.9V439.5M706.5 369.2V436.9M707.5 381.1V428.4M708.5 381.8V428.8M709.5 385.2V428.6M710.5 384.8V455.5M711.5 356.6V446.9M712.5 357.3V452.1M713.5 355.3V435M714.5 353.8V461.7M715.5 382V454.3M716.5 363V441.1M717.5 352.7V448.6M718.5 377.7V448M719.5 378.8V432.1M720.5 377.2V433.7M721.5 381.9V443.5M722.5 362.2V438.7M723.5 362.7V447.7M724.5 347.4V435M725.5 349.5V446.1M726.5 363.3V447.9M727.5 353.2V435M728.5 359.5V444.2M729.5 363V464.6M730.5 359.4V430M731.5 378.9V443.3M732.5 363.6V455.3M733.5 356.1V434M734.5 363.1V447.4M735.5 367.4V429.2M736.5 373.9V457M737.5 374.3V455.7M738.5 383.2V432.9M739.5 363.3V448M740.5 384.7V435.2M741.5 361.8V433.7M742.5 365V457.7M743.5 367.6V430M744.5 357V456.4M745.5 371.9V435.7M746.5 385.9V436.6M747.5 360.7V442.5M748.5 355.6V429.4M749.5 369.3V450.9M750.5 378.9V453.9M751.5 356.2V453.4M752.5 364.1V444.4M753.5 366.8V427.9M754.5 367.7V441.5M755.5 385.5V445.7M756.5 365.5V437.4M757.5 389V447.8M758.5 392.9V421.9M759.5 393.3V416.3M760.5 399.9V420.4M761.5 391.7V417.2M762.5 378.2V436.7M763.5 382.7V438M764.5 377.1V439.8M765.5 378.4V450.7M766.5 372.8V445M767.5 372.5V430.9M768.5 381.9V444.7M769.5 369V442.5M770.5 379.9V448.7M771.5 370.4V445.5M772.5 373.1V431.9M773.5 371.7V457.7M774.5 367.8V444.4M775.5 358.1V445.6M776.5 361.4V461.9M777.5 362.2V433M778.5 373.6V432.8M779.5 368.5V444M780.5 359.5V435.4M781.5 368V453.2M782.5 383.2V459.5M783.5 384V446.2M784.5 363.6V432.4M785.5 357.9V460.3M786.5 361.1V440M787.5 357.1V453.9M788.5 376.3V438.5M789.5 383.9V437.8M790.5 387.9V455.3M791.5 368.2V443.9M792.5 375.8V438.8M793.5 378.7V455.4M794.5 365.8V453.7M795.5 383.7V435.2M796.5 375.7V445.2M797.5 381.7V441.8M798.5 383.5V455.4M799.5 386V426.1M800.5 367.5V444.9M801.5 371.4V440.2M802.5 388.3V442.7M803.5 390.5V436.1M804.5 373.8V424.5M805.5 394.4V434.1M806.5 376.5V438.4M807.5 393V439.7M808.5 390.8V426M809.5 383.6V444.5M810.5 379.5V436.8M811.5 370.2V436.6M812.5 382.8V444.5M813.5 383.9V440.1M814.5 384.1V426.8M815.5 374.4V453.3M816.5 364.4V465.7M817.5 362.5V448.9M818.5 361V452.6M819.5 362.3V451.4M820.5 353.7V459.4M821.5 340.9V461M822.5 363.3V450.4M823.5 352.9V449.8M824.5 366.9V448.6M825.5 360.5V449.3M826.5 364.1V447M827.5 360.5V447.2M828.5 368.6V449.5M829.5 358.7V464.9M830.5 368.2V450.4M831.5 367V463.2M832.5 367.4V460M833.5 358.6V449.6M834.5 365.5V449.1M835.5 370.5V454.6M836.5 363.3V463.8M837.5 369.5V450.6M838.5 359.1V447M839.5 355.4V456M840.5 353.6V451.1M841.5 369V452.1M842.5 355V460.6M843.5 373.6V446.5M844.5 381V440M845.5 373.7V443.6M846.5 360.9V460.6M847.5 362.5V449.8M848.5 349.5V447.4M849.5 363.1V454.6M850.5 366V462M851.5 363V452.8M852.5 351.6V452.1M853.5 351.4V455M854.5 359.7V469.4M855.5 365.9V467M856.5 360.5V449.9M857.5 355.7V453.7M858.5 359.1V450.6M859.5 366.4V465.8M860.5 356V456.8M861.5 343V460.8M862.5 354.8V459.5M863.5 348.2V455.5M864.5 341.7V452.7M865.5 346.9V467.3M866.5 359V461.5M867.5 353.6V451.5M868.5 360V457.2M869.5 340.9V470.1M870.5 361.2V461.2M871.5 359.6V456.6M872.5 362.3V468.8M873.5 357.6V471.3M874.5 359.6V461M875.5 362.6V458.3M876.5 350.2V462.7M877.5 352.7V449.6M878.5 365.9V467.2M879.5 364.5V455.5M880.5 368.7V447.3M881.5 367.9V457.2M882.5 363.6V446.3M883.5 354.5V445.7M884.5 351.5V451.5M885.5 368.4V465.5M886.5 353V457.3M887.5 348.9V467M888.5 349.1V448.4M889.5 361V453.1M890.5 350.7V452.5M891.5 365.3V460.2M892.5 365.7V456.9M893.5 364.2V455.6M894.5 356.2V447.9M895.5 356.1V448M896.5 352.8V454.2M897.5 355.8V469.4M898.5 349.1V459.8M899.5 358.8V448.3M900.5 357.2V465.6M901.5 369.5V452.1M902.5 360.2V444.3M903.5 354.7V446.8M904.5 357.8V465.7M905.5 368.1V466.1M906.5 367.3V466.2M907.5 366.2V450.9M908.5 345.5V462.4M909.5 349.7V468M910.5 358.1V446M911.5 350V444.7M912.5 363.9V455.2M913.5 352.7V460.3M914.5 372.1V444.1M915.5 363.7V442.3M916.5 368V448.9M917.5 365.9V447.8M918.5 372.4V448.3M919.5 360.7V441.8M920.5 371.4V443M921.5 370.1V461.7M922.5 358.2V457.9M923.5 368.4V453.1M924.5 356.4V449.5M925.5 366.5V451M926.5 362V456.6M927.5 357.3V444.6M928.5 400.8V415.2M929.5 404.3V409.6M930.5 404.9V411.3M931.5 406.5V409M932.5 406.1V408.5M933.5 406.5V408.7M934.5 406.1V409.2M935.5 406.5V408.5M936.5 406.5V408.5M937.5 404.5V411.3M938.5 403V410.9M939.5 399.7V410.4M940.5 400.3V412.6M941.5 403.1V412.2M942.5 398.6V414.1M943.5 404.1V409.7M944.5 406.4V408.6M945.5 404.7V409.7M946.5 404.1V409.4M947.5 405.3V408.8M948.5 404.6V408.8M949.5 405.7V408.8M950.5 404.6V408.7M951.5 404.6V410.5M952.5 406.5V409.5M953.5 406.4V408.7M954.5 405.9V408.6M955.5 406.4V410.6M956.5 395.7V412.9M957.5 401.7V415.2M958.5 397.2V420.6M959.5 396V415.5M960.5 400.4V418.9M961.5 405.3V412.5M962.5 402.7V412.9M963.5 404.1V409.2M964.5 402.6V412.4M965.5 405.8V409.1M966.5 403.5V410.1M967.5 405.2V410.4M968.5 405.3V409.5M969.5 405.9V410.1M970.5 405.8V409.6M971.5 404.2V410.8M972.5 402V409.3M973.5 401.5V414.5M974.5 400.9V421.1M975.5 398.4V426.6M976.5 384.7V415.5M977.5 391.9V426.2M978.5 391.9V429.5M979.5 400.1V417.3M980.5 403.3V414.7M981.5 401.9V413.2M982.5 402.4V409.5M983.5 403.2V409.6M984.5 405.5V410M985.5 399V427.8M986.5 392.4V419.8M987.5 395.9V416.2M988.5 398.8V421.7M989.5 396.5V434.3M990.5 386.3V432.6M991.5 397.3V416.2M992.5 402V421.2M993.5 404.8V412M994.5 403.2V413.4M995.5 398.3V417.3M996.5 399.7V415.7M997.5 385.4V424.6M998.5 378.5V419.2M999.5 376.2V444.1M1000.5 395V423.7M1001.5 375.3V451.7M1002.5 366.4V426.8M1003.5 390.5V453.8M1004.5 392.8V443.4M1005.5 378V424.7M1006.5 391.4V461.7M1007.5 382.9V423.5M1008.5 391.4V424.2M1009.5 395V432.4M1010.5 382.1V433M1011.5 388.4V421.9M1012.5 396.1V430.3M1013.5 399.1V415.2M1014.5 400V421.3M1015.5 394.4V412.5M1016.5 401.3V411.6M1017.5 402.7V410.4M1018.5 403.8V413.3M1019.5 405.7V409.1M1020.5 406V410.2M1021.5 404.9V409.1M1022.5 406.2V409M1023.5 406.2V408.5M1024.5 406.5V408.5M1025.5 406.5V408.5M1026.5 406.1V408.5M1027.5 406.3V409.1M1028.5 406.5V408.5M1029.5 406.5V409.1M1030.5 406.5V408.5M1031.5 406.5V408.5M1032.5 405.9V408.5M1033.5 406.4V408.8M1034.5 406.5V408.5M1035.5 406.5V408.5M1036.5 406.4V408.5M1037.5 406.4V408.5M1038.5 406.5V408.5M1039.5 406.5V408.5M1040.5 406.5V408.6" stroke="#ff2a2a" stroke-width="1" fill="none" shape-rendering="crispEdges"/><path d="M35.5 406.5V408.5M36.5 406.5V408.5M37.5 406.5V408.5M38.5 406.4V408.6M39.5 406.3V408.7M40.5 406.1V408.9M41.5 405.7V409.1M42.5 405.3V409.4M43.5 404.9V409.7M44.5 404.5V409.9M45.5 404.1V410.2M46.5 404.1V410.3M47.5 404V410.3M48.5 403.9V410.4M49.5 403.9V410.5M50.5 403.8V410.5M51.5 403.7V410.6M52.5 403.7V410.7M53.5 403.6V410.7M54.5 403.5V410.8M55.5 403.4V410.9M56.5 403.3V411M57.5 403.2V411.1M58.5 403V411.3M59.5 402.9V411.4M60.5 402.8V411.6M61.5 402.8V411.6M62.5 402.9V411.6M63.5 403V411.6M64.5 403V411.6M65.5 403.1V411.6M66.5 403.2V411.6M67.5 403.2V411.6M68.5 403.3V411.6M69.5 403.4V411.6M70.5 403.4V411.6M71.5 403.4V411.6M72.5 403.4V411.6M73.5 403.4V411.6M74.5 403.4V411.6M75.5 403.4V411.6M76.5 403.4V411.6M77.5 403.4V411.6M78.5 403.4V411.6M79.5 403.4V411.6M80.5 403.4V411.6M81.5 403.4V411.6M82.5 403.4V411.6M83.5 403.4V411.6M84.5 403.4V411.6M85.5 403.4V411.6M86.5 403.5V411.5M87.5 403.6V411.4M88.5 403.7V411.3M89.5 403.8V411.2M90.5 403.9V411.1M91.5 404V411M92.5 404.1V410.9M93.5 403.9V411.1M94.5 403.6V411.4M95.5 403.4V411.6M96.5 403.1V411.9M97.5 402.9V412.1M98.5 402.6V412.4M99.5 402.4V412.6M100.5 402.1V412.9M101.5 401.8V413.1M102.5 401.6V413.2M103.5 401.3V413.4M104.5 401.1V413.6M105.5 400.8V413.7M106.5 400.6V413.9M107.5 400.3V414.1M108.5 400.1V414.2M109.5 399.9V414.5M110.5 399.7V414.8M111.5 399.5V415.1M112.5 399.3V415.4M113.5 399.1V415.7M114.5 398.9V416M115.5 398.7V416.3M116.5 398.9V416.3M117.5 399V416.3M118.5 399.1V416.3M119.5 399.3V416.3M120.5 399.4V416.3M121.5 399.9V415.7M122.5 400.3V415.1M123.5 400.8V414.6M124.5 401.2V414M125.5 401.6V413.5M126.5 402.1V412.9M127.5 402.8V412.2M128.5 403.4V411.6M129.5 404.1V410.9M130.5 404.8V410.2M131.5 405.5V409.5M132.5 406.1V408.9M133.5 403.7V413M134.5 403.5V412.4M135.5 402.7V412.2M136.5 402.5V413.9M137.5 403.4V414.3M138.5 402.2V414.6M139.5 402.1V414.9M140.5 402.1V415.2M141.5 401.9V415.2M142.5 401.9V415.2M143.5 403.1V413.5M144.5 401.9V413.2M145.5 401.9V415.2M146.5 401.9V415.2M147.5 402.2V414M148.5 403V415.2M149.5 403.1V413.4M150.5 401.9V415.2M151.5 402V413.2M152.5 403.3V414.6M153.5 402.3V414.2M154.5 402.5V413.7M155.5 403.3V413.8M156.5 403.7V413.6M157.5 403.5V413.3M158.5 403V412.5M159.5 403.6V411.2M160.5 404.1V411.4M161.5 405V410.5M162.5 405.3V409.7M163.5 404.4V410.6M164.5 403.6V411.3M165.5 402.7V413.8M166.5 402.3V415.2M167.5 402.4V414.1M168.5 401.5V415.7M169.5 402.6V415.9M170.5 401.5V414.7M171.5 401V416.4M172.5 400.8V416.7M173.5 400.6V416.9M174.5 400.4V415.7M175.5 400.2V417.4M176.5 400.7V415.1M177.5 402.6V415.6M178.5 401.6V414.6M179.5 402.1V413.7M180.5 403.1V412.8M181.5 403V410.9M182.5 402.8V412.3M183.5 403.7V412.8M184.5 402.3V413.2M185.5 402.4V413.7M186.5 401.9V413.7M187.5 401.7V414.2M188.5 401.5V414.3M189.5 402.5V413.1M190.5 401.2V414.6M191.5 401V413.4M192.5 400.8V414.8M193.5 401.2V415M194.5 401.7V413.3M195.5 400.2V413.8M196.5 400.5V414.8M197.5 400.9V414.4M198.5 401.2V412.8M199.5 401.5V412.1M200.5 401.8V412.2M201.5 402.1V412.8M202.5 402.5V411.5M203.5 402.6V412.4M204.5 402.6V412.3M205.5 402.7V412.2M206.5 402.7V412.2M207.5 402.8V412.1M208.5 403.4V411.3M209.5 403.5V412M210.5 403V410.8M211.5 402.9V411M212.5 402.8V412.1M213.5 402.7V412.2M214.5 402.6V412.3M215.5 402.5V411.3M216.5 402.3V412.6M217.5 402.2V411.7M218.5 402.2V412.8M219.5 402V412.5M220.5 401.9V413M221.5 401.3V414.1M222.5 400.8V415.2M223.5 400.2V416.3M224.5 399.7V417.4M225.5 399.1V416M226.5 398.5V419.6M227.5 398.3V420.2M228.5 398.1V420.9M229.5 397.8V421.5M230.5 397.6V420.9M231.5 397.3V422.7M232.5 397.1V423.4M233.5 396.9V424M234.5 398.2V422.6M235.5 398.3V418.9M236.5 399V419.8M237.5 399.7V418.3M238.5 400.5V416.3M239.5 401.2V415.5M240.5 403.2V414.1M241.5 402.2V413.6M242.5 402.5V412.1M243.5 402.7V412.7M244.5 403.8V412.3M245.5 404.2V411.8M246.5 403.6V411.4M247.5 403.1V412.5M248.5 402.3V413.7M249.5 401.6V414.9M250.5 401V416.1M251.5 400.3V417.3M252.5 399.7V417.2M253.5 399.5V416.1M254.5 399.4V419.1M255.5 399.2V419.3M256.5 399.1V419.6M257.5 399V419.9M258.5 398.8V419.1M259.5 398.7V420.4M260.5 398.5V420.7M261.5 399.3V419.2M262.5 400V415.6M263.5 402V416.3M264.5 401.5V413.5M265.5 402.3V412.3M266.5 403V411.9M267.5 402.6V412.2M268.5 402.3V413M269.5 402.7V413.6M270.5 401.5V414.1M271.5 402.6V414.6M272.5 400.8V415.2M273.5 401.9V415.3M274.5 400.8V415.5M275.5 400.8V415.6M276.5 400.8V415.8M277.5 400.8V414M278.5 401.5V415.8M279.5 400.8V416.2M280.5 400.8V416.3M281.5 400.8V416.9M282.5 398.9V416.1M283.5 399.1V418.2M284.5 398.3V418.8M285.5 396V416.7M286.5 395V420.1M287.5 394.1V419.1M288.5 395.4V417M289.5 399.1V417.4M290.5 398.1V417.4M291.5 399.4V416.3M292.5 400.8V415.2M293.5 401.9V414.6M294.5 401.6V414.1M295.5 402V412.6M296.5 402.5V411.9M297.5 402.9V412.4M298.5 403.3V411.9M299.5 403.7V411.4M300.5 404.1V410.8M301.5 404.9V410.6M302.5 404.6V410.4M303.5 405.1V409.8M304.5 405.5V410M305.5 405.2V409.8M306.5 405.8V409.6M307.5 406V409.4M308.5 406V409.1M309.5 406V409M310.5 406.4V408.7M311.5 406.5V408.7M312.5 406.5V408.5M313.5 406.5V408.5M314.5 406.5V408.5M315.5 406.5V408.5M316.5 406.5V408.5M317.5 406.5V408.5M318.5 406.5V408.5M319.5 406.5V408.5M320.5 406.5V408.5M321.5 406.5V408.5M322.5 406.5V408.5M323.5 406.5V408.5M324.5 406.5V408.5M325.5 406.5V408.5M326.5 406.5V408.5M327.5 406.5V408.5M328.5 406.5V408.5M329.5 406.5V408.5M330.5 406.5V408.5M331.5 406.5V408.5M332.5 406.5V408.5M333.5 406.5V408.5M334.5 406.5V408.5M335.5 406.5V408.5M336.5 406.5V408.5M337.5 406.5V408.5M338.5 406.5V408.5M339.5 406.5V408.5M340.5 406.5V408.5M341.5 405.5V410.2M342.5 405V411M343.5 404.2V413.5M344.5 403.4V413.9M345.5 403.2V414.4M346.5 403.1V414.8M347.5 403.3V415.2M348.5 403.2V415.6M349.5 402.6V416.1M350.5 402.5V416.5M351.5 402.4V416.6M352.5 402.3V416.7M353.5 402.8V416.8M354.5 402.1V416.9M355.5 402V416.6M356.5 401.9V417.1M357.5 401.8V415M358.5 401.7V416M359.5 401.6V417.4M360.5 401.5V416.1M361.5 402V416.2M362.5 402.5V415.2M363.5 403V414M364.5 403.5V412.8M365.5 404V411.1M366.5 404.5V410M367.5 405V409.7M368.5 404.5V410.2M369.5 404.5V410.5M370.5 404.5V410.5M371.5 404.5V410.5M372.5 404.5V410.5M373.5 404.4V411.7M374.5 403.2V411.5M375.5 402.5V414M376.5 402.5V413.6M377.5 402.4V412.6M378.5 403.4V412.5M379.5 402.4V414.1M380.5 402.3V414.2M381.5 402.8V414.2M382.5 402.9V414.2M383.5 402.2V412.8M384.5 402.2V412.7M385.5 402.2V412.7M386.5 402.1V414.4M387.5 402.1V413.5M388.5 402.1V413.3M389.5 402.7V414.5M390.5 402V414.5M391.5 402.3V414.1M392.5 403V413.6M393.5 403.3V413.2M394.5 403.1V411.8M395.5 403.4V412M396.5 403.7V411.9M397.5 404.1V411.5M398.5 404.2V411.3M399.5 404.4V411M400.5 404.5V410.8M401.5 404.7V410.6M402.5 404.9V410M403.5 405.1V410.1M404.5 405.3V409.9M405.5 405.6V409.7M406.5 405.6V409.1M407.5 405.8V409.2M408.5 406.2V408.9M409.5 406V408.9M410.5 406V409M411.5 406.2V409M412.5 406V409M413.5 406.3V409M414.5 406V409M415.5 404.5V410.8M416.5 403V412.7M417.5 401.5V412.7M418.5 402.6V413.5M419.5 401.4V414.5M420.5 402.3V414.9M421.5 402.4V413.6M422.5 401.2V415.1M423.5 401.1V415.2M424.5 401.1V413.4M425.5 401.1V414M426.5 401.3V415.3M427.5 400.9V415.8M428.5 400.8V414.5M429.5 401.7V413.9M430.5 400.6V416.2M431.5 401.2V416.4M432.5 402.1V416.5M433.5 400.2V416.9M434.5 400V415M435.5 399.8V415.8M436.5 399.5V418M437.5 399.2V415.8M438.5 399V418.8M439.5 398.8V419.1M440.5 398.5V419.5M441.5 398.3V419.7M442.5 398.1V419.9M443.5 397.9V420.1M444.5 399.1V420.3M445.5 397.5V420.5M446.5 397.4V420.3M447.5 397.1V420.9M448.5 396.9V421.1M449.5 396.7V421.3M450.5 396.5V421.5M451.5 397.2V417.8M452.5 397.8V419.5M453.5 398.5V418.5M454.5 399.2V417.5M455.5 401.1V414.2M456.5 400.5V413.7M457.5 401.1V414.7M458.5 401.8V412.3M459.5 402.4V411.7M460.5 403.8V412M461.5 403.7V411.6M462.5 404.9V410.8M463.5 405V410M464.5 405.2V409.8M465.5 405.3V409.7M466.5 405.5V409.5M467.5 405.7V409.1M468.5 406.2V409.2M469.5 406V409M470.5 402.2V413.8M471.5 398.6V418.5M472.5 398.3V418.8M473.5 399.4V419.1M474.5 397.8V418.4M475.5 397.6V419.6M476.5 399.6V419.9M477.5 399.5V420.2M478.5 399.3V420.4M479.5 398.8V417.5M480.5 396.5V417.8M481.5 396.4V417.8M482.5 396.2V419.8M483.5 396.1V421.4M484.5 395.9V421.6M485.5 395.8V419.5M486.5 395.9V419.6M487.5 395.4V422.1M488.5 396.4V420.5M489.5 397.4V422.4M490.5 395.7V422.5M491.5 395.4V421.9M492.5 395.8V421.4M493.5 396.5V420.8M494.5 398V418.7M495.5 396.9V419.7M496.5 398.7V419.2M497.5 397.7V418.6M498.5 398.1V418.1M499.5 399.9V416.1M500.5 399.8V416M501.5 401V414.1M502.5 402.2V413M503.5 403.5V411.5M504.5 402.8V412.2M505.5 402V413M506.5 401.2V412.2M507.5 400.5V414.5M508.5 400.4V414.8M509.5 401.5V413.6M510.5 400.1V415.2M511.5 401.2V415.5M512.5 401.4V415.7M513.5 399.8V413.8M514.5 399.6V416.2M515.5 399.5V416.5M516.5 399.4V416.6M517.5 400.1V416.7M518.5 399.2V416.8M519.5 399.1V416.9M520.5 399V416.5M521.5 398.9V417.1M522.5 398.8V416.8M523.5 400.4V417.3M524.5 398.6V415.3M525.5 398.5V417.5M526.5 399.4V416.8M527.5 399.1V415.9M528.5 399.4V416.3M529.5 399.7V414.5M530.5 400V413.9M531.5 401.9V415.1M532.5 400.6V414.7M533.5 402.2V412.9M534.5 401.8V412.6M535.5 402.7V413.5M536.5 401.8V413.4M537.5 402.7V413.2M538.5 401.9V411.9M539.5 403V412.9M540.5 402.2V412.7M541.5 402.7V412.6M542.5 402.5V412.5M543.5 401.7V414.1M544.5 400.9V415.7M545.5 400.1V417.3M546.5 399.3V416.2M547.5 398.5V420.5M548.5 398.2V420.8M549.5 399.7V421M550.5 397.8V421.2M551.5 397.5V421.5M552.5 397.2V421.8M553.5 398V418.6M554.5 396.8V422.2M555.5 396.5V422.5M556.5 397.7V419M557.5 395.8V423.1M558.5 397.2V421.5M559.5 397.4V423.6M560.5 394.7V423.9M561.5 397.2V424.2M562.5 394V424.5M563.5 393.9V424.7M564.5 393.9V420.5M565.5 393.9V425.1M566.5 393.8V425.3M567.5 393.8V425.5M568.5 393.7V423.5M569.5 393.6V425.9M570.5 393.6V426.1M571.5 393.6V426.3M572.5 393.5V426.5M573.5 397V425.7M574.5 394.5V424.9M575.5 395V424.1M576.5 395.5V423.2M577.5 396V420.9M578.5 396.5V419.3M579.5 397V420.8M580.5 398.2V420M581.5 400.4V418.3M582.5 399.9V416.6M583.5 401.1V414.9M584.5 403.1V413.2M585.5 403.7V411.5M586.5 404V411M587.5 404.5V410.5M588.5 405V409.8M589.5 405.7V409.4M590.5 406V409M591.5 391.5V427.5M592.5 390.7V428.1M593.5 389.9V428.7M594.5 389.1V429.3M595.5 388.3V429.9M596.5 387.5V430.5M597.5 387.4V430.6M598.5 387.8V425.6M599.5 388.7V430.9M600.5 386.9V431.1M601.5 386.8V431.2M602.5 386.6V431.4M603.5 386.5V425.2M604.5 386.4V431.6M605.5 386.2V431.8M606.5 386.1V425.8M607.5 387V432.1M608.5 385.8V429M609.5 385.6V432.4M610.5 385.5V432.5M611.5 385.6V432.4M612.5 385.6V432.4M613.5 385.7V432.3M614.5 385.8V432.2M615.5 385.9V432.1M616.5 385.9V426.3M617.5 386V432M618.5 386.1V425.3M619.5 391.1V431.9M620.5 386.2V431.8M621.5 386.3V431.7M622.5 386.4V431.6M623.5 386.4V431.6M624.5 386.5V431.5M625.5 387.2V431.2M626.5 387.8V430.8M627.5 388.5V430.5M628.5 389.2V430.2M629.5 389.8V429.8M630.5 390.5V429.5M631.5 390.6V429.3M632.5 390.6V425.9M633.5 391.1V428.9M634.5 390.7V428.7M635.5 390.8V428.5M636.5 390.8V428.3M637.5 390.9V428.1M638.5 390.9V427.9M639.5 390.9V427.7M640.5 391V423.1M641.5 390.9V427.5M642.5 390.7V427.5M643.5 390.6V427.5M644.5 390.4V423.8M645.5 390.2V427.5M646.5 390.1V427.5M647.5 389.9V427.5M648.5 393.4V427.5M649.5 389.6V427.5M650.5 392.7V427.5M651.5 388.8V427.8M652.5 388.2V428.2M653.5 391.4V428.5M654.5 386.8V428.8M655.5 390.9V429.2M656.5 388.4V429.5M657.5 384.7V430M658.5 388.7V430.5M659.5 383V431M660.5 382.2V431.5M661.5 384.3V432M662.5 380.5V432.5M663.5 380.1V432.8M664.5 379.7V433M665.5 379.3V433.2M666.5 382.8V429.1M667.5 378.5V433.8M668.5 380.4V434M669.5 377.7V434.2M670.5 377.3V434.5M671.5 381V434.8M672.5 376.5V435M673.5 376.9V434.8M674.5 377.3V434.6M675.5 377.8V434.4M676.5 378.2V434.2M677.5 378.6V433.9M678.5 382.8V431.7M679.5 379.4V433.5M680.5 380.4V431.2M681.5 385.1V433.1M682.5 380.7V432.9M683.5 381.1V432.7M684.5 381.5V428.1M685.5 382.3V431.7M686.5 383.2V430.8M687.5 385.4V425.9M688.5 384.8V427.2M689.5 385.7V428.3M690.5 386.5V424.8M691.5 386.4V426M692.5 386.2V427.5M693.5 386.1V427.5M694.5 386V427.5M695.5 385.9V427.5M696.5 385.8V427.5M697.5 385.6V427.5M698.5 385.5V427.5M699.5 384.7V427.8M700.5 386V428.2M701.5 383V423.8M702.5 382.2V428.8M703.5 381.3V429.2M704.5 381.9V429.5M705.5 382.9V430.2M706.5 380.8V431M707.5 381.1V428.4M708.5 381.8V428.8M709.5 385.2V428.6M710.5 384.8V434M711.5 381.4V434.8M712.5 381.5V435.5M713.5 381.1V435M714.5 380.7V435.9M715.5 382V436.1M716.5 379.9V436.3M717.5 379.5V436.5M718.5 379.1V436.7M719.5 378.8V432.1M720.5 378.3V433.7M721.5 381.9V437.3M722.5 377.5V437.5M723.5 377.7V437.4M724.5 377.9V435M725.5 378.1V437.2M726.5 378.3V437.1M727.5 378.5V435M728.5 378.7V436.9M729.5 378.9V436.8M730.5 379.1V430M731.5 379.3V436.6M732.5 379.5V436.5M733.5 380V434M734.5 380.5V436M735.5 381V429.2M736.5 381.5V435.5M737.5 382V435.2M738.5 383.2V432.9M739.5 383V434.8M740.5 384.7V434.5M741.5 383.3V433.7M742.5 383.1V434.3M743.5 382.9V430M744.5 382.7V434.1M745.5 382.5V434M746.5 385.9V433.9M747.5 382.1V433.8M748.5 381.9V429.4M749.5 381.7V433.6M750.5 381.5V433.5M751.5 382.2V433.1M752.5 382.9V432.6M753.5 383.6V427.9M754.5 384.4V431.8M755.5 385.5V431.4M756.5 385.8V430.9M757.5 389V430.5M758.5 393V421.9M759.5 399.5V415.5M760.5 399.9V415.5M761.5 399.5V415.5M762.5 392.5V423.5M763.5 385.5V431.5M764.5 385.2V431.8M765.5 384.8V432.2M766.5 384.5V432.5M767.5 384.2V430.9M768.5 383.8V433.2M769.5 383.5V433.5M770.5 383.2V433.8M771.5 382.8V434.2M772.5 382.5V431.9M773.5 382.2V434.8M774.5 381.8V435.2M775.5 381.5V435.5M776.5 381.6V435.6M777.5 381.6V433M778.5 381.7V432.8M779.5 381.8V435.8M780.5 381.8V435.4M781.5 381.9V435.9M782.5 383.2V436M783.5 384V436M784.5 382.1V432.4M785.5 382.2V436.2M786.5 382.2V436.2M787.5 382.3V436.3M788.5 382.4V436.4M789.5 383.9V436.4M790.5 387.9V436.5M791.5 382.9V436.1M792.5 383.3V435.7M793.5 383.7V435.3M794.5 384.1V434.9M795.5 384.5V434.5M796.5 384.9V434.1M797.5 385.3V433.7M798.5 385.7V433.3M799.5 386.1V426.1M800.5 386.5V432.5M801.5 387.2V431.7M802.5 388.3V430.8M803.5 390.5V430M804.5 389.2V424.5M805.5 394.4V428.3M806.5 390.5V427.5M807.5 393V427.6M808.5 390.8V426M809.5 389.4V427.9M810.5 389V428M811.5 388.6V428.1M812.5 388.2V428.2M813.5 387.9V428.4M814.5 387.5V426.8M815.5 382V433.5M816.5 376.5V438.5M817.5 375.9V439.1M818.5 375.2V439.8M819.5 374.6V440.4M820.5 374V441M821.5 374.8V440.6M822.5 375.5V440.2M823.5 376.2V439.8M824.5 377V439.3M825.5 377.8V438.9M826.5 378.5V438.5M827.5 378.6V438.6M828.5 378.7V438.7M829.5 378.8V438.8M830.5 378.9V438.9M831.5 379.1V439.1M832.5 379.2V439.2M833.5 379.3V439.3M834.5 379.4V439.4M835.5 379.5V439.5M836.5 379.9V439.2M837.5 380.2V439M838.5 380.6V438.8M839.5 381V438.5M840.5 381.4V438.2M841.5 381.8V438M842.5 382.1V437.8M843.5 382.5V437.5M844.5 389.5V432.5M845.5 384.5V435M846.5 379.5V437.5M847.5 379.2V437.7M848.5 378.9V437.9M849.5 378.7V438.2M850.5 378.4V438.4M851.5 378.1V438.6M852.5 377.8V438.8M853.5 377.6V439.1M854.5 377.3V439.3M855.5 377V439.5M856.5 376.9V439.6M857.5 376.7V439.7M858.5 376.6V439.8M859.5 376.4V439.9M860.5 376.2V440M861.5 376.1V440.1M862.5 375.9V440.2M863.5 375.8V440.3M864.5 375.6V440.4M865.5 375.5V440.5M866.5 375.4V440.5M867.5 375.2V440.5M868.5 375.1V440.5M869.5 374.9V440.5M870.5 374.8V440.5M871.5 374.6V440.5M872.5 374.4V440.5M873.5 374.3V440.5M874.5 374.1V440.5M875.5 374V440.5M876.5 374.9V439.7M877.5 375.8V438.9M878.5 376.7V438.1M879.5 377.6V437.3M880.5 378.5V436.5M881.5 378.5V436.7M882.5 378.5V436.9M883.5 378.5V437.1M884.5 378.5V437.3M885.5 378.5V437.5M886.5 378.5V437.7M887.5 378.5V437.9M888.5 378.5V438.1M889.5 378.5V438.3M890.5 378.5V438.5M891.5 378.1V438.7M892.5 377.7V438.9M893.5 377.3V439.1M894.5 376.9V439.3M895.5 376.5V439.5M896.5 377V439.1M897.5 377.5V438.6M898.5 378V438.2M899.5 378.5V437.8M900.5 379V437.4M901.5 379.5V436.9M902.5 380V436.5M903.5 379.2V436.8M904.5 378.5V437.2M905.5 377.8V437.5M906.5 377V437.8M907.5 376.2V438.2M908.5 375.5V438.5M909.5 376.5V437.8M910.5 377.5V437.2M911.5 378.5V436.5M912.5 379.5V435.8M913.5 380.5V435.2M914.5 381.5V434.5M915.5 381.6V434.5M916.5 381.8V434.5M917.5 381.9V434.5M918.5 382V434.5M919.5 382.1V434.5M920.5 382.2V434.5M921.5 382.4V434.5M922.5 382.5V434.5M923.5 382.5V434.3M924.5 382.5V434.1M925.5 382.5V433.9M926.5 382.5V433.7M927.5 382.5V433.5M928.5 402.5V411.5M929.5 404.3V409.6M930.5 404.9V409.8M931.5 406.5V409M932.5 406.2V408.5M933.5 406.5V408.6M934.5 406.5V408.5M935.5 406.5V408.5M936.5 406.5V408.5M937.5 404.5V411.3M938.5 403V410.9M939.5 402.6V410.4M940.5 402.4V412M941.5 403.1V412M942.5 402V412M943.5 404.1V409.7M944.5 406.4V408.6M945.5 406V409M946.5 406V409M947.5 406V408.8M948.5 406V408.8M949.5 406V408.8M950.5 406V408.7M951.5 406V409M952.5 406.5V409M953.5 406.4V408.7M954.5 406V408.6M955.5 406.4V409M956.5 399.5V412.9M957.5 401.7V415.2M958.5 398.2V416.2M959.5 397.5V415.5M960.5 401.2V413.2M961.5 405.3V410M962.5 405V410M963.5 405V409.2M964.5 405V410M965.5 405.8V409.1M966.5 405V410M967.5 405.2V410M968.5 405.3V409.5M969.5 405.9V410M970.5 405.8V409.6M971.5 405V410M972.5 405V409.3M973.5 401.5V414.5M974.5 400.9V419M975.5 398.4V419.5M976.5 397.3V415.5M977.5 396.9V420.5M978.5 396.5V421M979.5 400.1V417.3M980.5 403.3V414M981.5 404.5V410.5M982.5 404.5V409.5M983.5 404.5V409.6M984.5 405.5V410M985.5 399V418.5M986.5 396.7V419.3M987.5 395.9V416.2M988.5 398.8V420.9M989.5 396.5V421.7M990.5 393.5V422.5M991.5 397.3V416.2M992.5 402V415.8M993.5 404.8V412M994.5 403.2V413.4M995.5 399.5V417.3M996.5 399.7V415.7M997.5 395.8V421.9M998.5 394V419.2M999.5 392.2V425.6M1000.5 395V423.7M1001.5 389.7V428.8M1002.5 388.9V426.8M1003.5 390.5V431.4M1004.5 392.8V432.7M1005.5 386.5V424.7M1006.5 391.4V432.9M1007.5 388.5V423.5M1008.5 391.4V424.2M1009.5 395V429.6M1010.5 391.5V428.5M1011.5 393.8V421.9M1012.5 396.1V422.5M1013.5 399.1V415.2M1014.5 400.5V416.5M1015.5 401.5V412.5M1016.5 402.5V411.6M1017.5 403.5V410.4M1018.5 404.5V410.5M1019.5 405.7V409.1M1020.5 406V409.5M1021.5 406V409M1022.5 406.5V408.5M1023.5 406.5V408.5M1024.5 406.5V408.5M1025.5 406.5V408.5M1026.5 406.5V408.5M1027.5 406.5V408.5M1028.5 406.5V408.5M1029.5 406.5V408.5M1030.5 406.5V408.5M1031.5 406.5V408.5M1032.5 406.5V408.5M1033.5 406.5V408.5M1034.5 406.5V408.5M1035.5 406.5V408.5M1036.5 406.5V408.5M1037.5 406.5V408.5M1038.5 406.5V408.5M1039.5 406.5V408.5M1040.5 406.5V408.5" stroke="#fc1010" stroke-width="1" fill="none" shape-rendering="crispEdges"/><path d="M35.5 406.5V408.5M36.5 406.5V408.5M37.5 406.5V408.5M38.5 406.5V408.5M39.5 406.5V408.5M40.5 406.5V408.5M41.5 406.5V408.5M42.5 406.5V408.5M43.5 406.5V408.5M44.5 406.5V408.5M45.5 406.5V408.5M46.5 406.5V408.5M47.5 406.5V408.5M48.5 406.5V408.5M49.5 406.5V408.5M50.5 406.5V408.5M51.5 406.5V408.5M52.5 406.5V408.5M53.5 406.5V408.5M54.5 406.5V408.5M55.5 406.5V408.5M56.5 406.5V408.5M57.5 406.5V408.5M58.5 406.5V408.5M59.5 406.5V408.5M60.5 406.5V408.5M61.5 406.5V408.5M62.5 406.5V408.5M63.5 406.5V408.5M64.5 406.5V408.5M65.5 406.5V408.5M66.5 406.5V408.5M67.5 406.5V408.5M68.5 406.5V408.5M69.5 406.5V408.5M70.5 406.5V408.5M71.5 406.5V408.5M72.5 406.5V408.5M73.5 406.5V408.5M74.5 406.5V408.5M75.5 406.5V408.5M76.5 406.5V408.5M77.5 406.5V408.5M78.5 406.5V408.5M79.5 406.5V408.5M80.5 406.5V408.5M81.5 406.5V408.5M82.5 406.5V408.5M83.5 406.5V408.5M84.5 406.5V408.5M85.5 406.5V408.5M86.5 406.5V408.5M87.5 406.5V408.5M88.5 406.5V408.5M89.5 406.5V408.5M90.5 406.5V408.5M91.5 406.5V408.5M92.5 406.5V408.5M93.5 406.5V408.5M94.5 406.5V408.5M95.5 406.5V408.5M96.5 406.5V408.5M97.5 406.5V408.5M98.5 406.5V408.5M99.5 406.5V408.5M100.5 406.5V408.5M101.5 406.5V408.5M102.5 406.4V408.5M103.5 406.4V408.6M104.5 406.3V408.6M105.5 406.3V408.6M106.5 406.3V408.7M107.5 406.2V408.7M108.5 406.2V408.7M109.5 406.1V408.8M110.5 406.1V408.8M111.5 406.1V408.9M112.5 406V408.9M113.5 406V409M114.5 406V409M115.5 405.9V409.1M116.5 405.9V409.1M117.5 406V409.1M118.5 406V409.1M119.5 406V409.1M120.5 406V409.1M121.5 406.1V409M122.5 406.2V408.9M123.5 406.3V408.8M124.5 406.4V408.7M125.5 406.4V408.6M126.5 406.5V408.5M127.5 406.5V408.5M128.5 406.5V408.5M129.5 406.5V408.5M130.5 406.5V408.5M131.5 406.5V408.5M132.5 406.5V408.5M133.5 406.5V408.5M134.5 406.5V408.5M135.5 406.5V408.6M136.5 406.5V408.7M137.5 406.5V408.7M138.5 406.5V408.8M139.5 406.5V408.8M140.5 406.5V408.9M141.5 406.5V408.9M142.5 406.5V408.9M143.5 406.5V408.9M144.5 406.5V408.9M145.5 406.5V408.9M146.5 406.5V408.9M147.5 406.5V408.9M148.5 406.5V408.9M149.5 406.5V408.9M150.5 406.5V408.9M151.5 406.5V408.8M152.5 406.5V408.8M153.5 406.5V408.7M154.5 406.5V408.7M155.5 406.5V408.6M156.5 406.5V408.6M157.5 406.5V408.5M158.5 406.5V408.5M159.5 406.5V408.5M160.5 406.5V408.5M161.5 406.5V408.5M162.5 406.5V408.5M163.5 406.5V408.5M164.5 406.5V408.5M165.5 406.5V408.6M166.5 406.5V408.9M167.5 406.5V408.9M168.5 406.4V409M169.5 406.4V409M170.5 406.4V409.1M171.5 406.3V409.1M172.5 406.3V409.1M173.5 406.3V409.2M174.5 406.2V409.2M175.5 406.2V409.3M176.5 406.3V409.1M177.5 406.4V409M178.5 406.4V408.8M179.5 406.5V408.6M180.5 406.5V408.5M181.5 406.5V408.5M182.5 406.5V408.5M183.5 406.5V408.5M184.5 406.5V408.5M185.5 406.5V408.6M186.5 406.5V408.7M187.5 406.5V408.7M188.5 406.4V408.7M189.5 406.4V408.8M190.5 406.4V408.8M191.5 406.3V408.8M192.5 406.3V408.8M193.5 406.3V408.8M194.5 406.2V408.9M195.5 406.2V408.9M196.5 406.2V408.8M197.5 406.3V408.7M198.5 406.4V408.7M199.5 406.4V408.6M200.5 406.5V408.5M201.5 406.5V408.5M202.5 406.5V408.5M203.5 406.5V408.5M204.5 406.5V408.5M205.5 406.5V408.5M206.5 406.5V408.5M207.5 406.5V408.5M208.5 406.5V408.5M209.5 406.5V408.5M210.5 406.5V408.5M211.5 406.5V408.5M212.5 406.5V408.5M213.5 406.5V408.5M214.5 406.5V408.5M215.5 406.5V408.5M216.5 406.5V408.5M217.5 406.5V408.5M218.5 406.5V408.5M219.5 406.5V408.5M220.5 406.5V408.5M221.5 406.4V408.7M222.5 406.3V408.9M223.5 406.2V409.1M224.5 406.1V409.3M225.5 406V409.5M226.5 405.9V409.7M227.5 405.8V409.8M228.5 405.8V409.9M229.5 405.8V410M230.5 405.7V410.1M231.5 405.7V410.2M232.5 405.6V410.4M233.5 405.6V410.5M234.5 405.7V410.2M235.5 405.8V410M236.5 406V409.7M237.5 406.1V409.5M238.5 406.2V409.2M239.5 406.4V408.9M240.5 406.5V408.7M241.5 406.5V408.6M242.5 406.5V408.5M243.5 406.5V408.5M244.5 406.5V408.5M245.5 406.5V408.5M246.5 406.5V408.5M247.5 406.5V408.5M248.5 406.5V408.6M249.5 406.4V408.8M250.5 406.3V409.1M251.5 406.2V409.3M252.5 406.1V409.5M253.5 406.1V409.5M254.5 406V409.6M255.5 406V409.6M256.5 406V409.7M257.5 406V409.7M258.5 405.9V409.8M259.5 405.9V409.8M260.5 405.9V409.9M261.5 406V409.6M262.5 406.2V409.3M263.5 406.3V409.1M264.5 406.4V408.8M265.5 406.5V408.6M266.5 406.5V408.5M267.5 406.5V408.5M268.5 406.5V408.5M269.5 406.5V408.6M270.5 406.4V408.7M271.5 406.4V408.8M272.5 406.3V408.9M273.5 406.3V408.9M274.5 406.3V408.9M275.5 406.3V409M276.5 406.3V409M277.5 406.3V409M278.5 406.3V409M279.5 406.3V409.1M280.5 406.3V409.1M281.5 406.1V409.2M282.5 405.9V409.3M283.5 405.8V409.4M284.5 405.6V409.5M285.5 405.4V409.6M286.5 405.3V409.8M287.5 405.1V409.9M288.5 405.3V409.7M289.5 405.6V409.5M290.5 405.8V409.3M291.5 406V409.1M292.5 406.3V408.9M293.5 406.4V408.8M294.5 406.4V408.7M295.5 406.5V408.6M296.5 406.5V408.5M297.5 406.5V408.5M298.5 406.5V408.5M299.5 406.5V408.5M300.5 406.5V408.5M301.5 406.5V408.5M302.5 406.5V408.5M303.5 406.5V408.5M304.5 406.5V408.5M305.5 406.5V408.5M306.5 406.5V408.5M307.5 406.5V408.5M308.5 406.5V408.5M309.5 406.5V408.5M310.5 406.5V408.5M311.5 406.5V408.5M312.5 406.5V408.5M313.5 406.5V408.5M314.5 406.5V408.5M315.5 406.5V408.5M316.5 406.5V408.5M317.5 406.5V408.5M318.5 406.5V408.5M319.5 406.5V408.5M320.5 406.5V408.5M321.5 406.5V408.5M322.5 406.5V408.5M323.5 406.5V408.5M324.5 406.5V408.5M325.5 406.5V408.5M326.5 406.5V408.5M327.5 406.5V408.5M328.5 406.5V408.5M329.5 406.5V408.5M330.5 406.5V408.5M331.5 406.5V408.5M332.5 406.5V408.5M333.5 406.5V408.5M334.5 406.5V408.5M335.5 406.5V408.5M336.5 406.5V408.5M337.5 406.5V408.5M338.5 406.5V408.5M339.5 406.5V408.5M340.5 406.5V408.5M341.5 406.5V408.5M342.5 406.5V408.5M343.5 406.5V408.6M344.5 406.5V408.7M345.5 406.5V408.7M346.5 406.5V408.8M347.5 406.5V408.9M348.5 406.5V409M349.5 406.5V409M350.5 406.5V409.1M351.5 406.5V409.1M352.5 406.5V409.2M353.5 406.5V409.2M354.5 406.5V409.2M355.5 406.5V409.2M356.5 406.5V409.2M357.5 406.5V409.2M358.5 406.5V409.3M359.5 406.4V409.3M360.5 406.4V409.3M361.5 406.5V409.1M362.5 406.5V408.9M363.5 406.5V408.7M364.5 406.5V408.5M365.5 406.5V408.5M366.5 406.5V408.5M367.5 406.5V408.5M368.5 406.5V408.5M369.5 406.5V408.5M370.5 406.5V408.5M371.5 406.5V408.5M372.5 406.5V408.5M373.5 406.5V408.5M374.5 406.5V408.5M375.5 406.5V408.7M376.5 406.5V408.7M377.5 406.5V408.7M378.5 406.5V408.7M379.5 406.5V408.7M380.5 406.5V408.7M381.5 406.5V408.7M382.5 406.5V408.7M383.5 406.5V408.7M384.5 406.5V408.7M385.5 406.5V408.7M386.5 406.5V408.7M387.5 406.5V408.7M388.5 406.5V408.7M389.5 406.5V408.8M390.5 406.5V408.8M391.5 406.5V408.7M392.5 406.5V408.6M393.5 406.5V408.5M394.5 406.5V408.5M395.5 406.5V408.5M396.5 406.5V408.5M397.5 406.5V408.5M398.5 406.5V408.5M399.5 406.5V408.5M400.5 406.5V408.5M401.5 406.5V408.5M402.5 406.5V408.5M403.5 406.5V408.5M404.5 406.5V408.5M405.5 406.5V408.5M406.5 406.5V408.5M407.5 406.5V408.5M408.5 406.5V408.5M409.5 406.5V408.5M410.5 406.5V408.5M411.5 406.5V408.5M412.5 406.5V408.5M413.5 406.5V408.5M414.5 406.5V408.5M415.5 406.5V408.5M416.5 406.5V408.5M417.5 406.4V408.8M418.5 406.4V408.8M419.5 406.4V408.8M420.5 406.4V408.8M421.5 406.4V408.9M422.5 406.4V408.9M423.5 406.4V408.9M424.5 406.3V408.9M425.5 406.3V408.9M426.5 406.3V409M427.5 406.3V409M428.5 406.3V409M429.5 406.3V409M430.5 406.3V409.1M431.5 406.3V409.1M432.5 406.2V409.1M433.5 406.2V409.2M434.5 406.1V409.3M435.5 406.1V409.3M436.5 406.1V409.4M437.5 406V409.5M438.5 406V409.5M439.5 405.9V409.6M440.5 405.9V409.7M441.5 405.8V409.7M442.5 405.8V409.7M443.5 405.8V409.8M444.5 405.7V409.8M445.5 405.7V409.8M446.5 405.7V409.9M447.5 405.6V409.9M448.5 405.6V409.9M449.5 405.6V410M450.5 405.5V410M451.5 405.6V409.8M452.5 405.8V409.7M453.5 405.9V409.5M454.5 406V409.3M455.5 406.1V409.1M456.5 406.2V408.9M457.5 406.4V408.8M458.5 406.5V408.7M459.5 406.5V408.5M460.5 406.5V408.5M461.5 406.5V408.5M462.5 406.5V408.5M463.5 406.5V408.5M464.5 406.5V408.5M465.5 406.5V408.5M466.5 406.5V408.5M467.5 406.5V408.5M468.5 406.5V408.5M469.5 406.5V408.5M470.5 406.5V408.6M471.5 405.9V409.5M472.5 405.8V409.5M473.5 405.8V409.6M474.5 405.8V409.6M475.5 405.7V409.7M476.5 405.7V409.7M477.5 405.6V409.8M478.5 405.6V409.8M479.5 405.6V409.9M480.5 405.5V409.9M481.5 405.5V410M482.5 405.5V410M483.5 405.4V410M484.5 405.4V410M485.5 405.4V410.1M486.5 405.4V410.1M487.5 405.3V410.1M488.5 405.3V410.1M489.5 405.3V410.2M490.5 405.2V410.2M491.5 405.3V410.1M492.5 405.4V410M493.5 405.5V409.9M494.5 405.5V409.8M495.5 405.6V409.7M496.5 405.7V409.6M497.5 405.7V409.5M498.5 405.8V409.4M499.5 405.9V409.3M500.5 406.1V409M501.5 406.3V408.8M502.5 406.5V408.5M503.5 406.5V408.5M504.5 406.5V408.5M505.5 406.5V408.5M506.5 406.4V408.6M507.5 406.2V408.8M508.5 406.2V408.8M509.5 406.2V408.9M510.5 406.2V408.9M511.5 406.1V408.9M512.5 406.1V409M513.5 406.1V409M514.5 406.1V409.1M515.5 406.1V409.1M516.5 406V409.1M517.5 406V409.2M518.5 406V409.2M519.5 406V409.2M520.5 406V409.2M521.5 406V409.2M522.5 405.9V409.2M523.5 405.9V409.3M524.5 405.9V409.3M525.5 405.9V409.3M526.5 405.9V409.2M527.5 406V409.2M528.5 406V409.1M529.5 406.1V409M530.5 406.1V408.9M531.5 406.2V408.9M532.5 406.3V408.8M533.5 406.3V408.7M534.5 406.4V408.7M535.5 406.4V408.6M536.5 406.4V408.6M537.5 406.5V408.5M538.5 406.5V408.5M539.5 406.5V408.5M540.5 406.5V408.5M541.5 406.5V408.5M542.5 406.5V408.5M543.5 406.5V408.7M544.5 406.3V409M545.5 406.2V409.3M546.5 406V409.6M547.5 405.9V409.8M548.5 405.8V409.9M549.5 405.8V409.9M550.5 405.7V410M551.5 405.7V410M552.5 405.7V410.1M553.5 405.6V410.1M554.5 405.6V410.2M555.5 405.5V410.2M556.5 405.5V410.3M557.5 405.4V410.3M558.5 405.3V410.4M559.5 405.3V410.4M560.5 405.2V410.5M561.5 405.1V410.5M562.5 405.1V410.6M563.5 405.1V410.6M564.5 405.1V410.6M565.5 405V410.7M566.5 405V410.7M567.5 405V410.7M568.5 405V410.8M569.5 405V410.8M570.5 405V410.8M571.5 405V410.9M572.5 405V410.9M573.5 405.1V410.8M574.5 405.2V410.6M575.5 405.2V410.5M576.5 405.3V410.3M577.5 405.4V410.2M578.5 405.5V410M579.5 405.6V409.9M580.5 405.7V409.8M581.5 405.9V409.4M582.5 406.1V409.1M583.5 406.3V408.8M584.5 406.5V408.5M585.5 406.5V408.5M586.5 406.5V408.5M587.5 406.5V408.5M588.5 406.5V408.5M589.5 406.5V408.5M590.5 406.5V408.5M591.5 404.6V411.1M592.5 404.5V411.2M593.5 404.3V411.3M594.5 404.2V411.4M595.5 404V411.5M596.5 403.9V411.6M597.5 403.9V411.7M598.5 403.8V411.7M599.5 403.8V411.7M600.5 403.8V411.7M601.5 403.8V411.8M602.5 403.7V411.8M603.5 403.7V411.8M604.5 403.7V411.8M605.5 403.7V411.9M606.5 403.6V411.9M607.5 403.6V411.9M608.5 403.6V411.9M609.5 403.6V412M610.5 403.5V412M611.5 403.6V412M612.5 403.6V412M613.5 403.6V412M614.5 403.6V411.9M615.5 403.6V411.9M616.5 403.6V411.9M617.5 403.6V411.9M618.5 403.6V411.9M619.5 403.7V411.9M620.5 403.7V411.9M621.5 403.7V411.9M622.5 403.7V411.8M623.5 403.7V411.8M624.5 403.7V411.8M625.5 403.8V411.8M626.5 404V411.7M627.5 404.1V411.6M628.5 404.2V411.6M629.5 404.3V411.5M630.5 404.4V411.5M631.5 404.4V411.4M632.5 404.5V411.4M633.5 404.5V411.4M634.5 404.5V411.3M635.5 404.5V411.3M636.5 404.5V411.2M637.5 404.5V411.2M638.5 404.5V411.2M639.5 404.5V411.1M640.5 404.5V411.1M641.5 404.5V411.1M642.5 404.5V411.1M643.5 404.4V411.1M644.5 404.4V411.1M645.5 404.4V411.1M646.5 404.4V411.1M647.5 404.3V411.1M648.5 404.3V411.1M649.5 404.3V411.1M650.5 404.3V411.1M651.5 404.1V411.2M652.5 404V411.2M653.5 403.9V411.3M654.5 403.8V411.3M655.5 403.7V411.4M656.5 403.5V411.5M657.5 403.4V411.6M658.5 403.2V411.6M659.5 403.1V411.7M660.5 402.9V411.8M661.5 402.8V411.9M662.5 402.6V412M663.5 402.6V412M664.5 402.5V412.1M665.5 402.4V412.1M666.5 402.4V412.2M667.5 402.3V412.2M668.5 402.2V412.3M669.5 402.1V412.3M670.5 402.1V412.4M671.5 402V412.4M672.5 401.9V412.4M673.5 402V412.4M674.5 402.1V412.4M675.5 402.1V412.3M676.5 402.2V412.3M677.5 402.3V412.3M678.5 402.4V412.2M679.5 402.4V412.2M680.5 402.5V412.1M681.5 402.6V412.1M682.5 402.7V412.1M683.5 402.7V412M684.5 402.8V412M685.5 403V411.9M686.5 403.1V411.7M687.5 403.3V411.6M688.5 403.4V411.4M689.5 403.6V411.2M690.5 403.7V411.1M691.5 403.7V411.1M692.5 403.7V411.1M693.5 403.7V411.1M694.5 403.6V411.1M695.5 403.6V411.1M696.5 403.6V411.1M697.5 403.6V411.1M698.5 403.5V411.1M699.5 403.4V411.2M700.5 403.2V411.2M701.5 403.1V411.3M702.5 402.9V411.3M703.5 402.8V411.4M704.5 402.6V411.5M705.5 402.7V411.6M706.5 402.7V411.7M707.5 402.7V411.9M708.5 402.7V412M709.5 402.8V412.1M710.5 402.8V412.3M711.5 402.8V412.4M712.5 402.8V412.5M713.5 402.7V412.6M714.5 402.7V412.6M715.5 402.6V412.6M716.5 402.5V412.7M717.5 402.5V412.7M718.5 402.4V412.8M719.5 402.3V412.8M720.5 402.2V412.8M721.5 402.2V412.9M722.5 402.1V412.9M723.5 402.1V412.9M724.5 402.2V412.9M725.5 402.2V412.8M726.5 402.2V412.8M727.5 402.3V412.8M728.5 402.3V412.8M729.5 402.4V412.8M730.5 402.4V412.8M731.5 402.4V412.7M732.5 402.5V412.7M733.5 402.6V412.7M734.5 402.6V412.6M735.5 402.7V412.6M736.5 402.8V412.5M737.5 402.9V412.5M738.5 403V412.4M739.5 403.1V412.4M740.5 403.2V412.4M741.5 403.1V412.3M742.5 403.1V412.3M743.5 403.1V412.3M744.5 403V412.3M745.5 403V412.3M746.5 403V412.3M747.5 402.9V412.2M748.5 402.9V412.2M749.5 402.9V412.2M750.5 402.8V412.2M751.5 402.9V412.1M752.5 403.1V412M753.5 403.2V411.9M754.5 403.3V411.9M755.5 403.5V411.8M756.5 403.6V411.7M757.5 403.7V411.6M758.5 404.9V410.3M759.5 406.1V408.9M760.5 406.1V408.9M761.5 406.1V408.9M762.5 404.8V410.4M763.5 403.5V411.8M764.5 403.5V411.9M765.5 403.4V411.9M766.5 403.4V412M767.5 403.3V412.1M768.5 403.2V412.1M769.5 403.2V412.2M770.5 403.1V412.2M771.5 403.1V412.3M772.5 403V412.4M773.5 402.9V412.4M774.5 402.9V412.5M775.5 402.8V412.5M776.5 402.8V412.6M777.5 402.8V412.6M778.5 402.9V412.6M779.5 402.9V412.6M780.5 402.9V412.6M781.5 402.9V412.6M782.5 402.9V412.6M783.5 402.9V412.6M784.5 402.9V412.6M785.5 402.9V412.7M786.5 403V412.7M787.5 403V412.7M788.5 403V412.7M789.5 403V412.7M790.5 403V412.7M791.5 403.1V412.6M792.5 403.1V412.6M793.5 403.2V412.5M794.5 403.3V412.4M795.5 403.4V412.4M796.5 403.4V412.3M797.5 403.5V412.2M798.5 403.6V412.1M799.5 403.6V412.1M800.5 403.7V412M801.5 403.8V411.9M802.5 404V411.7M803.5 404.1V411.6M804.5 404.2V411.4M805.5 404.3V411.2M806.5 404.4V411.1M807.5 404.4V411.1M808.5 404.3V411.1M809.5 404.2V411.2M810.5 404.2V411.2M811.5 404.1V411.2M812.5 404V411.2M813.5 404V411.3M814.5 403.9V411.3M815.5 402.9V412.2M816.5 401.9V413.1M817.5 401.8V413.2M818.5 401.7V413.3M819.5 401.6V413.4M820.5 401.5V413.5M821.5 401.6V413.5M822.5 401.7V413.4M823.5 401.9V413.3M824.5 402V413.2M825.5 402.1V413.2M826.5 402.3V413.1M827.5 402.3V413.1M828.5 402.3V413.1M829.5 402.3V413.1M830.5 402.4V413.2M831.5 402.4V413.2M832.5 402.4V413.2M833.5 402.4V413.2M834.5 402.4V413.2M835.5 402.5V413.3M836.5 402.5V413.2M837.5 402.6V413.2M838.5 402.7V413.1M839.5 402.7V413.1M840.5 402.8V413M841.5 402.9V413M842.5 402.9V412.9M843.5 403V412.9M844.5 404.3V412M845.5 403.4V412.4M846.5 402.5V412.9M847.5 402.4V412.9M848.5 402.4V413M849.5 402.3V413M850.5 402.3V413.1M851.5 402.2V413.1M852.5 402.2V413.1M853.5 402.1V413.2M854.5 402.1V413.2M855.5 402V413.3M856.5 402V413.3M857.5 402V413.3M858.5 401.9V413.3M859.5 401.9V413.3M860.5 401.9V413.4M861.5 401.8V413.4M862.5 401.8V413.4M863.5 401.8V413.4M864.5 401.8V413.4M865.5 401.7V413.4M866.5 401.7V413.4M867.5 401.7V413.4M868.5 401.7V413.4M869.5 401.6V413.4M870.5 401.6V413.4M871.5 401.6V413.4M872.5 401.6V413.4M873.5 401.5V413.4M874.5 401.5V413.4M875.5 401.5V413.4M876.5 401.6V413.3M877.5 401.8V413.2M878.5 402V413M879.5 402.1V412.9M880.5 402.3V412.7M881.5 402.3V412.8M882.5 402.3V412.8M883.5 402.3V412.8M884.5 402.3V412.9M885.5 402.3V412.9M886.5 402.3V412.9M887.5 402.3V413M888.5 402.3V413M889.5 402.3V413M890.5 402.3V413.1M891.5 402.2V413.1M892.5 402.1V413.2M893.5 402.1V413.2M894.5 402V413.2M895.5 401.9V413.3M896.5 402V413.2M897.5 402.1V413.1M898.5 402.2V413M899.5 402.3V413M900.5 402.4V412.9M901.5 402.5V412.8M902.5 402.6V412.7M903.5 402.4V412.8M904.5 402.3V412.8M905.5 402.1V412.9M906.5 402V413M907.5 401.9V413M908.5 401.7V413.1M909.5 401.9V413M910.5 402.1V412.8M911.5 402.3V412.7M912.5 402.5V412.6M913.5 402.6V412.5M914.5 402.8V412.4M915.5 402.8V412.4M916.5 402.9V412.4M917.5 402.9V412.4M918.5 402.9V412.4M919.5 402.9V412.4M920.5 403V412.4M921.5 403V412.4M922.5 403V412.4M923.5 403V412.3M924.5 403V412.3M925.5 403V412.3M926.5 403V412.2M927.5 403V412.2M928.5 406.5V408.5M929.5 406.5V408.5M930.5 406.5V408.5M931.5 406.5V408.5M932.5 406.5V408.5M933.5 406.5V408.5M934.5 406.5V408.5M935.5 406.5V408.5M936.5 406.5V408.5M937.5 406.5V408.5M938.5 406.5V408.5M939.5 406.5V408.5M940.5 406.5V408.5M941.5 406.5V408.5M942.5 406.5V408.5M943.5 406.5V408.5M944.5 406.5V408.5M945.5 406.5V408.5M946.5 406.5V408.5M947.5 406.5V408.5M948.5 406.5V408.5M949.5 406.5V408.5M950.5 406.5V408.5M951.5 406.5V408.5M952.5 406.5V408.5M953.5 406.5V408.5M954.5 406.5V408.5M955.5 406.5V408.5M956.5 406.1V408.9M957.5 405.9V409M958.5 405.8V409.1M959.5 405.7V409.1M960.5 406.4V408.5M961.5 406.5V408.5M962.5 406.5V408.5M963.5 406.5V408.5M964.5 406.5V408.5M965.5 406.5V408.5M966.5 406.5V408.5M967.5 406.5V408.5M968.5 406.5V408.5M969.5 406.5V408.5M970.5 406.5V408.5M971.5 406.5V408.5M972.5 406.5V408.5M973.5 405.9V409.5M974.5 405.8V409.6M975.5 405.7V409.7M976.5 405.7V409.8M977.5 405.6V409.8M978.5 405.5V409.9M979.5 406V409.3M980.5 406.5V408.7M981.5 406.5V408.5M982.5 406.5V408.5M983.5 406.5V408.5M984.5 406.5V408.5M985.5 405.7V409.5M986.5 405.6V409.6M987.5 405.4V409.8M988.5 405.3V409.9M989.5 405.1V410.1M990.5 405V410.2M991.5 405.6V409.6M992.5 406.2V409M993.5 406.5V408.5M994.5 406.4V408.9M995.5 406.1V409.3M996.5 405.7V409.8M997.5 405.4V410.1M998.5 405.1V410.4M999.5 404.8V410.8M1000.5 404.4V411.1M1001.5 404.3V411.3M1002.5 404.2V411.6M1003.5 404V411.8M1004.5 403.9V412M1005.5 403.7V412.3M1006.5 403.9V412.1M1007.5 404.1V411.9M1008.5 404.3V411.7M1009.5 404.4V411.5M1010.5 404.6V411.3M1011.5 405V410.7M1012.5 405.4V410.2M1013.5 405.8V409.7M1014.5 406.2V409.1M1015.5 406.4V408.9M1016.5 406.5V408.6M1017.5 406.5V408.5M1018.5 406.5V408.5M1019.5 406.5V408.5M1020.5 406.5V408.5M1021.5 406.5V408.5M1022.5 406.5V408.5M1023.5 406.5V408.5M1024.5 406.5V408.5M1025.5 406.5V408.5M1026.5 406.5V408.5M1027.5 406.5V408.5M1028.5 406.5V408.5M1029.5 406.5V408.5M1030.5 406.5V408.5M1031.5 406.5V408.5M1032.5 406.5V408.5M1033.5 406.5V408.5M1034.5 406.5V408.5M1035.5 406.5V408.5M1036.5 406.5V408.5M1037.5 406.5V408.5M1038.5 406.5V408.5M1039.5 406.5V408.5M1040.5 406.5V408.5" stroke="#dc0000" stroke-width="1" fill="none" shape-rendering="crispEdges"/><path d="M36 258.500H1041M36 407.500H1041" stroke="#d4d4d4" stroke-width="1" stroke-dasharray="3 3" fill="none" shape-rendering="crispEdges"/><text x="41" y="198" font-size="11.300" fill="#d0d4cc" font-family="Liberation Sans,sans-serif">1.0</text><text x="41" y="234" font-size="11.300" fill="#d0d4cc" font-family="Liberation Sans,sans-serif">0.5</text><text x="41" y="270" font-size="11.300" fill="#d0d4cc" font-family="Liberation Sans,sans-serif">0.0</text><text x="41" y="307" font-size="11.300" fill="#d0d4cc" font-family="Liberation Sans,sans-serif">-0.5</text><text x="41" y="347" font-size="11.300" fill="#d0d4cc" font-family="Liberation Sans,sans-serif">1.0</text><text x="41" y="383" font-size="11.300" fill="#d0d4cc" font-family="Liberation Sans,sans-serif">0.5</text><text x="41" y="419" font-size="11.300" fill="#d0d4cc" font-family="Liberation Sans,sans-serif">0.0</text><text x="41" y="456" font-size="11.300" fill="#d0d4cc" font-family="Liberation Sans,sans-serif">-0.5</text><rect x="34" y="186" width="1" height="295" fill="#00f0f8"/><rect x="1041" y="186" width="1" height="295" fill="#00f0f8"/><rect x="1042" y="186" width="2" height="295" fill="#fff"/><path d="M33 329.500l6 3.500-6 3.500z" fill="#10c010"/><path d="M111 480V187H272V480H110" stroke="#00e8f8" stroke-width="2" fill="none" shape-rendering="crispEdges"/><rect x="34" y="481" width="1008" height="2" fill="#e4e4e4"/><rect x="34" y="483" width="1008" height="8" fill="#000"/><path d="M76.500 483V491M118.500 483V491M160.500 483V491M202.500 483V491M244.500 483V491M286.500 483V491M328.500 483V491M370.500 483V491M412.500 483V491M454.500 483V491M496.500 483V491M539.500 483V491M581.500 483V491M623.500 483V491M665.500 483V491M707.500 483V491M749.500 483V491M791.500 483V491M833.500 483V491M875.500 483V491M917.500 483V491M959.500 483V491M1001.500 483V491" stroke="#8a8a8a" fill="none" shape-rendering="crispEdges"/><path d="M34.5 492v6M42.5 492v2M51.5 492v2M59.5 492v2M68.5 492v2M76.5 492v4M84.5 492v2M93.5 492v2M101.5 492v2M110.5 492v2M118.5 492v6M126.5 492v2M135.5 492v2M143.5 492v2M152.5 492v2M160.5 492v4M169.5 492v2M177.5 492v2M185.5 492v2M194.5 492v2M202.5 492v6M211.5 492v2M219.5 492v2M227.5 492v2M236.5 492v2M244.5 492v4M253.5 492v2M261.5 492v2M269.5 492v2M278.5 492v2M286.5 492v6M295.5 492v2M303.5 492v2M311.5 492v2M320.5 492v2M328.5 492v4M337.5 492v2M345.5 492v2M354.5 492v2M362.5 492v2M370.5 492v6M379.5 492v2M387.5 492v2M396.5 492v2M404.5 492v2M412.5 492v4M421.5 492v2M429.5 492v2M438.5 492v2M446.5 492v2M454.5 492v6M463.5 492v2M471.5 492v2M480.5 492v2M488.5 492v2M497.5 492v4M505.5 492v2M513.5 492v2M522.5 492v2M530.5 492v2M539.5 492v6M547.5 492v2M555.5 492v2M564.5 492v2M572.5 492v2M581.5 492v4M589.5 492v2M597.5 492v2M606.5 492v2M614.5 492v2M623.5 492v6M631.5 492v2M639.5 492v2M648.5 492v2M656.5 492v2M665.5 492v4M673.5 492v2M682.5 492v2M690.5 492v2M698.5 492v2M707.5 492v6M715.5 492v2M724.5 492v2M732.5 492v2M740.5 492v2M749.5 492v4M757.5 492v2M766.5 492v2M774.5 492v2M782.5 492v2M791.5 492v6M799.5 492v2M808.5 492v2M816.5 492v2M824.5 492v2M833.5 492v4M841.5 492v2M850.5 492v2M858.5 492v2M867.5 492v2M875.5 492v6M883.5 492v2M892.5 492v2M900.5 492v2M909.5 492v2M917.5 492v4M925.5 492v2M934.5 492v2M942.5 492v2M951.5 492v2M959.5 492v6M967.5 492v2M976.5 492v2M984.5 492v2M993.5 492v2M1001.5 492v4M1010.5 492v2M1018.5 492v2M1026.5 492v2M1035.5 492v2" stroke="#000" fill="none" shape-rendering="crispEdges"/><text x="36" y="506" font-size="11.300" fill="#000" font-family="Liberation Sans,sans-serif">00:00:00</text><text x="120" y="506" font-size="11.300" fill="#000" font-family="Liberation Sans,sans-serif">00:00:20</text><text x="204" y="506" font-size="11.300" fill="#000" font-family="Liberation Sans,sans-serif">00:00:40</text><text x="288" y="506" font-size="11.300" fill="#000" font-family="Liberation Sans,sans-serif">00:01:00</text><text x="372" y="506" font-size="11.300" fill="#000" font-family="Liberation Sans,sans-serif">00:01:20</text><text x="456" y="506" font-size="11.300" fill="#000" font-family="Liberation Sans,sans-serif">00:01:40</text><text x="541" y="506" font-size="11.300" fill="#000" font-family="Liberation Sans,sans-serif">00:02:00</text><text x="625" y="506" font-size="11.300" fill="#000" font-family="Liberation Sans,sans-serif">00:02:20</text><text x="709" y="506" font-size="11.300" fill="#000" font-family="Liberation Sans,sans-serif">00:02:40</text><text x="793" y="506" font-size="11.300" fill="#000" font-family="Liberation Sans,sans-serif">00:03:00</text><text x="877" y="506" font-size="11.300" fill="#000" font-family="Liberation Sans,sans-serif">00:03:20</text><text x="961" y="506" font-size="11.300" fill="#000" font-family="Liberation Sans,sans-serif">00:03:40</text><rect x="34" y="507" width="1008" height="1" fill="#fff"/><rect x="32" y="511" width="1011" height="2" fill="#a0a0a0"/><rect x="32" y="511" width="2" height="58" fill="#a0a0a0"/><rect x="34" y="513" width="1008" height="40" fill="#fff"/><rect x="34" y="513" width="1.500" height="39" fill="#70f0f8"/><rect x="1040" y="513" width="2" height="39" fill="#40e8f0"/><rect x="37" y="515" width="1002" height="36" fill="url(#ovg)"/><rect x="37" y="521" width="1002" height="2" fill="#00f000"/><rect x="37" y="541" width="1002" height="2" fill="#ff0000"/><path d="M37.0 521.0V523.0M38.0 521.0V523.0M39.0 521.0V523.0M40.0 521.0V523.0M41.0 521.0V523.0M42.0 521.0V523.0M43.0 521.0V523.0M44.0 521.0V523.0M45.0 521.0V523.0M46.0 521.0V523.0M47.0 521.0V523.0M48.0 521.0V523.0M49.0 521.0V523.0M49.9 521.0V523.0M50.9 521.0V523.0M51.9 521.0V523.0M52.9 521.0V523.0M53.9 519.4V523.0M54.9 521.0V523.0M55.9 521.0V523.0M56.9 520.8V523.0M57.9 521.0V523.0M58.9 521.0V523.0M59.9 519.2V524.3M60.9 521.0V523.0M61.9 520.9V523.0M62.9 520.9V523.0M63.9 521.0V523.2M64.9 521.0V523.0M65.9 519.3V523.1M66.9 521.0V523.0M67.9 520.9V523.0M68.9 520.8V523.0M69.9 521.0V523.0M70.9 521.0V523.0M71.9 521.0V523.0M72.9 521.0V523.1M73.9 521.0V523.0M74.8 521.0V523.1M75.8 521.0V523.0M76.8 521.0V523.0M77.8 521.0V523.1M78.8 521.0V523.1M79.8 521.0V523.0M80.8 521.0V523.0M81.8 521.0V523.1M82.8 519.3V524.7M83.8 520.9V523.1M84.8 520.9V523.0M85.8 521.0V523.0M86.8 521.0V523.1M87.8 521.0V523.1M88.8 521.0V523.0M89.8 521.0V523.0M90.8 521.0V523.0M91.8 521.0V523.0M92.8 521.0V523.0M93.8 521.0V523.0M94.8 521.0V523.0M95.8 519.6V523.6M96.8 521.0V523.1M97.8 519.6V523.0M98.8 520.7V523.0M99.7 521.0V523.0M100.7 520.9V523.0M101.7 520.7V523.4M102.7 519.3V524.2M103.7 520.7V523.5M104.7 520.7V523.4M105.7 520.4V523.4M106.7 520.3V523.1M107.7 520.1V523.8M108.7 520.1V523.3M109.7 520.0V523.7M110.7 520.1V523.8M111.7 518.5V523.5M112.7 520.6V523.4M113.7 520.4V523.4M114.7 519.7V524.1M115.7 519.9V524.2M116.7 520.0V524.2M117.7 519.6V523.6M118.7 519.7V523.8M119.7 520.0V524.3M120.7 520.2V523.9M121.7 518.5V525.2M122.7 520.5V524.1M123.7 520.3V523.8M124.7 520.7V523.3M125.6 520.5V523.5M126.6 520.8V523.2M127.6 520.9V523.4M128.6 520.8V523.0M129.6 521.0V523.0M130.6 521.0V523.0M131.6 521.0V523.0M132.6 521.0V523.0M133.6 521.0V523.0M134.6 521.0V523.4M135.6 521.0V523.2M136.6 520.6V523.7M137.6 521.0V523.3M138.6 520.6V523.4M139.6 520.8V523.8M140.6 518.9V524.1M141.6 520.6V523.4M142.6 520.7V523.5M143.6 520.8V523.8M144.6 520.6V523.4M145.6 521.0V524.2M146.6 520.5V523.6M147.6 520.5V523.6M148.6 520.6V523.8M149.6 520.8V524.0M150.5 520.9V523.9M151.5 520.5V523.9M152.5 521.0V523.6M153.5 520.7V523.8M154.5 521.0V523.3M155.5 520.8V523.7M156.5 520.9V523.7M157.5 521.0V523.6M158.5 521.0V523.4M159.5 520.8V523.0M160.5 519.7V524.4M161.5 521.0V523.0M162.5 521.0V523.0M163.5 521.0V523.0M164.5 521.0V523.0M165.5 520.9V523.4M166.5 520.9V523.6M167.5 520.8V524.1M168.5 520.5V523.4M169.5 520.6V523.9M170.5 520.6V523.5M171.5 520.6V524.1M172.5 520.8V524.4M173.5 519.0V524.0M174.5 520.1V524.0M175.4 520.7V524.6M176.4 520.1V524.6M177.4 520.1V524.4M178.4 520.5V523.5M179.4 519.2V524.2M180.4 520.7V523.4M181.4 520.9V523.4M182.4 520.8V523.1M183.4 520.9V523.2M184.4 519.4V523.6M185.4 521.0V523.1M186.4 521.0V523.1M187.4 520.7V523.2M188.4 520.7V523.7M189.4 520.7V523.2M190.4 520.9V523.6M191.4 520.6V523.3M192.4 520.7V523.9M193.4 520.6V523.5M194.4 520.3V523.6M195.4 520.0V523.8M196.4 519.1V523.6M197.4 518.7V524.3M198.4 520.5V523.8M199.4 520.9V523.4M200.3 520.9V523.3M201.3 519.2V524.3M202.3 521.0V523.4M203.3 520.8V523.4M204.3 521.0V523.3M205.3 521.0V523.2M206.3 520.9V523.1M207.3 521.0V523.1M208.3 521.0V523.0M209.3 520.7V523.2M210.3 520.8V523.0M211.3 519.4V523.4M212.3 521.0V523.0M213.3 521.0V523.0M214.3 521.0V523.0M215.3 520.8V523.1M216.3 520.7V523.2M217.3 521.0V523.4M218.3 518.9V524.4M219.3 519.2V524.4M220.3 520.6V523.4M221.3 520.6V523.2M222.3 520.5V523.8M223.3 520.5V524.0M224.3 520.3V523.6M225.2 520.3V524.5M226.2 520.2V525.2M227.2 520.3V524.4M228.2 519.6V525.5M229.2 519.4V525.1M230.2 519.3V525.9M231.2 519.8V526.2M232.2 519.2V525.0M233.2 519.8V525.7M234.2 517.6V526.1M235.2 519.4V525.9M236.2 518.5V525.1M237.2 519.8V525.1M238.2 519.9V524.4M239.2 520.4V524.2M240.2 520.3V523.7M241.2 520.5V523.4M242.2 521.0V523.2M243.2 521.0V523.0M244.2 520.9V523.5M245.2 521.0V523.0M246.2 521.0V523.0M247.2 519.6V524.1M248.2 521.0V523.0M249.2 520.7V523.7M250.1 520.9V523.9M251.1 520.2V524.0M252.1 520.7V524.4M253.1 520.2V524.7M254.1 520.1V524.5M255.1 520.4V524.9M256.1 520.2V524.5M257.1 520.1V525.4M258.1 520.0V524.7M259.1 519.6V525.1M260.1 519.9V525.0M261.1 519.5V524.5M262.1 520.1V525.2M263.1 520.5V524.9M264.1 520.2V523.9M265.1 520.3V523.5M266.1 521.0V523.2M267.1 519.5V523.0M268.1 520.7V523.3M269.1 521.0V523.1M270.1 519.3V523.8M271.1 520.9V523.3M272.1 520.2V523.4M273.1 520.3V523.5M274.1 520.7V523.5M275.0 520.8V524.3M276.0 520.7V523.8M277.0 520.7V523.6M278.0 520.1V523.5M279.0 520.1V524.4M280.0 520.1V524.0M281.0 520.8V523.9M282.0 520.2V524.1M283.0 520.0V524.7M284.0 519.3V524.9M285.0 519.2V524.2M286.0 519.9V525.4M287.0 519.7V524.2M288.0 518.1V525.3M289.0 519.8V524.9M290.0 519.4V524.3M291.0 520.0V524.1M292.0 519.7V524.4M293.0 520.1V523.6M294.0 520.4V523.5M295.0 520.3V523.5M296.0 520.5V523.7M297.0 520.8V523.0M298.0 520.8V523.0M299.0 520.8V523.0M300.0 521.0V523.0M300.9 521.0V523.0M301.9 521.0V523.0M302.9 521.0V523.0M303.9 521.0V523.0M304.9 521.0V523.0M305.9 521.0V523.0M306.9 521.0V523.0M307.9 521.0V523.0M308.9 521.0V523.0M309.9 521.0V523.0M310.9 521.0V523.0M311.9 521.0V523.0M312.9 521.0V523.0M313.9 521.0V523.0M314.9 521.0V523.0M315.9 521.0V523.0M316.9 521.0V523.0M317.9 521.0V523.0M318.9 521.0V523.0M319.9 521.0V523.0M320.9 521.0V523.0M321.9 521.0V523.0M322.9 521.0V523.0M323.9 521.0V523.0M324.9 521.0V523.0M325.8 521.0V523.0M326.8 521.0V523.0M327.8 521.0V523.0M328.8 521.0V523.0M329.8 521.0V523.0M330.8 521.0V523.0M331.8 521.0V523.0M332.8 521.0V523.0M333.8 521.0V523.0M334.8 521.0V523.0M335.8 521.0V523.0M336.8 521.0V523.0M337.8 521.0V523.0M338.8 521.0V523.0M339.8 521.0V523.0M340.8 521.0V523.0M341.8 521.0V523.0M342.8 521.0V523.0M343.8 521.0V523.7M344.8 521.0V523.1M345.8 521.0V523.6M346.8 520.9V523.7M347.8 519.3V524.8M348.8 521.0V523.6M349.8 521.0V523.6M350.7 520.8V523.7M351.7 520.6V524.5M352.7 521.0V523.9M353.7 521.0V524.6M354.7 520.9V524.7M355.7 520.7V523.9M356.7 520.5V524.5M357.7 519.0V524.9M358.7 520.3V524.1M359.7 520.5V524.0M360.7 520.4V524.6M361.7 520.8V524.3M362.7 520.8V523.7M363.7 520.9V523.3M364.7 520.9V523.4M365.7 521.0V523.0M366.7 521.0V523.0M367.7 521.0V523.0M368.7 521.0V523.0M369.7 521.0V523.0M370.7 519.8V523.4M371.7 521.0V523.0M372.7 521.0V523.0M373.7 521.0V523.0M374.7 521.0V523.4M375.6 520.9V523.6M376.6 520.9V523.7M377.6 520.9V523.2M378.6 520.8V523.6M379.6 519.5V523.7M380.6 520.9V523.7M381.6 520.7V523.6M382.6 521.0V523.8M383.6 518.9V524.6M384.6 521.0V524.0M385.6 520.5V523.3M386.6 520.9V523.9M387.6 519.2V524.3M388.6 520.5V523.3M389.6 520.8V523.5M390.6 520.7V523.3M391.6 518.9V523.4M392.6 520.8V523.6M393.6 521.0V523.4M394.6 521.0V523.0M395.6 521.0V523.2M396.6 521.0V523.1M397.6 521.0V523.0M398.6 521.0V523.0M399.6 521.0V523.0M400.5 519.8V523.8M401.5 521.0V523.0M402.5 521.0V523.0M403.5 521.0V523.0M404.5 521.0V523.0M405.5 521.0V523.0M406.5 521.0V523.0M407.5 521.0V523.0M408.5 521.0V523.0M409.5 521.0V523.0M410.5 521.0V523.0M411.5 521.0V523.0M412.5 521.0V523.0M413.5 521.0V523.0M414.5 521.0V523.0M415.5 519.6V523.3M416.5 521.0V523.0M417.5 520.8V524.0M418.5 520.7V523.5M419.5 520.5V523.6M420.5 520.3V524.1M421.5 520.9V523.5M422.5 520.2V524.1M423.5 520.8V523.7M424.5 520.7V523.6M425.4 520.2V523.7M426.4 518.6V524.3M427.4 520.4V523.7M428.4 520.8V524.3M429.4 520.6V523.6M430.4 520.5V523.9M431.4 520.2V524.0M432.4 520.7V523.7M433.4 520.4V524.2M434.4 520.4V524.1M435.4 520.2V524.3M436.4 520.0V524.1M437.4 518.2V525.4M438.4 520.4V524.7M439.4 519.6V525.3M440.4 520.3V525.1M441.4 519.6V525.5M442.4 519.8V524.3M443.4 518.6V525.8M444.4 520.3V524.5M445.4 518.1V526.0M446.4 519.4V525.2M447.4 520.2V524.6M448.4 519.9V525.3M449.4 519.6V525.2M450.3 519.2V525.7M451.3 519.9V524.5M452.3 519.9V524.8M453.3 520.1V524.9M454.3 520.5V524.8M455.3 520.3V524.5M456.3 520.7V523.7M457.3 520.2V523.8M458.3 520.6V523.6M459.3 520.8V523.5M460.3 521.0V523.3M461.3 521.0V523.0M462.3 521.0V523.0M463.3 519.9V524.0M464.3 521.0V523.0M465.3 521.0V523.0M466.3 521.0V523.0M467.3 521.0V523.0M468.3 521.0V523.0M469.3 521.0V523.0M470.3 519.5V523.4M471.3 519.8V524.2M472.3 520.3V524.9M473.3 520.2V524.4M474.3 519.4V524.8M475.3 519.5V524.2M476.2 519.2V525.1M477.2 519.9V524.7M478.2 519.2V524.4M479.2 519.0V525.4M480.2 520.0V524.8M481.2 519.2V525.7M482.2 519.1V525.0M483.2 518.9V525.0M484.2 519.7V525.9M485.2 519.3V524.8M486.2 518.6V526.0M487.2 518.7V524.8M488.2 518.5V525.8M489.2 518.9V525.0M490.2 518.7V525.2M491.2 519.0V525.1M492.2 519.1V525.2M493.2 518.9V525.5M494.2 519.2V525.4M495.2 519.3V524.9M496.2 519.7V524.9M497.2 520.2V524.7M498.2 519.7V524.9M499.2 519.8V524.4M500.2 520.5V524.0M501.1 520.3V523.6M502.1 520.8V523.1M503.1 521.0V523.0M504.1 519.3V523.2M505.1 520.5V523.3M506.1 520.7V523.7M507.1 518.4V523.7M508.1 520.7V523.7M509.1 520.4V524.0M510.1 520.2V523.6M511.1 519.9V523.4M512.1 520.0V523.6M513.1 520.5V524.4M514.1 519.9V523.7M515.1 520.4V523.6M516.1 520.3V524.4M517.1 520.5V524.0M518.1 520.4V523.9M519.1 519.7V523.7M520.1 519.7V524.0M521.1 519.9V523.7M522.1 519.6V524.6M523.1 519.6V524.5M524.1 520.4V523.8M525.1 520.3V524.8M526.0 519.6V523.9M527.0 520.3V523.7M528.0 519.9V523.9M529.0 518.8V525.1M530.0 518.3V525.0M531.0 520.1V524.0M532.0 520.3V523.5M533.0 518.6V523.7M534.0 520.7V523.2M535.0 519.2V525.1M536.0 520.4V523.6M537.0 520.8V523.1M538.0 520.6V523.2M539.0 520.7V523.0M540.0 520.9V523.3M541.0 520.5V523.3M542.0 520.7V523.3M543.0 520.6V523.5M544.0 520.3V524.2M545.0 520.2V524.7M546.0 519.7V524.5M547.0 520.0V524.9M548.0 519.8V525.5M549.0 519.7V525.5M550.0 517.6V525.8M550.9 520.1V524.8M551.9 519.2V524.8M552.9 519.6V525.7M553.9 519.4V525.1M554.9 517.7V525.0M555.9 519.3V525.7M556.9 518.9V525.0M557.9 519.3V525.0M558.9 519.6V525.5M559.9 518.8V526.6M560.9 518.8V525.5M561.9 518.7V525.9M562.9 518.5V526.9M563.9 518.1V525.2M564.9 519.5V526.3M565.9 519.1V527.0M566.9 519.0V525.5M567.9 517.9V526.8M568.9 519.1V526.1M569.9 518.1V526.0M570.9 519.2V525.7M571.9 518.1V527.1M572.9 519.5V527.0M573.9 519.5V525.5M574.9 519.0V526.1M575.8 519.4V525.1M576.8 519.3V525.0M577.8 519.9V525.5M578.8 520.0V525.8M579.8 519.1V525.3M580.8 518.0V524.4M581.8 519.9V523.6M582.8 520.6V523.5M583.8 520.5V523.5M584.8 521.0V523.0M585.8 521.0V523.0M586.8 521.0V523.0M587.8 521.0V523.0M588.8 521.0V523.0M589.8 521.0V523.0M590.8 518.8V526.5M591.8 518.6V526.1M592.8 518.8V526.4M593.8 518.4V527.8M594.8 518.8V526.6M595.8 518.2V527.5M596.8 515.8V526.7M597.8 517.5V527.7M598.8 517.4V527.4M599.8 517.8V527.0M600.7 518.0V528.0M601.7 518.4V526.2M602.7 517.6V527.0M603.7 516.8V526.5M604.7 517.9V526.9M605.7 516.7V527.6M606.7 517.0V527.8M607.7 517.3V527.0M608.7 517.5V526.2M609.7 517.4V526.4M610.7 516.5V527.6M611.7 517.2V526.5M612.7 515.6V530.2M613.7 517.9V526.9M614.7 516.8V526.3M615.7 516.7V528.5M616.7 517.7V527.4M617.7 515.5V527.9M618.7 516.4V527.1M619.7 517.2V527.3M620.7 517.9V527.5M621.7 515.4V528.6M622.7 518.1V528.0M623.7 514.8V529.8M624.7 516.6V527.1M625.7 517.2V527.3M626.6 518.2V526.2M627.6 518.0V525.8M628.6 519.2V525.8M629.6 518.6V524.7M630.6 519.0V525.1M631.6 519.2V524.6M632.6 519.2V524.2M633.6 518.0V524.8M634.6 517.3V524.7M635.6 519.2V523.8M636.6 517.5V524.7M637.6 519.3V523.7M638.6 519.3V524.0M639.6 519.3V523.5M640.6 519.4V523.3M641.6 520.2V523.8M642.6 520.0V523.5M643.6 519.9V523.3M644.6 518.8V524.9M645.6 519.7V523.3M646.6 519.4V524.3M647.6 519.2V524.5M648.6 518.0V524.2M649.6 519.4V524.2M650.6 518.8V524.9M651.5 517.3V525.9M652.5 517.9V525.9M653.5 518.2V525.9M654.5 518.0V525.6M655.5 517.6V525.4M656.5 517.7V526.3M657.5 516.6V525.8M658.5 517.1V525.2M659.5 516.3V526.7M660.5 518.0V526.5M661.5 516.7V527.1M662.5 517.5V526.9M663.5 517.0V527.0M664.5 515.8V526.7M665.5 513.9V528.2M666.5 514.7V528.3M667.5 515.2V528.7M668.5 515.6V528.6M669.5 516.4V530.2M670.5 515.3V529.2M671.5 513.5V530.4M672.5 515.6V530.7M673.5 516.0V530.5M674.5 514.7V529.4M675.5 513.8V528.6M676.4 514.6V527.7M677.4 515.1V531.1M678.4 516.0V529.7M679.4 513.3V528.9M680.4 516.3V528.0M681.4 515.6V530.2M682.4 516.7V530.0M683.4 514.2V530.4M684.4 515.4V527.8M685.4 516.2V528.9M686.4 515.1V528.5M687.4 515.5V528.1M688.4 517.7V528.3M689.4 518.0V527.4M690.4 517.1V528.3M691.4 516.0V526.8M692.4 515.6V527.8M693.4 515.8V528.1M694.4 517.5V527.8M695.4 517.5V527.5M696.4 516.9V527.3M697.4 516.7V528.0M698.4 517.0V527.0M699.4 517.8V526.8M700.4 517.4V526.3M701.3 516.5V527.0M702.3 516.9V525.0M703.3 515.6V526.1M704.3 516.1V527.0M705.3 518.5V524.6M706.3 519.4V524.5M707.3 517.0V526.2M708.3 519.4V524.3M709.3 518.1V525.8M710.3 518.0V527.0M711.3 516.3V526.5M712.3 517.6V527.6M713.3 515.7V528.9M714.3 515.6V528.4M715.3 515.5V528.9M716.3 515.5V528.5M717.3 515.8V529.0M718.3 515.3V527.7M719.3 515.1V530.5M720.3 514.4V529.2M721.3 512.8V528.8M722.3 516.3V528.6M723.3 515.8V530.3M724.3 515.7V530.1M725.3 515.5V528.4M726.2 515.9V529.9M727.2 514.4V530.7M728.2 515.0V527.7M729.2 516.9V527.1M730.2 516.1V529.4M731.2 515.6V529.4M732.2 517.3V528.1M733.2 516.0V528.7M734.2 516.4V529.0M735.2 515.2V529.2M736.2 515.8V528.0M737.2 515.6V529.3M738.2 517.7V528.1M739.2 516.0V526.0M740.2 516.2V527.5M741.2 518.3V526.5M742.2 516.9V525.5M743.2 517.9V525.6M744.2 517.3V525.8M745.2 517.6V525.7M746.2 518.3V525.1M747.2 516.6V525.8M748.2 516.7V525.2M749.2 518.0V525.7M750.2 516.8V525.1M751.1 518.0V526.2M752.1 517.4V525.4M753.1 515.1V524.9M754.1 517.8V525.2M755.1 518.5V524.7M756.1 518.8V524.5M757.1 516.3V525.2M758.1 518.5V524.1M759.1 518.9V524.8M760.1 518.9V524.4M761.1 520.1V524.0M762.1 520.0V523.6M763.1 520.5V523.7M764.1 520.1V523.2M765.1 517.9V525.2M766.1 517.7V526.0M767.1 516.6V526.0M768.1 515.5V527.2M769.1 517.2V528.4M770.1 514.1V527.8M771.1 512.3V529.4M772.1 514.6V529.4M773.1 514.0V527.3M774.1 516.0V529.1M775.1 514.9V528.1M776.0 514.6V528.0M777.0 514.2V529.6M778.0 517.1V529.3M779.0 517.0V528.2M780.0 516.7V528.4M781.0 515.6V529.2M782.0 517.3V527.8M783.0 516.7V530.3M784.0 517.3V528.8M785.0 515.3V529.1M786.0 516.6V528.2M787.0 515.3V528.6M788.0 513.9V530.3M789.0 515.0V530.3M790.0 515.1V530.2M791.0 516.0V529.9M792.0 516.9V528.0M793.0 513.3V530.2M794.0 516.1V529.0M795.0 515.1V530.3M796.0 517.1V528.8M797.0 516.0V528.0M798.0 517.1V529.1M799.0 515.7V527.3M800.0 517.0V527.2M801.0 518.9V525.3M801.9 516.2V526.2M802.9 519.0V524.9M803.9 519.6V524.8M804.9 518.6V525.0M805.9 517.4V524.4M806.9 519.1V524.0M807.9 519.8V523.9M808.9 518.1V524.4M809.9 519.9V524.8M810.9 519.0V524.5M811.9 519.3V524.9M812.9 517.2V526.3M813.9 518.1V526.6M814.9 517.8V527.1M815.9 517.4V527.1M816.9 517.1V527.1M817.9 515.5V527.7M818.9 516.7V527.4M819.9 516.8V527.1M820.9 515.1V529.5M821.9 517.4V529.6M822.9 516.0V529.9M823.9 516.5V528.1M824.9 515.7V529.5M825.9 514.5V527.9M826.8 515.0V530.3M827.8 516.0V528.7M828.8 517.0V527.8M829.8 517.0V530.2M830.8 516.0V528.1M831.8 514.3V529.5M832.8 516.3V528.8M833.8 512.6V530.8M834.8 517.0V530.5M835.8 515.9V529.1M836.8 517.1V527.9M837.8 517.2V529.4M838.8 515.2V528.2M839.8 515.0V530.3M840.8 516.0V527.8M841.8 514.9V527.4M842.8 517.6V528.0M843.8 514.5V529.3M844.8 514.9V527.7M845.8 516.4V528.7M846.8 515.5V529.4M847.8 514.0V530.9M848.8 514.8V530.3M849.8 516.7V530.9M850.8 514.3V529.5M851.7 514.5V528.9M852.7 514.2V530.6M853.7 514.2V530.9M854.7 512.1V529.3M855.7 514.9V530.7M856.7 513.5V529.0M857.7 514.3V528.5M858.7 511.9V529.3M859.7 513.6V530.8M860.7 511.4V530.2M861.7 514.9V529.7M862.7 514.3V528.4M863.7 511.7V529.0M864.7 515.1V531.1M865.7 514.8V530.5M866.7 515.1V529.9M867.7 515.0V530.7M868.7 515.4V531.2M869.7 514.5V530.4M870.7 514.8V530.4M871.7 513.1V527.8M872.7 513.0V529.1M873.7 512.8V527.9M874.7 513.9V528.1M875.7 516.2V528.7M876.6 516.6V527.9M877.6 514.8V528.4M878.6 515.8V527.7M879.6 514.6V529.4M880.6 515.6V529.0M881.6 515.4V529.8M882.6 515.6V529.8M883.6 515.2V527.5M884.6 516.1V530.0M885.6 515.2V528.4M886.6 516.0V527.8M887.6 515.2V527.6M888.6 514.7V529.1M889.6 515.6V528.9M890.6 515.7V528.3M891.6 516.1V530.3M892.6 516.2V530.6M893.6 514.7V531.1M894.6 514.1V530.1M895.6 513.9V529.9M896.6 516.0V527.4M897.6 514.8V530.2M898.6 515.8V528.8M899.6 516.1V527.5M900.6 515.7V527.3M901.5 514.3V529.3M902.5 515.0V528.4M903.5 516.3V527.4M904.5 516.1V527.5M905.5 513.5V530.4M906.5 513.0V529.6M907.5 515.5V528.6M908.5 516.4V527.3M909.5 513.8V527.1M910.5 515.2V529.6M911.5 514.3V529.5M912.5 515.9V527.4M913.5 516.2V527.9M914.5 516.5V528.2M915.5 515.3V529.6M916.5 516.5V528.2M917.5 517.2V527.4M918.5 517.4V527.8M919.5 516.9V527.8M920.5 516.2V527.4M921.5 515.1V527.8M922.5 516.0V529.7M923.5 514.7V529.0M924.5 516.9V528.8M925.5 515.4V526.8M926.4 521.0V523.0M927.4 521.0V523.0M928.4 521.0V523.0M929.4 521.0V523.0M930.4 521.0V523.0M931.4 521.0V523.0M932.4 521.0V523.0M933.4 521.0V523.0M934.4 521.0V523.0M935.4 520.8V523.0M936.4 520.9V523.2M937.4 519.1V524.3M938.4 520.9V523.0M939.4 521.0V523.0M940.4 519.1V524.1M941.4 521.0V523.0M942.4 521.0V523.0M943.4 521.0V523.0M944.4 521.0V523.0M945.4 521.0V523.0M946.4 521.0V523.0M947.4 521.0V523.0M948.4 521.0V523.0M949.4 521.0V523.0M950.4 521.0V523.0M951.3 521.0V523.0M952.3 521.0V523.0M953.3 521.0V523.0M954.3 519.9V523.9M955.3 520.5V524.3M956.3 519.7V524.2M957.3 519.5V524.6M958.3 520.8V523.2M959.3 521.0V523.0M960.3 521.0V523.0M961.3 521.0V523.0M962.3 520.0V523.0M963.3 521.0V523.0M964.3 520.0V523.0M965.3 521.0V523.0M966.3 521.0V523.0M967.3 521.0V523.0M968.3 521.0V523.0M969.3 519.8V523.0M970.3 521.0V523.0M971.3 520.0V524.3M972.3 519.8V524.8M973.3 519.6V525.3M974.3 517.6V526.3M975.3 519.2V524.8M976.3 519.6V524.6M977.2 520.2V524.1M978.2 520.6V523.6M979.2 521.0V523.0M980.2 521.0V523.0M981.2 521.0V523.0M982.2 521.0V523.0M983.2 519.5V524.1M984.2 520.1V524.1M985.2 519.2V524.8M986.2 518.6V525.3M987.2 519.6V525.9M988.2 518.9V525.2M989.2 519.7V524.6M990.2 520.0V523.8M991.2 521.0V523.3M992.2 518.7V524.4M993.2 519.8V524.2M994.2 519.3V524.8M995.2 518.3V525.3M996.2 518.1V525.4M997.2 518.3V526.8M998.2 518.7V527.0M999.2 518.4V528.0M1000.2 517.7V528.1M1001.2 516.6V528.5M1002.1 516.9V527.3M1003.1 517.9V529.1M1004.1 514.9V527.8M1005.1 516.0V529.0M1006.1 517.1V527.8M1007.1 518.6V526.7M1008.1 518.2V526.0M1009.1 517.3V526.9M1010.1 519.7V525.8M1011.1 519.8V524.3M1012.1 520.5V524.1M1013.1 520.3V523.4M1014.1 520.9V523.4M1015.1 519.7V523.9M1016.1 521.0V523.0M1017.1 519.8V523.3M1018.1 521.0V523.0M1019.1 521.0V523.0M1020.1 521.0V523.0M1021.1 521.0V523.0M1022.1 521.0V523.0M1023.1 521.0V523.0M1024.1 521.0V523.0M1025.1 521.0V523.0M1026.1 521.0V523.0M1027.0 521.0V523.0M1028.0 521.0V523.0M1029.0 521.0V523.0M1030.0 521.0V523.0M1031.0 521.0V523.0M1032.0 521.0V523.0M1033.0 521.0V523.0M1034.0 521.0V523.0M1035.0 521.0V523.0M1036.0 521.0V523.0M1037.0 521.0V523.0M1038.0 521.0V523.0" stroke="#00f000" stroke-width="1.200" fill="none"/><path d="M37.0 541.0V543.0M38.0 541.0V543.0M39.0 541.0V543.0M40.0 541.0V543.0M41.0 541.0V543.0M42.0 541.0V543.0M43.0 541.0V543.0M44.0 541.0V543.0M45.0 541.0V543.0M46.0 541.0V543.0M47.0 541.0V543.0M48.0 541.0V543.0M49.0 539.6V543.1M49.9 541.0V543.0M50.9 541.0V543.0M51.9 541.0V543.0M52.9 541.0V543.0M53.9 541.0V543.0M54.9 541.0V543.0M55.9 541.0V543.0M56.9 541.0V543.0M57.9 539.6V544.3M58.9 540.9V543.0M59.9 541.0V543.0M60.9 540.8V543.0M61.9 541.0V543.0M62.9 540.8V543.0M63.9 539.2V543.5M64.9 541.0V543.0M65.9 540.9V543.0M66.9 540.9V543.0M67.9 540.9V543.1M68.9 541.0V543.0M69.9 541.0V543.0M70.9 541.0V543.0M71.9 539.6V544.4M72.9 541.0V543.0M73.9 541.0V543.0M74.8 541.0V543.0M75.8 540.9V543.0M76.8 539.5V543.9M77.8 541.0V543.0M78.8 541.0V543.0M79.8 541.0V543.0M80.8 540.9V543.0M81.8 541.0V543.1M82.8 541.0V543.0M83.8 541.0V543.0M84.8 541.0V543.0M85.8 539.7V543.9M86.8 541.0V543.0M87.8 541.0V543.0M88.8 541.0V543.0M89.8 541.0V543.0M90.8 541.0V543.0M91.8 541.0V543.0M92.8 541.0V543.0M93.8 541.0V543.0M94.8 541.0V543.0M95.8 541.0V543.0M96.8 540.9V543.0M97.8 541.0V543.0M98.8 541.0V543.1M99.7 541.0V543.0M100.7 540.9V543.4M101.7 541.0V543.5M102.7 540.9V543.5M103.7 540.7V543.0M104.7 540.8V543.5M105.7 539.0V544.7M106.7 540.7V543.2M107.7 540.6V543.5M108.7 540.4V543.6M109.7 540.5V543.5M110.7 540.3V543.5M111.7 540.2V543.2M112.7 539.9V544.0M113.7 538.4V544.6M114.7 540.1V543.8M115.7 540.2V544.2M116.7 539.8V543.5M117.7 540.2V543.7M118.7 540.5V543.9M119.7 540.3V543.6M120.7 540.6V543.7M121.7 540.1V543.5M122.7 539.9V544.0M123.7 540.6V543.8M124.7 540.8V543.4M125.6 540.6V543.4M126.6 541.0V543.1M127.6 539.5V544.4M128.6 541.0V543.0M129.6 541.0V543.1M130.6 539.6V543.6M131.6 541.0V543.0M132.6 541.0V543.0M133.6 541.0V543.0M134.6 541.0V543.3M135.6 539.3V543.2M136.6 541.0V543.6M137.6 540.8V543.1M138.6 539.5V544.9M139.6 541.0V543.9M140.6 541.0V543.7M141.6 540.9V543.8M142.6 541.0V544.0M143.6 540.8V544.0M144.6 540.7V543.9M145.6 539.5V543.5M146.6 540.8V543.9M147.6 540.5V543.8M148.6 541.0V543.4M149.6 540.8V544.0M150.5 540.9V543.4M151.5 540.8V543.3M152.5 540.6V543.8M153.5 540.6V543.3M154.5 540.8V543.7M155.5 541.0V543.3M156.5 540.7V543.3M157.5 541.0V543.5M158.5 541.0V543.4M159.5 541.0V543.5M160.5 539.4V543.0M161.5 541.0V543.0M162.5 539.9V543.6M163.5 541.0V543.0M164.5 541.0V543.0M165.5 541.0V543.0M166.5 541.0V543.3M167.5 539.3V544.2M168.5 540.7V544.0M169.5 539.1V544.7M170.5 540.6V544.0M171.5 540.6V544.2M172.5 539.1V544.8M173.5 540.7V543.6M174.5 540.8V544.0M175.4 540.8V544.3M176.4 540.6V544.0M177.4 540.6V544.2M178.4 540.5V544.0M179.4 540.5V543.7M180.4 540.7V543.2M181.4 541.0V543.0M182.4 540.9V543.0M183.4 540.9V543.0M184.4 541.0V543.4M185.4 541.0V543.2M186.4 541.0V543.4M187.4 541.0V543.5M188.4 540.8V543.8M189.4 539.2V544.5M190.4 540.7V543.7M191.4 540.3V543.6M192.4 540.6V543.2M193.4 538.9V545.0M194.4 540.7V543.5M195.4 540.6V543.9M196.4 540.6V544.1M197.4 540.4V543.5M198.4 540.6V543.2M199.4 538.9V544.0M200.3 540.8V543.5M201.3 540.6V543.2M202.3 540.8V543.0M203.3 541.0V543.0M204.3 540.8V543.0M205.3 540.7V543.1M206.3 540.8V543.0M207.3 540.9V543.0M208.3 539.4V544.3M209.3 541.0V543.2M210.3 541.0V543.1M211.3 540.8V543.0M212.3 540.9V543.0M213.3 541.0V543.2M214.3 541.0V543.0M215.3 540.7V543.3M216.3 541.0V543.2M217.3 540.9V543.3M218.3 541.0V543.2M219.3 540.8V543.3M220.3 539.2V544.8M221.3 540.8V543.2M222.3 540.8V543.3M223.3 540.8V543.3M224.3 540.3V543.6M225.2 540.2V544.4M226.2 538.6V546.3M227.2 539.7V544.8M228.2 539.8V545.2M229.2 538.6V544.6M230.2 539.8V544.5M231.2 539.5V545.7M232.2 539.3V545.5M233.2 538.6V545.1M234.2 539.7V545.9M235.2 538.3V546.0M236.2 538.3V545.9M237.2 539.7V545.3M238.2 540.1V544.1M239.2 540.6V544.3M240.2 540.8V543.7M241.2 540.7V543.3M242.2 540.8V543.0M243.2 540.8V543.0M244.2 539.4V544.3M245.2 540.8V543.0M246.2 541.0V543.1M247.2 539.6V543.4M248.2 541.0V543.0M249.2 540.9V543.1M250.1 540.6V543.6M251.1 540.4V543.8M252.1 540.3V544.3M253.1 538.5V545.7M254.1 539.9V544.3M255.1 539.9V544.1M256.1 539.8V545.2M257.1 540.4V544.6M258.1 540.5V544.3M259.1 538.6V546.7M260.1 540.5V545.3M261.1 540.4V544.5M262.1 540.6V544.2M263.1 540.2V544.1M264.1 540.5V544.4M265.1 539.3V544.3M266.1 540.9V543.3M267.1 541.0V543.0M268.1 541.0V543.1M269.1 539.1V544.0M270.1 540.6V543.0M271.1 539.2V543.4M272.1 540.6V543.7M273.1 540.5V543.9M274.1 540.2V543.5M275.0 540.8V543.7M276.0 540.6V544.1M277.0 540.3V543.5M278.0 540.5V543.6M279.0 539.2V543.9M280.0 540.7V543.7M281.0 540.7V544.2M282.0 540.2V543.8M283.0 540.2V544.6M284.0 540.4V544.6M285.0 538.6V545.7M286.0 540.0V544.7M287.0 539.1V544.9M288.0 539.6V544.3M289.0 538.3V545.6M290.0 539.4V543.9M291.0 540.3V544.4M292.0 540.7V544.2M293.0 540.6V543.4M294.0 540.3V543.3M295.0 541.0V543.4M296.0 541.0V543.1M297.0 540.9V543.2M298.0 541.0V543.1M299.0 541.0V543.0M300.0 541.0V543.0M300.9 541.0V543.0M301.9 541.0V543.0M302.9 541.0V543.0M303.9 541.0V543.0M304.9 541.0V543.0M305.9 541.0V543.0M306.9 541.0V543.0M307.9 541.0V543.0M308.9 541.0V543.0M309.9 541.0V543.0M310.9 541.0V543.0M311.9 541.0V543.0M312.9 541.0V543.0M313.9 541.0V543.0M314.9 541.0V543.0M315.9 541.0V543.0M316.9 541.0V543.0M317.9 541.0V543.0M318.9 541.0V543.0M319.9 541.0V543.0M320.9 541.0V543.0M321.9 541.0V543.0M322.9 541.0V543.0M323.9 541.0V543.0M324.9 541.0V543.0M325.8 541.0V543.0M326.8 541.0V543.0M327.8 541.0V543.0M328.8 541.0V543.0M329.8 541.0V543.0M330.8 541.0V543.0M331.8 541.0V543.0M332.8 541.0V543.0M333.8 541.0V543.0M334.8 541.0V543.0M335.8 541.0V543.0M336.8 541.0V543.0M337.8 541.0V543.0M338.8 541.0V543.0M339.8 541.0V543.0M340.8 541.0V543.0M341.8 541.0V543.0M342.8 541.0V543.0M343.8 541.0V543.3M344.8 541.0V543.4M345.8 540.9V543.6M346.8 540.9V543.9M347.8 539.2V544.4M348.8 539.5V544.0M349.8 539.5V544.1M350.7 540.8V543.9M351.7 540.7V544.2M352.7 540.9V543.9M353.7 540.7V544.2M354.7 540.7V544.4M355.7 540.8V544.2M356.7 540.7V544.0M357.7 540.9V544.3M358.7 540.7V544.5M359.7 539.0V544.2M360.7 541.0V543.8M361.7 539.5V545.5M362.7 541.0V544.0M363.7 541.0V543.1M364.7 541.0V543.3M365.7 541.0V543.0M366.7 541.0V543.0M367.7 541.0V543.0M368.7 541.0V543.0M369.7 541.0V543.0M370.7 541.0V543.0M371.7 541.0V543.0M372.7 541.0V543.0M373.7 541.0V543.0M374.7 539.4V543.5M375.6 539.4V544.2M376.6 539.4V543.9M377.6 541.0V543.6M378.6 539.1V544.4M379.6 540.7V543.1M380.6 541.0V543.7M381.6 540.9V543.7M382.6 540.8V543.6M383.6 541.0V543.4M384.6 540.9V543.6M385.6 540.9V543.7M386.6 539.1V543.9M387.6 539.1V544.4M388.6 539.2V543.8M389.6 540.8V543.8M390.6 540.6V543.3M391.6 540.8V543.2M392.6 540.8V543.6M393.6 540.8V543.5M394.6 540.9V543.1M395.6 541.0V543.3M396.6 541.0V543.0M397.6 541.0V543.0M398.6 541.0V543.0M399.6 541.0V543.0M400.5 541.0V543.0M401.5 539.8V543.4M402.5 539.9V544.0M403.5 541.0V543.0M404.5 541.0V543.0M405.5 540.0V543.8M406.5 541.0V543.0M407.5 541.0V543.0M408.5 541.0V543.0M409.5 541.0V543.0M410.5 541.0V543.0M411.5 541.0V543.0M412.5 541.0V543.0M413.5 541.0V543.0M414.5 541.0V543.0M415.5 541.0V543.0M416.5 541.0V543.2M417.5 539.2V543.7M418.5 540.6V543.4M419.5 540.4V543.3M420.5 540.5V543.6M421.5 540.5V543.3M422.5 540.6V543.3M423.5 540.6V543.7M424.5 540.6V543.8M425.4 540.7V543.7M426.4 540.8V543.7M427.4 540.8V544.2M428.4 540.7V543.4M429.4 540.6V544.2M430.4 540.4V544.0M431.4 540.6V544.3M432.4 540.5V544.0M433.4 540.2V544.0M434.4 540.0V544.2M435.4 540.2V544.0M436.4 540.2V544.4M437.4 540.0V544.6M438.4 540.0V544.6M439.4 540.3V544.5M440.4 539.8V544.6M441.4 539.9V545.3M442.4 539.5V544.2M443.4 539.9V545.1M444.4 539.9V545.0M445.4 539.5V545.3M446.4 539.3V545.5M447.4 539.4V545.0M448.4 539.3V545.3M449.4 539.6V545.2M450.3 537.5V545.6M451.3 538.5V545.9M452.3 539.6V544.3M453.3 539.7V544.4M454.3 540.3V543.7M455.3 540.5V544.2M456.3 540.7V543.6M457.3 540.9V543.6M458.3 540.6V543.1M459.3 540.9V543.5M460.3 541.0V543.3M461.3 539.7V544.2M462.3 541.0V543.0M463.3 541.0V543.0M464.3 541.0V543.0M465.3 541.0V543.0M466.3 541.0V543.0M467.3 541.0V543.0M468.3 541.0V543.0M469.3 541.0V543.0M470.3 539.5V543.3M471.3 540.2V544.1M472.3 540.3V544.9M473.3 538.8V545.9M474.3 539.7V544.0M475.3 539.7V544.1M476.2 539.7V544.3M477.2 538.1V545.0M478.2 539.2V544.8M479.2 539.1V545.4M480.2 539.8V545.6M481.2 539.2V545.6M482.2 538.2V546.7M483.2 540.1V544.8M484.2 539.8V545.1M485.2 539.5V545.8M486.2 538.9V544.4M487.2 538.2V546.8M488.2 539.4V545.6M489.2 539.7V544.6M490.2 538.7V545.0M491.2 539.0V545.1M492.2 538.9V544.4M493.2 539.4V544.7M494.2 539.5V544.8M495.2 539.7V545.2M496.2 539.3V544.7M497.2 539.6V544.1M498.2 540.4V544.5M499.2 540.5V543.7M500.2 540.4V544.0M501.1 540.8V543.9M502.1 540.8V543.1M503.1 541.0V543.0M504.1 540.9V543.2M505.1 540.9V543.5M506.1 540.6V543.5M507.1 539.2V544.5M508.1 540.4V543.9M509.1 540.5V543.6M510.1 540.3V543.4M511.1 540.2V543.8M512.1 540.6V543.5M513.1 540.6V544.1M514.1 540.4V543.6M515.1 540.1V544.2M516.1 538.6V545.2M517.1 540.4V544.2M518.1 540.4V543.8M519.1 539.8V544.2M520.1 540.0V544.0M521.1 540.2V543.6M522.1 539.9V544.3M523.1 540.2V544.0M524.1 540.1V544.6M525.1 539.7V544.6M526.0 540.1V544.5M527.0 540.0V544.5M528.0 540.6V544.1M529.0 540.6V543.6M530.0 540.2V543.6M531.0 540.1V543.4M532.0 540.4V543.4M533.0 540.5V543.3M534.0 540.6V543.2M535.0 541.0V543.0M536.0 540.7V543.0M537.0 540.9V543.3M538.0 540.7V543.3M539.0 541.0V543.0M540.0 541.0V543.4M541.0 540.8V543.1M542.0 540.8V543.1M543.0 540.5V543.4M544.0 540.2V543.5M545.0 540.5V544.1M546.0 540.1V544.1M547.0 540.1V545.4M548.0 540.2V544.7M549.0 539.4V544.7M550.0 539.7V544.5M550.9 540.1V544.8M551.9 539.7V544.8M552.9 540.1V545.1M553.9 539.9V545.6M554.9 539.1V546.0M555.9 539.6V546.0M556.9 539.7V545.8M557.9 539.1V545.3M558.9 539.4V545.3M559.9 537.7V547.8M560.9 538.9V545.8M561.9 539.1V545.7M562.9 538.9V545.4M563.9 538.4V546.7M564.9 539.7V545.0M565.9 538.9V545.4M566.9 539.5V545.2M567.9 539.5V546.2M568.9 538.8V546.8M569.9 539.3V545.9M570.9 538.3V546.0M571.9 539.6V545.6M572.9 539.4V545.5M573.9 539.3V546.6M574.9 539.5V545.6M575.8 539.9V545.7M576.8 539.4V545.1M577.8 540.0V545.1M578.8 539.8V545.4M579.8 540.1V544.9M580.8 540.1V544.3M581.8 540.4V544.0M582.8 540.8V543.4M583.8 540.8V543.1M584.8 541.0V543.0M585.8 539.8V543.4M586.8 541.0V543.0M587.8 541.0V543.0M588.8 541.0V543.0M589.8 541.0V543.0M590.8 538.3V545.4M591.8 537.8V547.0M592.8 537.4V546.6M593.8 537.1V547.2M594.8 538.6V547.3M595.8 538.2V547.7M596.8 537.8V547.0M597.8 537.9V547.0M598.8 538.3V547.5M599.8 536.7V548.2M600.7 537.7V547.1M601.7 537.2V548.2M602.7 537.7V546.4M603.7 538.0V548.3M604.7 536.3V546.9M605.7 537.8V547.4M606.7 537.8V547.8M607.7 536.9V547.1M608.7 536.5V546.9M609.7 538.1V548.5M610.7 537.8V548.5M611.7 537.7V547.4M612.7 537.5V546.4M613.7 537.7V548.5M614.7 537.8V548.1M615.7 537.5V547.9M616.7 536.7V546.9M617.7 536.3V546.1M618.7 537.5V548.3M619.7 536.8V548.1M620.7 537.0V547.3M621.7 538.4V548.4M622.7 536.5V548.8M623.7 536.9V546.3M624.7 538.3V547.8M625.7 537.9V547.7M626.6 536.9V546.1M627.6 537.0V546.3M628.6 538.8V547.9M629.6 538.3V546.8M630.6 538.8V547.6M631.6 537.4V547.3M632.6 538.3V546.0M633.6 538.3V545.6M634.6 538.1V546.6M635.6 538.2V546.5M636.6 537.9V547.0M637.6 538.4V545.9M638.6 538.9V547.1M639.6 539.2V545.7M640.6 538.6V546.6M641.6 537.8V547.0M642.6 539.2V545.9M643.6 537.4V548.4M644.6 537.9V547.1M645.6 538.4V547.4M646.6 537.6V546.7M647.6 538.6V546.9M648.6 538.9V547.2M649.6 538.5V546.8M650.6 538.2V546.4M651.5 536.3V546.2M652.5 538.4V545.5M653.5 535.0V546.7M654.5 537.3V545.7M655.5 536.1V548.6M656.5 537.2V548.0M657.5 535.9V548.5M658.5 535.5V547.4M659.5 536.9V547.2M660.5 535.8V547.4M661.5 537.0V547.9M662.5 536.3V547.5M663.5 534.6V547.6M664.5 535.2V547.6M665.5 536.4V548.2M666.5 536.1V548.1M667.5 535.6V546.4M668.5 534.7V548.7M669.5 533.9V547.0M670.5 534.4V547.1M671.5 533.9V547.2M672.5 534.7V546.6M673.5 535.2V548.0M674.5 534.4V547.4M675.5 537.1V548.2M676.4 534.7V548.4M677.4 535.1V548.1M678.4 536.0V547.8M679.4 536.0V548.3M680.4 535.8V547.5M681.4 534.9V546.3M682.4 537.4V547.3M683.4 535.6V547.7M684.4 536.8V547.6M685.4 537.5V546.8M686.4 536.5V547.7M687.4 537.0V547.5M688.4 538.0V547.1M689.4 538.0V546.8M690.4 537.2V546.3M691.4 537.2V547.4M692.4 538.2V545.4M693.4 536.6V547.1M694.4 537.8V545.9M695.4 537.6V546.3M696.4 538.1V545.6M697.4 537.1V546.0M698.4 536.8V545.6M699.4 536.7V546.0M700.4 535.3V547.9M701.3 537.4V547.1M702.3 535.5V546.3M703.3 535.4V545.8M704.3 536.1V546.7M705.3 535.9V548.2M706.3 536.4V546.2M707.3 537.5V546.3M708.3 537.3V546.5M709.3 536.8V547.0M710.3 534.8V548.9M711.3 537.3V549.0M712.3 536.1V547.1M713.3 533.8V549.0M714.3 535.4V548.2M715.3 536.2V547.2M716.3 535.3V547.8M717.3 535.7V547.6M718.3 536.4V547.1M719.3 536.5V547.3M720.3 536.4V548.2M721.3 534.2V548.7M722.3 536.9V549.1M723.3 534.5V549.0M724.3 535.4V547.4M725.3 536.6V550.0M726.2 534.6V548.8M727.2 536.3V547.7M728.2 535.2V548.3M729.2 536.8V548.6M730.2 534.8V548.6M731.2 536.3V549.6M732.2 535.8V546.9M733.2 535.0V548.0M734.2 533.5V550.0M735.2 536.1V549.1M736.2 535.7V549.2M737.2 536.5V547.5M738.2 535.9V547.7M739.2 537.7V546.8M740.2 537.9V546.9M741.2 536.1V547.0M742.2 536.0V549.8M743.2 537.8V548.2M744.2 536.7V548.4M745.2 537.3V547.9M746.2 535.3V548.0M747.2 535.7V547.9M748.2 536.6V548.3M749.2 537.0V546.9M750.2 535.8V546.4M751.1 536.0V546.4M752.1 537.3V546.3M753.1 536.3V546.2M754.1 537.6V546.2M755.1 537.4V547.6M756.1 538.1V547.6M757.1 538.8V545.2M758.1 540.0V543.8M759.1 540.2V543.4M760.1 540.4V543.8M761.1 538.2V546.3M762.1 537.6V546.9M763.1 537.1V548.1M764.1 536.8V548.5M765.1 536.1V547.6M766.1 537.0V546.6M767.1 536.5V547.6M768.1 537.8V547.1M769.1 536.2V547.4M770.1 536.4V548.6M771.1 537.2V548.7M772.1 534.5V548.0M773.1 536.5V547.3M774.1 537.2V548.2M775.1 537.1V547.2M776.0 533.5V549.6M777.0 536.2V547.3M778.0 534.4V549.8M779.0 537.4V548.6M780.0 535.8V546.8M781.0 536.7V548.4M782.0 537.2V547.0M783.0 536.3V547.3M784.0 536.8V549.0M785.0 535.6V547.5M786.0 534.1V550.7M787.0 536.6V549.4M788.0 536.6V548.3M789.0 537.6V548.6M790.0 537.0V547.6M791.0 537.0V548.8M792.0 535.9V547.3M793.0 536.2V546.9M794.0 537.4V549.1M795.0 538.1V548.9M796.0 537.5V548.6M797.0 536.6V549.7M798.0 535.0V548.7M799.0 537.4V547.5M800.0 537.0V546.4M801.0 536.8V548.3M801.9 536.4V547.3M802.9 535.8V548.0M803.9 537.5V547.1M804.9 538.3V545.4M805.9 538.4V546.3M806.9 537.7V547.1M807.9 537.8V546.4M808.9 537.0V547.2M809.9 538.1V546.7M810.9 538.3V546.2M811.9 538.5V545.7M812.9 537.3V546.8M813.9 537.4V548.7M814.9 534.3V550.1M815.9 533.5V547.9M816.9 534.6V549.7M817.9 532.2V550.3M818.9 536.4V550.0M819.9 536.3V548.4M820.9 533.9V548.0M821.9 536.7V548.0M822.9 536.8V550.6M823.9 535.8V548.9M824.9 536.6V550.3M825.9 536.9V550.4M826.8 535.5V548.6M827.8 534.4V547.6M828.8 536.7V550.2M829.8 536.4V549.5M830.8 536.5V550.0M831.8 536.6V547.6M832.8 537.0V548.0M833.8 536.8V548.2M834.8 535.6V549.1M835.8 534.8V550.1M836.8 536.6V549.2M837.8 536.9V550.4M838.8 535.6V548.9M839.8 535.4V547.7M840.8 536.5V548.5M841.8 536.3V549.1M842.8 538.3V546.6M843.8 536.1V548.0M844.8 535.4V550.1M845.8 535.1V548.8M846.8 537.2V547.1M847.8 535.4V548.5M848.8 536.0V549.2M849.8 536.6V550.2M850.8 534.0V547.8M851.7 536.6V549.9M852.7 534.8V549.4M853.7 535.9V549.5M854.7 535.2V548.9M855.7 536.8V549.5M856.7 534.1V550.8M857.7 536.5V549.5M858.7 533.6V548.6M859.7 534.8V548.4M860.7 536.4V550.6M861.7 534.9V548.4M862.7 535.3V547.5M863.7 532.6V548.3M864.7 535.4V548.5M865.7 534.1V549.3M866.7 535.8V547.9M867.7 533.7V549.9M868.7 533.8V550.5M869.7 533.7V548.4M870.7 534.5V549.3M871.7 535.6V550.2M872.7 535.8V547.5M873.7 534.2V548.3M874.7 534.3V548.3M875.7 536.6V547.6M876.6 535.1V548.7M877.6 534.8V547.5M878.6 534.0V549.9M879.6 534.5V549.6M880.6 535.1V549.2M881.6 535.0V547.0M882.6 535.9V549.6M883.6 537.2V548.7M884.6 534.3V547.9M885.6 534.3V547.2M886.6 536.8V547.4M887.6 535.1V550.3M888.6 534.1V550.2M889.6 535.5V547.5M890.6 535.6V549.1M891.6 534.8V550.2M892.6 533.8V550.4M893.6 536.3V550.3M894.6 535.8V548.2M895.6 536.7V547.7M896.6 534.4V550.3M897.6 534.4V547.4M898.6 536.9V547.8M899.6 533.2V550.1M900.6 537.0V549.4M901.5 534.9V548.3M902.5 537.1V548.7M903.5 535.8V549.2M904.5 536.2V549.5M905.5 534.4V549.1M906.5 532.9V550.7M907.5 534.6V548.4M908.5 536.7V548.1M909.5 535.6V547.4M910.5 535.3V549.1M911.5 537.3V548.3M912.5 536.7V548.0M913.5 535.3V548.9M914.5 535.4V549.0M915.5 536.1V546.5M916.5 536.9V548.2M917.5 536.7V547.8M918.5 535.3V547.6M919.5 536.0V548.2M920.5 534.9V549.3M921.5 536.9V546.8M922.5 537.3V547.7M923.5 536.2V549.0M924.5 534.0V549.4M925.5 535.4V546.9M926.4 540.7V543.0M927.4 541.0V543.0M928.4 541.0V543.0M929.4 541.0V543.0M930.4 541.0V543.0M931.4 541.0V543.0M932.4 541.0V543.0M933.4 541.0V543.0M934.4 541.0V543.0M935.4 540.9V543.0M936.4 541.0V543.0M937.4 540.8V543.1M938.4 540.8V543.0M939.4 541.0V543.0M940.4 540.6V543.2M941.4 541.0V543.0M942.4 541.0V543.0M943.4 541.0V543.0M944.4 541.0V543.0M945.4 541.0V543.0M946.4 541.0V543.0M947.4 541.0V543.0M948.4 541.0V543.0M949.4 541.0V543.0M950.4 541.0V543.0M951.3 541.0V543.0M952.3 541.0V543.0M953.3 541.0V543.0M954.3 540.3V543.9M955.3 539.7V543.6M956.3 540.0V543.5M957.3 540.2V543.9M958.3 538.7V544.0M959.3 539.9V544.0M960.3 541.0V543.0M961.3 541.0V543.0M962.3 541.0V543.0M963.3 541.0V543.0M964.3 541.0V543.0M965.3 541.0V543.0M966.3 541.0V543.0M967.3 541.0V543.0M968.3 541.0V543.0M969.3 541.0V543.0M970.3 541.0V543.0M971.3 540.2V543.8M972.3 540.0V544.5M973.3 539.4V544.9M974.3 539.9V545.1M975.3 540.1V544.5M976.3 539.5V544.8M977.2 538.3V545.7M978.2 540.6V543.2M979.2 541.0V543.0M980.2 541.0V543.0M981.2 541.0V543.0M982.2 539.6V543.0M983.2 539.6V544.1M984.2 539.5V544.7M985.2 539.0V545.4M986.2 539.6V544.9M987.2 539.7V544.8M988.2 539.2V545.3M989.2 539.2V544.5M990.2 540.5V543.5M991.2 540.9V543.1M992.2 540.4V543.3M993.2 540.6V544.7M994.2 538.3V546.7M995.2 538.9V545.0M996.2 537.2V546.2M997.2 539.4V545.9M998.2 539.2V546.2M999.2 537.9V547.2M1000.2 538.4V547.2M1001.2 538.5V547.7M1002.1 537.5V546.4M1003.1 536.7V548.2M1004.1 537.0V548.6M1005.1 538.3V548.4M1006.1 537.2V547.5M1007.1 536.3V547.3M1008.1 537.9V547.1M1009.1 539.0V546.6M1010.1 539.2V545.7M1011.1 539.8V544.7M1012.1 540.7V544.0M1013.1 540.6V543.3M1014.1 541.0V543.5M1015.1 540.9V543.0M1016.1 541.0V543.0M1017.1 541.0V543.0M1018.1 541.0V543.0M1019.1 541.0V543.0M1020.1 541.0V543.0M1021.1 541.0V543.0M1022.1 541.0V543.0M1023.1 541.0V543.0M1024.1 541.0V543.0M1025.1 541.0V543.0M1026.1 541.0V543.0M1027.0 541.0V543.0M1028.0 541.0V543.0M1029.0 541.0V543.0M1030.0 541.0V543.0M1031.0 541.0V543.0M1032.0 541.0V543.0M1033.0 541.0V543.0M1034.0 541.0V543.0M1035.0 541.0V543.0M1036.0 541.0V543.0M1037.0 541.0V543.0M1038.0 541.0V543.0" stroke="#ff0000" stroke-width="1.200" fill="none"/><path d="M34 528.500l6 4-6 4z" fill="#10c010" stroke="#fff" stroke-width=".8"/><path d="M34.5 554v6M42.5 554v2M51.5 554v2M59.5 554v2M68.5 554v2M76.5 554v4M84.5 554v2M93.5 554v2M101.5 554v2M110.5 554v2M118.5 554v6M126.5 554v2M135.5 554v2M143.5 554v2M152.5 554v2M160.5 554v4M169.5 554v2M177.5 554v2M185.5 554v2M194.5 554v2M202.5 554v6M211.5 554v2M219.5 554v2M227.5 554v2M236.5 554v2M244.5 554v4M253.5 554v2M261.5 554v2M269.5 554v2M278.5 554v2M286.5 554v6M295.5 554v2M303.5 554v2M311.5 554v2M320.5 554v2M328.5 554v4M337.5 554v2M345.5 554v2M354.5 554v2M362.5 554v2M370.5 554v6M379.5 554v2M387.5 554v2M396.5 554v2M404.5 554v2M412.5 554v4M421.5 554v2M429.5 554v2M438.5 554v2M446.5 554v2M454.5 554v6M463.5 554v2M471.5 554v2M480.5 554v2M488.5 554v2M497.5 554v4M505.5 554v2M513.5 554v2M522.5 554v2M530.5 554v2M539.5 554v6M547.5 554v2M555.5 554v2M564.5 554v2M572.5 554v2M581.5 554v4M589.5 554v2M597.5 554v2M606.5 554v2M614.5 554v2M623.5 554v6M631.5 554v2M639.5 554v2M648.5 554v2M656.5 554v2M665.5 554v4M673.5 554v2M682.5 554v2M690.5 554v2M698.5 554v2M707.5 554v6M715.5 554v2M724.5 554v2M732.5 554v2M740.5 554v2M749.5 554v4M757.5 554v2M766.5 554v2M774.5 554v2M782.5 554v2M791.5 554v6M799.5 554v2M808.5 554v2M816.5 554v2M824.5 554v2M833.5 554v4M841.5 554v2M850.5 554v2M858.5 554v2M867.5 554v2M875.5 554v6M883.5 554v2M892.5 554v2M900.5 554v2M909.5 554v2M917.5 554v4M925.5 554v2M934.5 554v2M942.5 554v2M951.5 554v2M959.5 554v6M967.5 554v2M976.5 554v2M984.5 554v2M993.5 554v2M1001.5 554v4M1010.5 554v2M1018.5 554v2M1026.5 554v2M1035.5 554v2" stroke="#000" fill="none" shape-rendering="crispEdges"/><text transform="translate(36 566) scale(1 1.14)" font-size="9.400" fill="#000" font-family="Liberation Sans,sans-serif">00:00:00</text><text transform="translate(120 566) scale(1 1.14)" font-size="9.400" fill="#000" font-family="Liberation Sans,sans-serif">00:00:20</text><text transform="translate(204 566) scale(1 1.14)" font-size="9.400" fill="#000" font-family="Liberation Sans,sans-serif">00:00:40</text><text transform="translate(288 566) scale(1 1.14)" font-size="9.400" fill="#000" font-family="Liberation Sans,sans-serif">00:01:00</text><text transform="translate(372 566) scale(1 1.14)" font-size="9.400" fill="#000" font-family="Liberation Sans,sans-serif">00:01:20</text><text transform="translate(456 566) scale(1 1.14)" font-size="9.400" fill="#000" font-family="Liberation Sans,sans-serif">00:01:40</text><text transform="translate(541 566) scale(1 1.14)" font-size="9.400" fill="#000" font-family="Liberation Sans,sans-serif">00:02:00</text><text transform="translate(625 566) scale(1 1.14)" font-size="9.400" fill="#000" font-family="Liberation Sans,sans-serif">00:02:20</text><text transform="translate(709 566) scale(1 1.14)" font-size="9.400" fill="#000" font-family="Liberation Sans,sans-serif">00:02:40</text><text transform="translate(793 566) scale(1 1.14)" font-size="9.400" fill="#000" font-family="Liberation Sans,sans-serif">00:03:00</text><text transform="translate(877 566) scale(1 1.14)" font-size="9.400" fill="#000" font-family="Liberation Sans,sans-serif">00:03:20</text><text transform="translate(961 566) scale(1 1.14)" font-size="9.400" fill="#000" font-family="Liberation Sans,sans-serif">00:03:40</text></svg><svg class="abs" style="left:0;top:0;z-index:40" width="1080" height="625" viewBox="0 0 1080 625"><defs><linearGradient id="lb" x1="0" y1="0" x2="0" y2="1"><stop offset="0" stop-color="#d4f0fc"/><stop offset=".45" stop-color="#7cd0f4"/><stop offset="1" stop-color="#2ea4e4"/></linearGradient><linearGradient id="bk" x1="0" y1="0" x2="0" y2="1"><stop offset="0" stop-color="#7a7e82"/><stop offset=".22" stop-color="#3a3c40"/><stop offset=".3" stop-color="#141414"/><stop offset="1" stop-color="#0a0a0a"/></linearGradient><linearGradient id="ww" x1="0" y1="0" x2="0" y2="1"><stop offset="0" stop-color="#ffffff"/><stop offset="1" stop-color="#a8dcf4"/></linearGradient></defs><path d="M912 570c-8-1-16 3-19 11-2 6-1 11 1 15l-4 3c-2 6-1 12 2 17 1 3 3 4 6 4h11c2-1 2-3 1-5l3-12c2-8 3-14 2-20z" fill="#111"/><path d="M890 600c3 1 5 3 7 2s3-3 5-2 3 3 5 2" stroke="#888" stroke-width=".8" fill="none"/><path d="M947 590c5 1 8 6 8 13 0 6-2 11-4 13-1 3-4 4-8 3l-2-4c3-6 4-14 3-22z" fill="#111"/><path d="M908 607c6 5 14 7 21 7s13-2 18-6l-2 9c-5 3-11 4-17 4s-12-1-17-4z" fill="#f0a838"/><ellipse cx="927" cy="599" rx="22" ry="14" fill="#fff"/><circle cx="919" cy="566.500" r="5" fill="#111"/><circle cx="941.500" cy="564" r="4.800" fill="#111"/><ellipse cx="931" cy="575" rx="18" ry="14.500" fill="#fff"/><path d="M929 561l2-4 2 3 1.500-3 1 4" stroke="#e8e8e8" stroke-width=".8" fill="#fff"/><path d="M921 587c5 5 16 6 25 2" stroke="#c8c8c8" stroke-width="1" fill="none"/><ellipse cx="936" cy="582" rx="5.200" ry="4.200" fill="#111" transform="rotate(-20 936 582)"/><circle cx="937.500" cy="581.500" r="1.700" fill="#fff"/><circle cx="938" cy="581.800" r=".8" fill="#111"/><ellipse cx="947.500" cy="578.500" rx="1.800" ry="2.600" fill="#111" transform="rotate(-20 947.500 578.500)"/><ellipse cx="945.500" cy="584.500" rx="2" ry="1.300" fill="#111"/><ellipse cx="933.500" cy="589.500" rx="3" ry="1.600" fill="#f8b8c0"/><path d="M937 573c1-1 2.500-1 3.500 0" stroke="#999" stroke-width=".6" fill="none"/><text x="0" y="0" transform="translate(958 604) rotate(-7)" font-family="Liberation Sans,Noto Sans CJK SC,sans-serif" font-weight="bold" font-size="40" fill="url(#lb)" stroke="#1c5878" stroke-width="3" paint-order="stroke" stroke-linejoin="round">小</text><text x="0" y="0" transform="translate(996 597) rotate(14)" font-family="Liberation Sans,Noto Sans CJK SC,sans-serif" font-weight="bold" font-size="42" fill="url(#bk)" stroke="#1c4c64" stroke-width="3" paint-order="stroke" stroke-linejoin="round">黑</text><text x="1033" y="606" font-family="Liberation Sans,Noto Sans CJK SC,sans-serif" font-weight="bold" font-style="italic" font-size="22" fill="url(#lb)" stroke="#2a8cc8" stroke-width="1.600" paint-order="stroke" stroke-linejoin="round" textLength="44" lengthAdjust="spacingAndGlyphs">游戏</text><text x="956" y="621" font-family="DejaVu Sans,Liberation Sans,sans-serif" font-weight="bold" font-size="11.500" fill="url(#ww)" stroke="#3a8cc0" stroke-width="2" paint-order="stroke" stroke-linejoin="round" textLength="121" lengthAdjust="spacingAndGlyphs">www.xiaohei.com</text></svg><svg class="abs" style="left:0;top:0;z-index:50" width="1080" height="625" viewBox="0 0 1080 625"><ellipse cx="197" cy="336.500" rx="147" ry="200" fill="none" stroke="#f83430" stroke-opacity=".92" stroke-width="3.200"/></svg></body></html>
